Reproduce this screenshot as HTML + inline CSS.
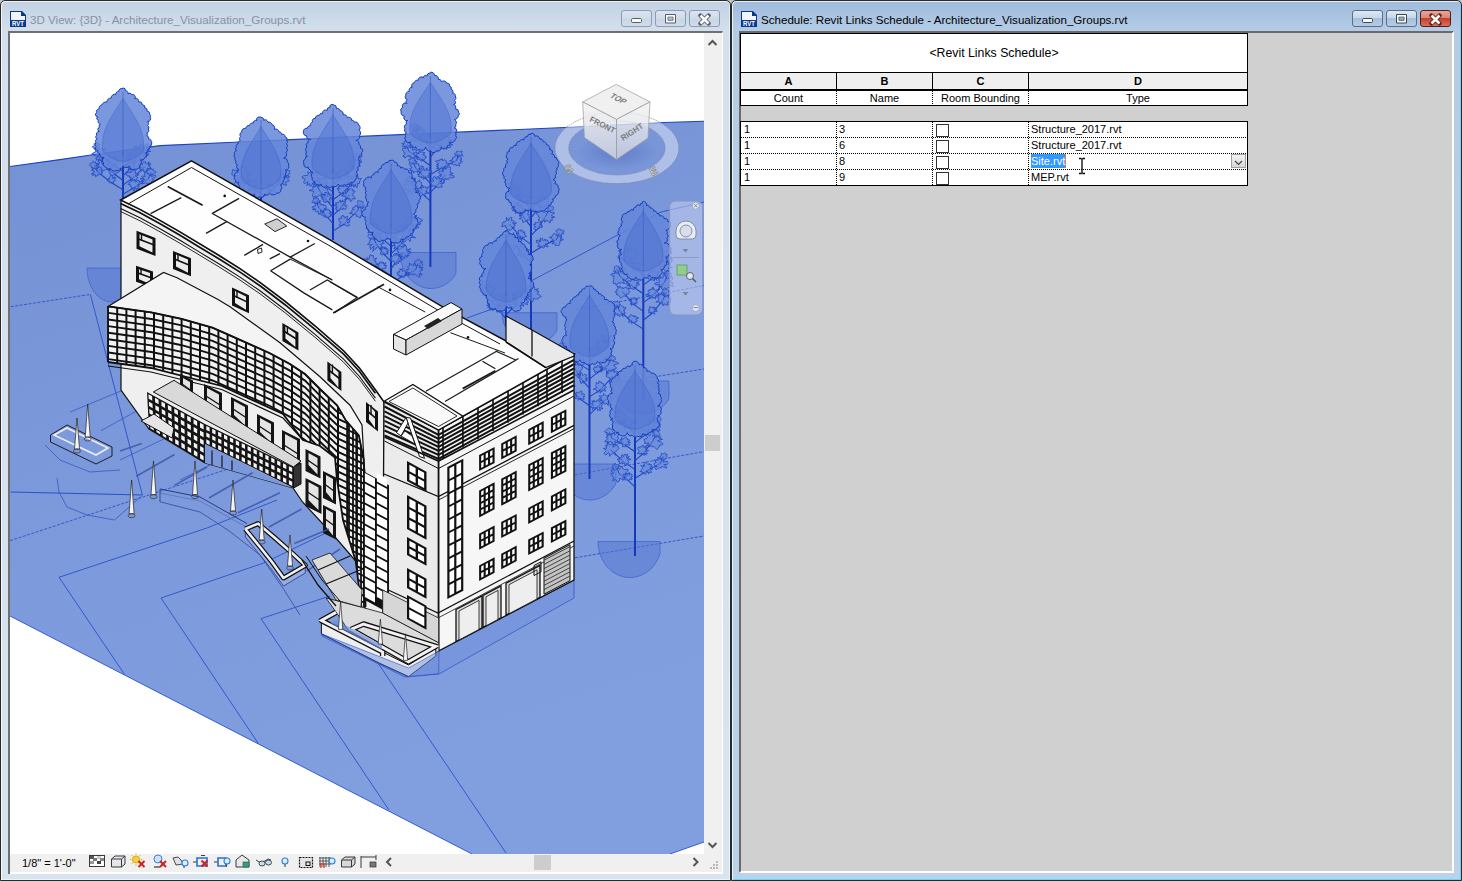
<!DOCTYPE html>
<html><head><meta charset="utf-8">
<style>
*{margin:0;padding:0;box-sizing:border-box}
html,body{width:1462px;height:881px;overflow:hidden;background:#c4c4c4;font-family:"Liberation Sans",sans-serif}
.abs{position:absolute}
.win{position:absolute;top:0;height:881px;border:1px solid #2a2a2a;border-radius:5px 5px 0 0;overflow:hidden;box-shadow:inset 1px 1px 0 rgba(255,255,255,0.75),inset -1px -1px 0 rgba(255,255,255,0.5)}
#wl{left:0;width:731px;background:linear-gradient(#c2d2e3 0px,#d3dfec 30px,#d8e4f0 100%)}
#wr{left:731px;width:731px;background:linear-gradient(#9fbbdb 0px,#b4cce6 30px,#bad2ea 100%);box-shadow:inset 1px 1px 0 rgba(255,255,255,0.75),inset -1px -1px 0 #62d4ff !important}
.title{position:absolute;top:12px;font-size:11.6px;white-space:nowrap;letter-spacing:0}
.btn{position:absolute;top:9px;width:31px;height:17px;border:1px solid #8c9cb3;border-radius:3px}
#wl .btn{background:linear-gradient(#dbe5f0,#cfdbe8 50%,#c8d5e3 51%,#d2dde9)}
#wr .btn{border-color:#5c6e86;background:linear-gradient(#dce8f5,#c5d7ec 45%,#a8c0dc 50%,#b7cce4)}
#wr .btn.close{border-color:#5a1a1a;background:linear-gradient(#e8a496,#d88a7a 45%,#c4402a 50%,#d7725e)}
.ico{position:absolute;top:10px;width:16px;height:16px}
.hd{position:absolute;top:75px;text-align:center;font-weight:bold;font-size:11px}
.nm{position:absolute;top:92px;text-align:center;font-size:11px}
.dt{position:absolute;font-size:11px;white-space:nowrap}
.vdot{position:absolute;width:1px;background:repeating-linear-gradient(#000 0 1px,transparent 1px 2px)}
.hdot{position:absolute;height:1px;background:repeating-linear-gradient(90deg,#000 0 1px,transparent 1px 2px)}
.cb{position:absolute;left:936px;width:13px;height:13px;border:1px solid #333;background:#fff}
</style></head><body>

<!-- LEFT WINDOW -->
<div class="win" id="wl">
  <svg class="ico" style="left:9px" viewBox="0 0 16 16"><path d="M0 0H12L16 4V16H0Z" fill="#0a3a8c"/><path d="M1 1H11V5H15V9H1Z" fill="#f2f5fa"/><text x="8" y="15.3" font-size="6.4" font-weight="bold" fill="#fff" text-anchor="middle" font-family="Liberation Sans" textLength="12" lengthAdjust="spacingAndGlyphs">RVT</text></svg>
  <div class="title" style="left:29px;color:#8593a3">3D View: {3D} - Architecture_Visualization_Groups.rvt</div>
  <div class="btn" style="left:620px"><svg width="29" height="15" style="position:absolute;left:0;top:0"><rect x="9.5" y="7.5" width="10" height="4" rx="1.2" fill="#fbfbf6" stroke="#555e6e" stroke-width="1"/></svg></div>
  <div class="btn" style="left:654px"><svg width="29" height="15" style="position:absolute;left:0;top:0"><path d="M9.5 3.5h10v8.5h-10z M12 6.2h5v3h-5z" fill="#fbfbf6" fill-rule="evenodd" stroke="#555e6e" stroke-width="1"/><rect x="12.5" y="6.5" width="4" height="2.2" fill="#a7bdd8"/></svg></div>
  <div class="btn" style="left:688px"><svg width="29" height="15" style="position:absolute;left:0;top:0"><path d="M10.5 4.5L18.5 12.5M18.5 4.5L10.5 12.5" stroke="#555e6e" stroke-width="4.4" stroke-linecap="round"/><path d="M10.5 4.5L18.5 12.5M18.5 4.5L10.5 12.5" stroke="#fbfbf6" stroke-width="2.6" stroke-linecap="butt"/></svg></div>
  <!-- inner area -->
  <div class="abs" style="left:7px;top:30px;width:715px;height:843px;border-top:2px solid #707070;border-left:2px solid #707070;border-right:1px solid #fff;background:#fff;overflow:hidden" id="vp">
<!--V3D-->
<svg style="position:absolute;left:0;top:0" width="713" height="839" viewBox="10 33 713 839">
<rect x="10" y="33" width="713" height="839" fill="#fff"/>
<defs><linearGradient id="gg" x1="0" y1="0" x2="0.3" y2="1"><stop offset="0" stop-color="#7591d5"/><stop offset="0.5" stop-color="#7c99db"/><stop offset="1" stop-color="#819fdf"/></linearGradient></defs>
<polygon points="10.0,166.5 60.0,159.6 96.0,154.3 160.0,145.6 234.0,142.3 360.0,136.4 570.0,127.3 664.0,122.5 704.0,121.3 704.0,842.0 670.0,854.0 472.0,854.0 10.0,616.0" fill="url(#gg)" stroke="none" stroke-width="1" />
<polyline points="10.0,166.5 60.0,159.6 96.0,154.3 160.0,145.6 234.0,142.3 360.0,136.4 570.0,127.3 664.0,122.5 704.0,121.3" fill="none" stroke="#1c44c4" stroke-width="1.1" />
<polyline points="10.0,616.0 472.0,854.0" fill="none" stroke="#2650d0" stroke-width="0.9" />
<polyline points="670.0,854.0 704.0,842.0" fill="none" stroke="#2650d0" stroke-width="0.9" />
<polyline points="10.7,306.7 90.4,294.4" fill="none" stroke="#1f48c8" stroke-width="0.8" stroke-dasharray="3 1.5"/>
<polyline points="90.4,294.4 142.4,495.0" fill="none" stroke="#1f48c8" stroke-width="0.8" />
<polyline points="10.7,492.0 142.4,495.0" fill="none" stroke="#1f48c8" stroke-width="0.9" />
<polyline points="10.0,540.7 240.0,465.0 300.0,440.0" fill="none" stroke="#1f48c8" stroke-width="0.8" stroke-dasharray="3 1.5"/>
<polyline points="124.4,674.2 59.0,577.3 207.0,528.0 277.0,500.0" fill="none" stroke="#1f48c8" stroke-width="0.8" />
<polyline points="258.0,743.0 161.0,598.0 263.7,563.0 330.0,531.0" fill="none" stroke="#1f48c8" stroke-width="0.8" />
<polyline points="389.0,810.0 261.0,618.6 330.0,596.0" fill="none" stroke="#1f48c8" stroke-width="0.8" />
<polyline points="378.6,664.0 506.0,853.0" fill="none" stroke="#1f48c8" stroke-width="0.8" />
<polyline points="575.0,557.8 704.0,536.0" fill="none" stroke="#1f48c8" stroke-width="0.8" stroke-dasharray="3 1.5"/>
<polyline points="575.0,474.8 704.0,451.6" fill="none" stroke="#1f48c8" stroke-width="0.8" stroke-dasharray="3 1.5"/>
<polyline points="640.6,379.0 704.0,369.0" fill="none" stroke="#1f48c8" stroke-width="0.8" stroke-dasharray="3 1.5"/>
<polyline points="575.0,310.0 644.0,297.0 704.0,285.5" fill="none" stroke="#1f48c8" stroke-width="0.8" stroke-dasharray="3 1.5"/>
<polyline points="531.0,281.0 661.0,212.0 704.0,202.0" fill="none" stroke="#1f48c8" stroke-width="0.8" />
<polyline points="467.0,318.0 506.0,304.0" fill="none" stroke="#1f48c8" stroke-width="0.8" />
<polyline points="57.0,478.0 59.0,492.0 67.0,507.0 87.0,515.0 114.5,520.0 141.7,496.0" fill="none" stroke="#3558c8" stroke-width="0.8" />
<polyline points="70.0,412.0 121.0,391.0" fill="none" stroke="#3558c8" stroke-width="0.8" />
<polyline points="101.0,430.7 145.5,406.0" fill="none" stroke="#3558c8" stroke-width="0.8" />
<polyline points="120.0,460.0 170.0,436.0" fill="none" stroke="#3558c8" stroke-width="0.8" />
<polyline points="180.0,480.0 240.0,450.0" fill="none" stroke="#3558c8" stroke-width="0.8" />
<polygon points="456.0,252.5 456.0,255.6 456.0,258.8 456.0,261.8 456.0,264.8 456.0,267.7 456.0,270.5 456.0,273.1 454.7,275.6 452.9,278.0 450.9,280.1 448.8,282.0 446.5,283.7 444.1,285.1 441.6,286.3 439.0,287.3 436.4,288.0 433.7,288.4 431.0,288.5 428.3,288.4 425.6,288.0 423.0,287.3 420.4,286.3 417.9,285.1 415.5,283.7 413.2,282.0 411.1,280.1 409.1,278.0 407.3,275.6 405.6,273.1 404.2,270.5 402.9,267.7 401.9,264.8 401.1,261.8 400.5,258.8 400.1,255.6 400.0,252.5" fill="#5476d2" stroke="#3058cc" stroke-width="0.6" fill-opacity="0.5"/>
<polygon points="137.0,268.0 136.9,271.0 136.6,273.9 136.1,276.8 135.5,279.6 134.7,282.4 133.7,285.0 132.5,287.5 131.2,289.9 129.7,292.0 128.1,294.0 126.3,295.9 124.5,297.4 122.6,298.8 120.6,299.9 118.5,300.8 116.3,301.5 114.2,301.9 112.0,302.0 109.8,301.9 107.7,301.5 105.5,300.8 103.4,299.9 101.4,298.8 99.5,297.4 97.7,295.9 95.9,294.0 94.3,292.0 92.8,289.9 91.5,287.5 90.3,285.0 89.3,282.4 88.5,279.6 87.9,276.8 87.4,273.9 87.1,271.0 87.0,268.0" fill="#5476d2" stroke="#3058cc" stroke-width="0.6" fill-opacity="0.5"/>
<polygon points="616.0,464.0 616.0,467.1 616.0,470.3 616.0,473.3 616.0,476.3 616.0,479.2 616.0,482.0 615.4,484.6 613.7,487.1 611.9,489.5 609.9,491.6 607.8,493.5 605.5,495.2 603.1,496.6 600.6,497.8 598.0,498.8 595.4,499.5 592.7,499.9 590.0,500.0 587.3,499.9 584.6,499.5 582.0,498.8 579.4,497.8 576.9,496.6 574.5,495.2 572.2,493.5 570.1,491.6 568.1,489.5 566.3,487.1 564.6,484.6 563.2,482.0 561.9,479.2 560.9,476.3 560.1,473.3 559.5,470.3 559.1,467.1 559.0,464.0" fill="#5476d2" stroke="#3058cc" stroke-width="0.6" fill-opacity="0.5"/>
<polygon points="660.0,541.5 660.0,544.6 660.0,547.8 660.0,550.8 660.0,553.8 659.0,556.7 657.7,559.5 656.2,562.1 654.5,564.6 652.6,567.0 650.6,569.1 648.4,571.0 646.0,572.7 643.5,574.1 640.9,575.3 638.3,576.3 635.6,577.0 632.8,577.4 630.0,577.5 627.2,577.4 624.4,577.0 621.7,576.3 619.1,575.3 616.5,574.1 614.0,572.7 611.6,571.0 609.4,569.1 607.4,567.0 605.5,564.6 603.8,562.1 602.3,559.5 601.0,556.7 599.9,553.8 599.1,550.8 598.5,547.8 598.1,544.6 598.0,541.5" fill="#5476d2" stroke="#3058cc" stroke-width="0.6" fill-opacity="0.5"/>
<polygon points="669.0,381.0 669.0,383.9 669.0,386.7 669.0,389.5 669.0,392.3 669.0,394.9 669.0,397.5 668.4,399.9 666.7,402.2 664.9,404.3 662.9,406.3 660.8,408.0 658.5,409.6 656.1,410.9 653.6,412.0 651.0,412.9 648.4,413.5 645.7,413.9 643.0,414.0 640.3,413.9 637.6,413.5 635.0,412.9 632.4,412.0 629.9,410.9 627.5,409.6 625.2,408.0 623.1,406.3 621.1,404.3 619.3,402.2 617.6,399.9 616.2,397.5 614.9,394.9 613.9,392.3 613.1,389.5 612.5,386.7 612.1,383.9 612.0,381.0" fill="#5476d2" stroke="#3058cc" stroke-width="0.6" fill-opacity="0.5"/>
<polygon points="557.0,312.7 557.0,315.5 557.0,318.3 557.0,321.0 557.0,323.6 557.0,326.2 557.0,328.7 556.6,331.1 555.0,333.3 553.2,335.3 551.3,337.2 549.2,338.9 547.0,340.4 544.7,341.7 542.3,342.8 539.8,343.6 537.2,344.2 534.6,344.6 532.0,344.7 529.4,344.6 526.8,344.2 524.2,343.6 521.7,342.8 519.3,341.7 517.0,340.4 514.8,338.9 512.7,337.2 510.8,335.3 509.0,333.3 507.4,331.1 506.0,328.7 504.8,326.2 503.8,323.6 503.0,321.0 502.5,318.3 502.1,315.5 502.0,312.7" fill="#5476d2" stroke="#3058cc" stroke-width="0.6" fill-opacity="0.5"/>
<polyline points="123.0,151.8 123.0,200.0" fill="none" stroke="#1539b9" stroke-width="2.0" />
<polyline points="123.0,166.6 132.0,159.6 143.0,150.2" fill="none" stroke="#1d46c8" stroke-width="1.1" />
<polygon points="148.3,150.2 150.8,151.4 148.0,151.8 147.4,152.5 148.9,154.7 147.4,154.9 145.8,154.6 146.0,157.5 143.8,154.1 143.0,154.2 141.5,157.8 140.0,157.5 138.2,157.6 139.7,153.7 137.9,154.0 136.9,153.3 137.3,152.0 137.2,151.1 134.3,150.2 133.5,148.7 136.4,148.0 139.0,148.1 138.0,146.4 139.7,146.6 140.3,145.9 140.5,144.0 142.2,146.0 143.0,145.2 143.9,145.6 144.5,146.6 147.5,143.1 148.3,144.5 146.6,147.4 150.5,146.3 149.9,147.9 149.1,149.2" fill="#6485d6" stroke="#1d46c8" stroke-width="0.8" fill-opacity="0.6"/>
<polygon points="134.6,156.6 136.4,157.3 135.1,157.6 136.1,158.7 134.5,158.5 134.3,159.0 133.4,158.8 133.7,160.9 132.5,159.3 132.0,160.4 131.3,160.2 131.0,159.0 130.6,158.8 130.2,158.5 127.9,159.7 127.3,159.0 127.9,157.9 127.7,157.3 127.8,156.6 128.9,156.1 127.2,155.0 129.4,155.3 129.8,154.9 129.5,153.9 129.6,152.9 130.8,153.7 131.2,152.6 132.0,153.0 132.7,153.2 133.4,153.2 133.9,153.6 134.7,153.7 134.9,154.4 136.6,154.2 134.6,155.7 136.5,155.9" fill="#6485d6" stroke="#1d46c8" stroke-width="0.8" fill-opacity="0.6"/>
<polyline points="123.0,171.2 112.4,164.2 99.5,153.0" fill="none" stroke="#1d46c8" stroke-width="1.1" />
<polygon points="104.3,153.0 104.5,153.8 104.2,154.6 103.2,155.0 102.2,155.1 102.6,156.4 102.7,158.0 101.9,159.0 100.2,156.7 99.5,159.2 98.9,156.1 97.4,158.1 97.3,156.4 96.7,155.9 95.8,155.8 94.1,155.8 95.0,154.5 91.7,154.2 92.7,153.0 95.0,152.3 95.1,151.6 96.5,151.5 94.7,149.4 95.0,148.2 95.8,147.3 97.2,147.3 98.4,147.7 99.5,149.6 100.2,149.1 101.1,148.9 102.5,148.2 102.5,149.8 105.4,148.5 104.9,150.2 103.7,151.6 103.4,152.4" fill="#6485d6" stroke="#1d46c8" stroke-width="0.8" fill-opacity="0.6"/>
<polygon points="117.0,161.2 118.4,162.2 117.7,163.0 116.8,163.5 114.6,162.9 115.8,164.9 114.7,164.8 114.5,166.4 113.1,164.9 112.4,163.7 111.4,166.3 110.6,165.7 109.4,165.9 109.4,164.5 108.6,164.1 110.1,162.4 108.3,162.6 109.4,161.7 106.5,161.2 109.6,160.8 109.9,160.4 109.0,159.5 109.3,158.9 108.7,157.3 110.0,157.5 110.8,157.3 111.8,158.1 112.4,158.2 113.2,157.0 113.5,158.6 115.4,156.6 114.9,158.6 116.1,158.5 114.6,160.1 116.2,160.0 116.0,160.7" fill="#6485d6" stroke="#1d46c8" stroke-width="0.8" fill-opacity="0.6"/>
<polyline points="99.5,153.0 96.5,146.0" fill="none" stroke="#1d46c8" stroke-width="0.9" />
<polygon points="99.0,146.0 99.5,146.7 99.5,147.5 98.9,148.1 97.9,148.2 97.5,149.3 96.5,149.5 95.2,149.9 95.0,148.1 93.5,148.5 94.2,147.1 91.9,147.0 93.7,146.0 94.7,145.6 94.2,144.9 93.9,143.8 94.7,143.3 95.5,142.9 96.5,143.9 97.6,142.3 98.5,143.0 98.4,144.4 99.9,144.3 99.6,145.3" fill="#6485d6" stroke="#1d46c8" stroke-width="0.7" fill-opacity="0.6"/>
<polyline points="123.0,175.9 130.0,168.9 138.5,155.2" fill="none" stroke="#1d46c8" stroke-width="1.1" />
<polygon points="147.8,155.2 146.5,156.5 145.2,157.4 144.5,158.3 143.6,159.1 143.0,160.1 141.4,159.7 140.8,160.9 139.6,161.0 138.5,160.7 137.3,161.6 135.1,163.6 135.9,159.2 132.4,161.8 131.7,160.4 128.9,160.2 128.8,158.4 132.4,156.2 128.8,155.2 131.2,154.1 130.4,152.6 130.7,151.2 132.6,150.8 134.9,151.4 134.5,149.0 134.7,145.9 136.7,146.2 138.5,150.6 139.4,150.6 140.8,149.5 141.8,150.0 144.6,148.7 143.6,151.4 143.3,152.8 147.3,152.4 144.4,154.3" fill="#6485d6" stroke="#1d46c8" stroke-width="0.8" fill-opacity="0.6"/>
<polygon points="134.8,165.9 134.4,166.6 132.7,166.7 134.3,168.1 132.9,168.0 132.1,168.1 131.3,167.8 131.6,170.0 130.5,168.4 130.0,170.1 129.4,168.8 128.4,169.6 128.8,167.7 128.4,167.6 128.0,167.4 127.5,167.2 127.3,166.7 127.9,166.2 125.5,165.9 127.0,165.4 126.3,164.6 127.8,164.7 127.0,163.6 128.4,164.1 128.1,162.9 129.1,163.8 129.2,161.7 130.0,161.3 130.5,163.0 131.3,162.6 131.7,163.2 132.8,162.8 133.4,163.3 133.4,164.1 134.1,164.5 133.6,165.3" fill="#6485d6" stroke="#1d46c8" stroke-width="0.8" fill-opacity="0.6"/>
<polyline points="123.0,180.5 113.8,173.5 102.6,164.4" fill="none" stroke="#1d46c8" stroke-width="1.1" />
<polygon points="110.2,164.4 105.6,164.9 106.9,165.9 108.2,167.4 108.2,168.7 107.6,169.8 105.8,169.4 104.9,170.3 103.7,170.3 102.6,171.4 101.7,169.0 100.0,170.8 98.5,170.8 97.4,170.0 97.3,168.4 98.7,166.4 98.0,165.9 94.5,165.7 98.7,164.4 96.1,163.4 99.1,163.3 99.8,163.0 98.1,161.0 99.1,160.7 98.7,158.5 100.8,160.0 101.7,160.1 102.6,159.0 103.7,158.5 103.7,161.5 105.2,160.4 106.0,160.8 108.7,159.8 107.3,162.0 109.5,162.2 108.5,163.5" fill="#6485d6" stroke="#1d46c8" stroke-width="0.8" fill-opacity="0.6"/>
<polygon points="120.7,170.5 119.8,171.4 118.7,172.1 118.1,172.7 116.6,172.6 116.2,173.1 115.5,173.1 115.7,175.2 114.7,174.8 113.8,174.5 112.8,175.8 111.9,175.1 110.5,175.6 110.1,174.5 109.9,173.5 110.1,172.4 109.3,171.9 108.7,171.3 108.5,170.5 110.1,169.9 108.3,168.7 110.6,168.8 111.3,168.6 110.5,166.9 111.7,167.2 112.4,167.0 112.8,165.2 113.8,166.8 114.9,165.1 115.8,165.4 116.3,166.5 117.2,166.8 116.3,168.6 116.6,169.0 116.4,169.7 119.5,169.6" fill="#6485d6" stroke="#1d46c8" stroke-width="0.8" fill-opacity="0.6"/>
<polyline points="102.6,164.4 99.6,157.4" fill="none" stroke="#1d46c8" stroke-width="0.9" />
<polygon points="104.3,157.4 103.8,158.4 102.0,158.6 103.0,160.4 101.4,160.2 100.4,160.1 99.6,159.6 98.3,161.3 98.2,159.5 96.3,160.2 96.7,158.8 95.4,158.4 97.3,157.4 97.2,156.9 97.3,156.3 97.5,155.7 98.2,155.4 99.0,155.8 99.6,153.7 100.3,155.0 101.5,154.6 101.3,156.0 102.8,155.8 101.9,156.9" fill="#6485d6" stroke="#1d46c8" stroke-width="0.7" fill-opacity="0.6"/>
<polyline points="123.0,185.1 132.7,178.1 144.6,166.8" fill="none" stroke="#1d46c8" stroke-width="1.1" />
<polygon points="149.4,166.8 151.2,167.9 151.3,169.0 147.2,168.2 148.0,169.4 147.9,170.3 146.4,169.6 146.9,172.6 145.8,172.8 144.6,172.7 143.8,171.1 143.5,169.6 141.7,171.4 140.9,170.8 141.3,169.3 140.0,169.2 139.3,168.6 141.2,167.4 140.9,166.8 138.1,165.8 139.8,165.3 140.2,164.5 140.5,163.7 142.6,164.6 142.3,163.2 142.9,162.6 143.6,161.6 144.6,162.0 145.6,161.6 145.9,163.6 146.3,164.1 149.3,161.8 148.0,164.3 150.9,163.6 148.3,165.6 150.4,165.9" fill="#6485d6" stroke="#1d46c8" stroke-width="0.8" fill-opacity="0.6"/>
<polygon points="138.6,175.1 136.5,175.7 135.5,176.0 137.8,177.7 137.1,178.5 136.4,179.0 136.2,180.5 135.0,180.7 133.8,180.9 132.7,181.0 132.1,178.2 130.4,180.8 130.5,178.5 131.0,177.0 129.5,177.5 129.4,176.9 129.9,176.0 127.5,175.9 126.3,175.1 126.6,174.1 126.7,173.2 126.9,172.1 129.1,172.4 130.4,172.6 130.1,171.0 131.6,172.3 132.0,171.2 132.7,169.2 133.6,170.5 134.9,169.7 135.7,170.5 135.0,172.7 135.9,172.7 135.5,173.7 136.8,173.8 138.9,174.1" fill="#6485d6" stroke="#1d46c8" stroke-width="0.8" fill-opacity="0.6"/>
<polyline points="123.0,189.7 111.5,182.7 97.4,171.8" fill="none" stroke="#1d46c8" stroke-width="1.1" />
<polygon points="101.3,171.8 102.8,172.7 100.9,173.0 101.6,174.0 101.0,174.5 99.9,174.5 99.2,174.5 98.5,174.4 98.2,175.5 97.4,174.8 96.5,176.4 95.5,176.7 95.5,174.9 94.9,174.6 92.6,175.5 93.8,173.7 91.2,173.9 93.8,172.4 93.6,171.8 94.5,171.4 91.5,169.9 93.4,169.7 91.8,167.6 93.8,167.9 95.6,169.0 96.1,168.7 96.6,167.5 97.4,168.6 98.2,168.0 99.5,166.6 100.0,167.8 101.3,167.6 101.5,168.8 101.6,169.7 101.1,170.6 101.8,171.1" fill="#6485d6" stroke="#1d46c8" stroke-width="0.8" fill-opacity="0.6"/>
<polygon points="115.1,179.7 115.8,180.4 114.8,180.8 114.3,181.2 113.4,181.1 113.3,181.7 113.9,183.5 112.8,183.0 112.2,183.4 111.5,182.1 110.9,182.6 110.2,182.8 109.5,182.8 109.2,182.2 109.0,181.6 108.4,181.3 107.5,181.1 107.7,180.4 107.6,179.7 109.4,179.4 108.5,178.8 109.2,178.6 109.7,178.4 109.4,177.5 109.8,177.1 110.2,176.4 110.7,175.6 111.5,175.3 112.3,175.6 112.4,177.4 112.4,178.3 114.4,176.7 113.3,178.4 115.9,177.5 115.5,178.4 114.5,179.3" fill="#6485d6" stroke="#1d46c8" stroke-width="0.8" fill-opacity="0.6"/>
<polyline points="97.4,171.8 94.4,164.8" fill="none" stroke="#1d46c8" stroke-width="0.9" />
<polygon points="99.0,164.8 96.2,165.2 96.8,166.0 97.2,167.2 96.7,168.1 95.6,168.7 94.4,168.1 93.4,168.3 92.5,167.8 91.2,167.6 91.8,166.1 90.1,165.8 89.5,164.8 89.8,163.8 90.9,163.1 92.5,163.2 93.0,162.7 93.2,160.8 94.4,162.8 95.4,161.6 95.5,163.2 95.8,163.7 97.5,163.3 97.5,164.1" fill="#6485d6" stroke="#1d46c8" stroke-width="0.7" fill-opacity="0.6"/>
<polyline points="123.0,194.4 134.3,187.4 148.2,178.9" fill="none" stroke="#1d46c8" stroke-width="1.1" />
<polygon points="152.4,178.9 153.6,179.8 152.6,180.4 152.2,181.0 151.4,181.4 152.5,183.6 151.3,183.8 150.1,183.7 149.0,183.0 148.2,186.3 147.3,183.2 146.4,183.4 145.7,182.8 144.0,183.4 141.5,184.0 143.4,181.4 140.5,181.5 144.7,179.5 140.1,178.9 143.7,178.2 141.6,176.8 142.4,175.9 145.1,176.6 144.7,175.3 144.7,173.5 145.1,171.4 146.6,171.1 148.2,174.2 149.3,173.0 150.5,173.2 150.3,175.6 152.4,174.4 151.4,176.5 155.3,175.2 155.8,176.4 153.9,178.0" fill="#6485d6" stroke="#1d46c8" stroke-width="0.8" fill-opacity="0.6"/>
<polygon points="138.1,184.4 138.6,185.0 139.3,186.0 137.4,186.0 139.5,188.3 139.2,189.6 136.8,188.2 136.4,189.6 134.8,187.0 134.3,190.7 133.1,190.5 133.0,187.6 130.9,189.8 131.6,187.3 131.4,186.6 130.2,186.5 130.3,185.7 130.7,184.9 128.0,184.4 128.8,183.5 129.1,182.6 130.3,182.3 130.7,181.6 131.1,180.9 131.7,180.3 132.6,180.1 133.6,180.9 134.3,179.1 135.1,180.4 135.8,180.7 135.7,182.2 138.4,180.0 138.4,181.3 140.3,181.3 139.4,182.7 138.5,183.7" fill="#6485d6" stroke="#1d46c8" stroke-width="0.8" fill-opacity="0.6"/>
<polyline points="148.2,178.9 151.2,171.9" fill="none" stroke="#1d46c8" stroke-width="0.9" />
<polygon points="156.1,171.9 155.4,172.9 154.4,173.6 153.7,174.1 152.5,173.9 151.9,174.2 151.2,174.0 150.1,175.3 149.4,174.6 148.9,173.9 147.4,173.8 147.3,172.8 146.4,171.9 147.1,171.0 148.0,170.4 149.0,170.1 149.5,169.4 150.2,168.8 151.2,168.7 151.9,169.7 153.3,168.8 153.0,170.4 153.2,170.9 154.8,171.1" fill="#6485d6" stroke="#1d46c8" stroke-width="0.7" fill-opacity="0.6"/>
<path d="M123.0,87.9A2.5,2.5 0 0,1 125.4,90.7A2.3,2.3 0 0,1 127.9,93.6A2.8,2.8 0 0,1 131.8,94.6A2.6,2.6 0 0,1 134.7,98.7A2.6,2.6 0 0,1 138.5,101.7A3.6,3.6 0 0,1 142.5,104.7A2.8,2.8 0 0,1 144.9,108.1A1.7,1.7 0 0,1 146.7,110.8A3.0,3.0 0 0,1 149.6,114.3A1.7,1.7 0 0,1 150.1,117.1A2.7,2.7 0 0,1 147.4,121.4A2.5,2.5 0 0,1 147.6,125.5A2.5,2.5 0 0,1 148.4,129.1A2.4,2.4 0 0,1 146.8,132.9A2.1,2.1 0 0,1 146.8,136.0A1.9,1.9 0 0,1 148.5,138.9A3.5,3.5 0 0,1 151.7,143.0A2.7,2.7 0 0,1 149.6,146.3A2.0,2.0 0 0,1 147.9,149.0A2.9,2.9 0 0,1 145.8,152.6A3.6,3.6 0 0,1 144.7,157.8A2.9,2.9 0 0,1 140.5,159.6A3.7,3.7 0 0,1 139.9,165.0A3.8,3.8 0 0,1 135.2,169.2A4.2,4.2 0 0,1 129.2,166.1A3.8,3.8 0 0,1 123.1,166.0A2.7,2.7 0 0,1 120.1,168.5A2.1,2.1 0 0,1 116.8,170.4A4.4,4.4 0 0,1 110.4,168.5A3.5,3.5 0 0,1 105.4,166.9A2.6,2.6 0 0,1 103.6,163.0A3.3,3.3 0 0,1 104.1,157.5A3.1,3.1 0 0,1 99.9,153.9A2.7,2.7 0 0,1 97.8,150.4A2.3,2.3 0 0,1 96.1,146.4A2.5,2.5 0 0,1 95.9,142.7A2.3,2.3 0 0,1 97.2,139.0A2.1,2.1 0 0,1 96.5,135.4A3.1,3.1 0 0,1 99.4,131.3A2.0,2.0 0 0,1 99.4,127.4A2.3,2.3 0 0,1 100.5,124.1A2.6,2.6 0 0,1 98.2,120.5A2.6,2.6 0 0,1 97.4,116.7A2.1,2.1 0 0,1 96.5,112.8A3.3,3.3 0 0,1 99.2,108.9A3.3,3.3 0 0,1 101.9,105.0A4.1,4.1 0 0,1 107.0,102.1A3.9,3.9 0 0,1 111.3,98.0A3.4,3.4 0 0,1 115.8,94.5A2.6,2.6 0 0,1 118.6,91.5A3.1,3.1 0 0,1 122.5,88.6A0.6,0.6 0 0,1 123.0,87.9Z" fill="#6586d8" fill-opacity="0.86" stroke="#123cc0" stroke-width="1"/>
<polygon points="123.0,98.1 123.8,99.7 124.7,101.2 125.7,102.8 126.7,104.4 127.7,106.0 128.8,107.6 129.8,109.1 130.8,110.7 131.8,112.3 132.8,113.9 133.7,115.5 134.7,117.0 135.6,118.6 136.4,120.2 137.3,121.8 138.1,123.4 138.8,124.9 139.5,126.5 140.2,128.1 140.8,129.7 141.3,131.3 141.8,132.8 142.3,134.4 142.7,136.0 143.0,137.6 143.2,139.2 143.4,140.7 143.6,142.3 143.7,143.9 143.7,145.5 143.7,147.1 143.7,148.6 143.4,150.2 142.6,151.8 141.2,153.4 139.3,155.0 136.8,156.5 133.8,158.1 130.2,159.7 126.1,161.3 119.9,161.3 115.8,159.7 112.2,158.1 109.2,156.5 106.7,155.0 104.8,153.4 103.4,151.8 102.6,150.2 102.3,148.6 102.3,147.1 102.3,145.5 102.3,143.9 102.4,142.3 102.6,140.7 102.8,139.2 103.0,137.6 103.3,136.0 103.7,134.4 104.2,132.8 104.7,131.3 105.2,129.7 105.8,128.1 106.5,126.5 107.2,124.9 107.9,123.4 108.7,121.8 109.6,120.2 110.4,118.6 111.3,117.0 112.3,115.5 113.2,113.9 114.2,112.3 115.2,110.7 116.2,109.1 117.2,107.6 118.3,106.0 119.3,104.4 120.3,102.8 121.3,101.2 122.2,99.7 123.0,98.1" fill="#4a6ed0" stroke="#2f58c8" stroke-width="0.6" fill-opacity="0.45" stroke-opacity="0.6"/>
<polyline points="123.0,91.6 123.0,155.8" fill="none" stroke="#3c62cc" stroke-width="0.7" />
<polyline points="261.0,179.4 261.0,208.0" fill="none" stroke="#1539b9" stroke-width="2.0" />
<polyline points="261.0,194.0 252.3,187.0 241.7,174.5" fill="none" stroke="#1d46c8" stroke-width="1.1" />
<polygon points="250.9,174.5 247.5,175.5 246.1,176.0 249.6,178.7 248.6,179.8 247.4,180.7 247.1,183.0 245.2,183.3 243.5,183.5 241.7,183.8 240.7,179.4 238.1,183.4 238.2,179.9 239.0,177.5 236.7,178.3 236.5,177.3 237.3,176.0 233.5,175.8 231.7,174.5 232.1,173.0 232.3,171.5 232.6,169.8 236.0,170.3 238.0,170.6 237.6,168.2 239.9,170.2 240.5,168.4 241.7,165.2 243.1,167.4 245.1,166.0 246.3,167.3 245.3,170.7 246.7,170.7 246.1,172.3 248.0,172.5 251.3,173.0" fill="#6485d6" stroke="#1d46c8" stroke-width="0.8" fill-opacity="0.6"/>
<polygon points="256.9,184.0 257.6,184.8 254.6,184.7 255.4,185.6 256.1,186.9 255.8,187.7 253.5,185.9 253.8,187.6 253.2,188.7 252.3,188.4 251.4,188.7 250.3,188.9 250.7,186.5 250.1,186.4 248.7,186.8 249.9,185.3 249.2,185.0 246.7,184.9 248.1,184.0 247.7,183.3 247.2,182.3 247.8,181.6 248.5,181.2 249.5,181.0 250.6,181.3 250.6,179.7 251.7,180.8 252.3,181.2 253.0,180.3 253.3,181.6 254.3,180.8 254.7,181.5 255.1,181.9 255.1,182.5 256.7,182.6 256.2,183.4" fill="#6485d6" stroke="#1d46c8" stroke-width="0.8" fill-opacity="0.6"/>
<polyline points="261.0,198.0 270.8,191.0 282.9,179.7" fill="none" stroke="#1d46c8" stroke-width="1.1" />
<polygon points="288.4,179.7 289.4,180.7 287.9,181.4 287.1,181.9 285.7,181.8 285.6,182.6 286.5,185.4 284.8,184.6 284.0,185.3 282.9,183.3 282.0,184.0 281.0,184.4 279.9,184.4 279.4,183.4 279.1,182.5 278.2,182.1 276.8,181.7 277.0,180.6 277.0,179.7 279.7,179.2 278.3,178.2 279.4,177.9 280.1,177.6 279.7,176.3 280.3,175.7 280.8,174.7 281.6,173.4 282.9,172.9 284.1,173.5 284.3,176.2 284.3,177.5 287.2,175.0 285.6,177.7 289.5,176.3 288.9,177.7 287.5,179.0" fill="#6485d6" stroke="#1d46c8" stroke-width="0.8" fill-opacity="0.6"/>
<polygon points="274.5,188.0 272.9,188.3 273.5,188.9 273.6,189.5 274.6,190.8 274.2,191.7 272.3,190.3 271.7,190.0 271.5,191.5 270.8,192.5 270.2,191.2 270.2,189.7 268.8,191.2 268.4,190.6 267.8,190.3 268.7,189.1 268.1,188.9 266.4,188.7 268.3,188.0 267.9,187.5 267.8,187.0 268.3,186.7 268.8,186.5 268.5,185.5 268.4,184.2 270.1,186.3 270.0,183.7 270.8,184.8 271.3,185.4 272.3,184.5 272.9,184.8 273.1,185.5 273.0,186.3 273.6,186.6 274.9,186.7 274.4,187.4" fill="#6485d6" stroke="#1d46c8" stroke-width="0.8" fill-opacity="0.6"/>
<polyline points="282.9,179.7 285.9,172.7" fill="none" stroke="#1d46c8" stroke-width="0.9" />
<polygon points="289.5,172.7 290.0,173.7 288.3,173.9 288.5,175.0 288.0,176.0 286.6,175.1 285.9,176.3 284.8,176.1 283.6,176.0 283.0,175.2 284.1,173.6 283.5,173.2 282.8,172.7 283.2,172.1 282.2,170.9 283.9,171.0 283.5,169.2 284.7,168.9 285.9,169.7 286.7,170.0 287.8,169.9 288.3,170.6 290.0,170.7 289.7,171.8" fill="#6485d6" stroke="#1d46c8" stroke-width="0.7" fill-opacity="0.6"/>
<polyline points="261.0,202.0 250.9,195.0 238.6,187.0" fill="none" stroke="#1d46c8" stroke-width="1.1" />
<polygon points="243.2,187.0 243.7,187.8 244.6,189.0 242.4,189.0 244.9,191.8 244.5,193.4 241.6,191.7 241.1,193.4 239.2,190.2 238.6,194.7 237.1,194.5 236.9,191.0 234.3,193.6 235.2,190.5 234.9,189.7 233.5,189.6 233.6,188.6 234.1,187.7 230.8,187.0 231.7,185.9 232.1,184.9 233.6,184.4 234.1,183.6 234.6,182.7 235.4,182.0 236.4,181.7 237.7,182.7 238.6,180.5 239.5,182.1 240.4,182.5 240.2,184.4 243.5,181.7 243.5,183.2 245.9,183.2 244.8,184.9 243.6,186.2" fill="#6485d6" stroke="#1d46c8" stroke-width="0.8" fill-opacity="0.6"/>
<polygon points="255.3,192.0 255.9,192.8 255.3,193.5 255.5,194.4 254.5,194.7 253.6,194.9 253.0,195.3 252.8,196.8 251.5,195.1 250.9,195.7 250.1,196.0 249.6,195.3 248.1,196.4 247.9,195.2 249.1,193.3 247.8,193.6 245.6,193.7 247.9,192.5 247.5,192.0 248.5,191.6 247.6,190.9 248.0,190.5 249.1,190.7 247.7,188.6 249.3,189.6 249.9,189.5 250.4,189.5 250.9,189.0 251.7,187.9 252.3,188.6 253.0,188.7 253.2,189.5 254.0,189.6 255.1,189.8 255.7,190.4 255.1,191.3" fill="#6485d6" stroke="#1d46c8" stroke-width="0.8" fill-opacity="0.6"/>
<path d="M261.0,117.6A2.2,2.2 0 0,1 263.7,120.2A2.8,2.8 0 0,1 268.0,122.4A2.8,2.8 0 0,1 271.7,124.4A3.6,3.6 0 0,1 274.4,129.3A3.3,3.3 0 0,1 279.0,131.9A2.4,2.4 0 0,1 281.7,134.5A2.2,2.2 0 0,1 285.0,136.6A3.0,3.0 0 0,1 286.9,140.5A2.0,2.0 0 0,1 286.4,143.7A2.6,2.6 0 0,1 286.5,147.7A3.4,3.4 0 0,1 286.0,152.6A3.6,3.6 0 0,1 283.7,158.1A2.9,2.9 0 0,1 287.2,161.8A2.7,2.7 0 0,1 288.5,165.4A3.1,3.1 0 0,1 285.5,170.0A2.7,2.7 0 0,1 285.3,174.0A2.4,2.4 0 0,1 283.9,177.1A2.6,2.6 0 0,1 283.3,180.8A3.5,3.5 0 0,1 280.5,184.7A3.9,3.9 0 0,1 280.7,190.2A2.8,2.8 0 0,1 276.8,193.0A4.6,4.6 0 0,1 269.7,193.4A3.3,3.3 0 0,1 264.5,194.2A3.4,3.4 0 0,1 259.2,196.9A3.1,3.1 0 0,1 254.2,194.0A2.8,2.8 0 0,1 249.0,194.5A2.5,2.5 0 0,1 245.4,192.3A2.2,2.2 0 0,1 242.2,189.8A2.4,2.4 0 0,1 239.9,186.3A2.6,2.6 0 0,1 238.7,182.5A2.0,2.0 0 0,1 235.8,180.0A2.2,2.2 0 0,1 234.9,176.2A2.8,2.8 0 0,1 237.9,172.1A1.9,1.9 0 0,1 238.9,169.6A2.9,2.9 0 0,1 237.4,164.9A2.4,2.4 0 0,1 236.1,161.2A2.2,2.2 0 0,1 235.3,158.1A2.2,2.2 0 0,1 234.7,154.8A2.6,2.6 0 0,1 236.4,150.8A2.1,2.1 0 0,1 236.4,147.4A2.5,2.5 0 0,1 238.0,143.9A2.5,2.5 0 0,1 240.4,140.8A2.7,2.7 0 0,1 240.7,136.6A2.9,2.9 0 0,1 241.7,132.0A3.1,3.1 0 0,1 245.7,128.5A3.0,3.0 0 0,1 249.5,125.7A2.8,2.8 0 0,1 253.4,123.2A2.5,2.5 0 0,1 256.8,120.5A2.5,2.5 0 0,1 259.9,117.1A0.7,0.7 0 0,1 261.0,117.6Z" fill="#6586d8" fill-opacity="0.86" stroke="#123cc0" stroke-width="1"/>
<polygon points="261.0,126.4 261.8,127.9 262.7,129.5 263.6,131.0 264.6,132.6 265.6,134.2 266.5,135.7 267.5,137.3 268.5,138.8 269.5,140.4 270.4,142.0 271.3,143.5 272.2,145.1 273.1,146.6 274.0,148.2 274.8,149.8 275.5,151.3 276.2,152.9 276.9,154.4 277.6,156.0 278.1,157.6 278.7,159.1 279.2,160.7 279.6,162.2 280.0,163.8 280.3,165.4 280.5,166.9 280.7,168.5 280.8,170.0 280.9,171.6 280.9,173.2 280.9,174.7 280.9,176.3 280.7,177.8 279.9,179.4 278.5,181.0 276.7,182.5 274.3,184.1 271.4,185.6 268.0,187.2 264.0,188.8 258.0,188.8 254.0,187.2 250.6,185.6 247.7,184.1 245.3,182.5 243.5,181.0 242.1,179.4 241.3,177.8 241.1,176.3 241.1,174.7 241.1,173.2 241.1,171.6 241.2,170.0 241.3,168.5 241.5,166.9 241.7,165.4 242.0,163.8 242.4,162.2 242.8,160.7 243.3,159.1 243.9,157.6 244.4,156.0 245.1,154.4 245.8,152.9 246.5,151.3 247.2,149.8 248.0,148.2 248.9,146.6 249.8,145.1 250.7,143.5 251.6,142.0 252.5,140.4 253.5,138.8 254.5,137.3 255.5,135.7 256.4,134.2 257.4,132.6 258.4,131.0 259.3,129.5 260.2,127.9 261.0,126.4" fill="#4a6ed0" stroke="#2f58c8" stroke-width="0.6" fill-opacity="0.45" stroke-opacity="0.6"/>
<polyline points="261.0,120.0 261.0,183.3" fill="none" stroke="#3c62cc" stroke-width="0.7" />
<polyline points="333.0,169.0 333.0,240.0" fill="none" stroke="#1539b9" stroke-width="2.0" />
<polyline points="333.0,184.0 342.9,177.0 355.0,164.3" fill="none" stroke="#1d46c8" stroke-width="1.1" />
<polygon points="359.3,164.3 359.2,164.9 360.5,166.1 358.9,166.3 358.0,166.5 357.8,167.4 357.0,167.5 356.8,168.7 356.2,170.4 355.0,169.3 353.8,170.0 353.4,168.1 353.4,166.7 352.5,166.9 350.3,167.8 349.7,167.0 348.2,166.5 347.6,165.5 350.0,164.3 349.8,163.5 347.7,161.9 351.3,162.4 350.2,160.7 350.4,159.4 352.3,160.1 353.6,160.8 353.8,158.4 355.0,161.4 356.0,159.0 356.2,161.2 358.6,158.6 357.7,161.3 359.7,160.7 360.8,161.3 362.0,162.0 359.2,163.6" fill="#6485d6" stroke="#1d46c8" stroke-width="0.8" fill-opacity="0.6"/>
<polygon points="348.2,174.0 346.5,174.6 350.1,176.4 346.3,175.8 348.3,178.1 344.8,176.1 344.8,176.9 344.9,179.1 344.1,180.4 342.9,179.3 341.6,180.4 341.0,178.7 339.5,179.3 338.1,179.1 339.4,176.7 339.0,176.0 339.0,175.3 336.1,175.1 334.8,174.0 338.7,173.3 339.6,172.9 337.7,171.3 340.1,171.9 340.6,171.6 340.2,169.8 340.1,167.2 342.1,169.9 342.9,169.9 343.9,168.8 344.3,170.6 344.9,170.9 347.4,169.2 345.6,171.9 346.8,172.0 347.9,172.3 350.0,172.9" fill="#6485d6" stroke="#1d46c8" stroke-width="0.8" fill-opacity="0.6"/>
<polyline points="355.0,164.3 358.0,157.3" fill="none" stroke="#1d46c8" stroke-width="0.9" />
<polygon points="360.8,157.3 360.3,157.8 360.3,158.5 361.2,160.1 360.5,161.0 358.9,160.3 358.0,160.5 356.7,161.3 355.4,161.1 356.3,158.7 355.0,158.8 355.5,157.8 354.9,157.3 353.3,156.2 355.8,156.2 355.6,155.3 356.3,154.8 356.7,153.1 358.0,153.4 358.9,154.2 360.4,153.7 359.5,156.0 360.8,155.9 362.4,156.3" fill="#6485d6" stroke="#1d46c8" stroke-width="0.7" fill-opacity="0.6"/>
<polyline points="333.0,191.9 323.4,184.9 311.6,178.1" fill="none" stroke="#1d46c8" stroke-width="1.1" />
<polygon points="319.5,178.1 317.7,179.1 319.8,180.8 319.5,182.2 316.9,182.1 315.2,182.0 314.1,182.0 314.4,185.0 312.6,183.1 311.6,185.9 310.0,186.3 309.4,183.6 306.7,185.7 308.1,181.8 304.4,183.6 303.6,182.3 304.5,180.4 305.2,179.1 302.3,178.1 302.3,176.6 303.9,175.6 306.5,175.5 307.7,175.1 308.3,174.5 307.6,171.9 309.3,172.5 310.6,173.1 311.6,170.8 312.5,173.6 313.5,173.5 316.8,170.1 316.5,172.9 318.9,172.6 316.9,175.4 317.6,176.2 316.7,177.3" fill="#6485d6" stroke="#1d46c8" stroke-width="0.8" fill-opacity="0.6"/>
<polygon points="325.6,181.9 326.1,182.3 327.5,183.2 326.5,183.5 325.2,183.2 325.5,184.2 325.4,184.9 324.6,184.9 324.2,186.3 323.4,185.0 322.7,185.3 321.8,185.8 321.5,184.8 321.1,184.3 321.7,183.1 319.3,184.0 318.7,183.4 321.0,182.2 319.3,181.9 319.2,181.2 319.4,180.6 319.1,179.6 320.4,179.6 321.7,180.1 321.1,178.4 322.0,178.4 322.9,179.4 323.4,177.1 323.8,179.5 325.0,177.8 325.5,178.5 326.8,178.2 325.5,180.3 325.5,180.8 325.8,181.1 325.9,181.5" fill="#6485d6" stroke="#1d46c8" stroke-width="0.8" fill-opacity="0.6"/>
<polyline points="333.0,199.7 343.0,192.7 355.1,180.6" fill="none" stroke="#1d46c8" stroke-width="1.1" />
<polygon points="360.3,180.6 359.5,181.3 359.5,182.0 359.9,183.0 359.2,183.6 357.6,183.2 357.2,183.9 357.7,186.8 356.6,187.9 355.1,184.4 353.8,187.3 353.5,184.7 351.1,186.9 352.1,183.8 349.4,184.9 350.3,183.1 347.9,182.9 346.9,181.9 347.1,180.6 348.6,179.5 346.9,177.9 350.4,178.1 352.2,178.3 350.7,175.8 352.2,176.1 353.6,176.7 354.4,176.7 355.1,173.1 355.8,177.5 357.6,174.6 357.8,176.4 358.1,177.4 357.9,178.5 358.8,178.7 361.4,178.5 360.3,179.8" fill="#6485d6" stroke="#1d46c8" stroke-width="0.8" fill-opacity="0.6"/>
<polygon points="349.7,189.7 348.5,190.6 346.8,191.0 347.9,192.3 345.8,191.9 345.8,192.7 346.2,194.7 345.4,195.6 344.3,196.5 343.0,192.5 342.1,194.3 341.2,194.0 339.8,194.6 340.5,192.3 338.9,192.8 339.1,191.7 338.5,191.2 338.6,190.4 338.9,189.7 336.9,188.7 339.4,188.5 338.0,187.1 338.5,186.4 340.1,186.6 340.2,185.5 340.8,184.4 342.0,184.8 343.0,184.9 343.5,186.8 344.4,186.2 346.0,185.0 345.8,186.7 348.0,185.9 347.9,187.1 348.9,187.8 346.5,189.2" fill="#6485d6" stroke="#1d46c8" stroke-width="0.8" fill-opacity="0.6"/>
<polyline points="333.0,207.6 326.9,200.6 319.4,190.4" fill="none" stroke="#1d46c8" stroke-width="1.1" />
<polygon points="327.5,190.4 328.3,191.9 329.0,193.6 327.4,194.6 328.1,197.0 322.7,194.0 322.4,195.2 322.7,198.6 320.5,196.2 319.4,195.0 318.3,195.9 316.3,198.0 315.9,195.8 313.1,197.2 312.5,195.6 312.2,194.2 314.3,192.1 313.5,191.4 309.2,190.4 312.9,189.4 313.1,188.4 312.6,186.9 314.9,187.0 315.0,185.8 316.0,185.2 316.0,182.1 318.1,184.0 319.4,186.3 320.9,182.5 321.9,184.1 324.0,183.2 324.7,184.7 327.3,184.4 324.7,187.7 325.2,188.5 327.7,189.1" fill="#6485d6" stroke="#1d46c8" stroke-width="0.8" fill-opacity="0.6"/>
<polygon points="330.2,197.6 330.1,198.1 331.6,199.1 329.4,198.9 329.5,199.6 330.4,201.4 330.1,202.6 328.7,202.0 327.6,201.3 326.9,201.8 325.8,202.8 325.3,201.4 324.1,201.9 323.1,201.6 324.1,199.7 323.9,199.1 321.9,199.2 322.0,198.3 322.8,197.6 321.5,196.7 322.2,196.0 320.7,194.4 322.9,194.6 324.4,195.0 325.4,195.3 324.8,192.5 325.9,192.5 326.9,192.5 327.6,193.6 328.2,194.4 329.7,193.1 329.9,194.3 329.5,195.6 332.5,194.6 333.3,195.5 332.3,196.7" fill="#6485d6" stroke="#1d46c8" stroke-width="0.8" fill-opacity="0.6"/>
<polyline points="319.4,190.4 316.4,183.4" fill="none" stroke="#1d46c8" stroke-width="0.9" />
<polygon points="320.8,183.4 319.9,184.2 320.5,185.5 318.7,185.5 317.9,185.7 317.6,187.3 316.4,185.1 315.4,186.5 314.6,186.1 313.2,186.2 314.4,184.4 313.6,184.1 313.1,183.4 313.3,182.7 313.8,182.2 315.0,182.3 314.4,180.4 315.7,181.3 316.4,180.0 317.4,180.3 317.7,181.4 317.9,182.1 318.8,182.2 319.5,182.7" fill="#6485d6" stroke="#1d46c8" stroke-width="0.7" fill-opacity="0.6"/>
<polyline points="333.0,215.4 340.3,208.4 349.3,194.8" fill="none" stroke="#1d46c8" stroke-width="1.1" />
<polygon points="353.4,194.8 352.8,195.4 353.1,196.1 355.3,197.9 355.0,199.1 352.8,198.6 352.1,199.2 351.7,200.9 350.6,201.6 349.3,198.0 348.4,199.4 348.0,198.0 347.0,198.4 344.6,199.8 346.4,197.0 345.0,197.0 344.5,196.4 341.7,196.0 342.4,194.8 343.8,193.9 342.4,192.6 346.4,193.3 345.5,191.9 344.9,190.1 345.8,189.4 347.9,191.4 348.4,190.3 349.3,189.0 350.6,188.1 351.6,189.1 352.9,189.2 352.7,191.1 354.5,190.8 355.2,191.7 352.4,193.8 352.7,194.3" fill="#6485d6" stroke="#1d46c8" stroke-width="0.8" fill-opacity="0.6"/>
<polygon points="346.8,205.4 346.1,206.4 346.6,207.5 345.9,208.3 345.6,209.4 342.8,208.1 343.0,209.7 341.9,209.4 340.9,208.6 340.3,209.1 339.3,210.8 338.0,211.1 336.8,210.9 336.9,209.1 335.3,209.2 337.2,207.0 335.5,207.0 336.7,206.0 334.4,205.4 334.8,204.5 336.9,204.3 335.4,202.9 336.6,202.6 337.9,202.8 338.6,202.7 338.9,201.9 339.5,201.2 340.3,199.9 340.9,202.5 342.6,199.8 342.7,201.7 344.2,201.2 344.8,202.0 345.7,202.6 345.2,203.8 343.4,204.9" fill="#6485d6" stroke="#1d46c8" stroke-width="0.8" fill-opacity="0.6"/>
<polyline points="333.0,223.3 326.6,216.3 318.8,207.7" fill="none" stroke="#1d46c8" stroke-width="1.1" />
<polygon points="326.3,207.7 324.9,208.6 326.3,210.1 323.7,210.2 322.8,210.7 323.9,213.1 320.4,210.2 320.9,212.9 319.9,213.1 318.8,214.6 318.1,211.0 317.1,211.8 316.0,212.0 315.3,211.4 315.0,210.5 316.0,209.1 312.4,209.8 314.5,208.4 312.0,207.7 312.5,206.7 314.5,206.3 315.6,206.0 315.1,204.9 315.3,203.9 315.0,201.7 317.7,204.9 317.4,200.3 318.8,203.2 320.0,201.5 320.1,204.4 321.1,204.0 321.3,205.0 323.3,204.3 323.2,205.4 325.8,205.4 326.3,206.5" fill="#6485d6" stroke="#1d46c8" stroke-width="0.8" fill-opacity="0.6"/>
<polygon points="329.3,213.3 329.7,213.8 332.2,215.1 330.0,215.0 330.9,216.5 329.9,216.9 328.7,216.6 328.4,217.8 327.4,217.5 326.6,217.7 326.0,216.4 324.9,217.4 325.0,215.8 323.7,216.5 324.1,215.2 322.9,215.2 321.4,215.0 320.7,214.2 322.5,213.3 322.2,212.6 323.3,212.2 322.8,211.3 324.2,211.5 323.9,210.3 324.2,209.5 324.6,208.2 326.0,210.1 326.6,208.6 327.3,209.8 328.1,209.7 328.9,209.7 329.6,210.0 329.3,211.2 330.5,211.3 330.0,212.2 332.3,212.4" fill="#6485d6" stroke="#1d46c8" stroke-width="0.8" fill-opacity="0.6"/>
<polyline points="318.8,207.7 315.8,200.7" fill="none" stroke="#1d46c8" stroke-width="0.9" />
<polygon points="320.6,200.7 319.1,201.4 319.6,202.6 318.1,202.7 317.4,203.1 316.8,204.0 315.8,202.9 315.1,202.8 314.0,203.4 314.1,202.1 311.9,202.6 312.1,201.5 312.5,200.7 313.5,200.1 313.7,199.6 313.0,198.3 314.6,198.8 314.8,197.5 315.8,197.2 316.3,199.0 316.8,199.1 318.5,198.4 318.4,199.4 318.4,200.1" fill="#6485d6" stroke="#1d46c8" stroke-width="0.7" fill-opacity="0.6"/>
<polyline points="333.0,231.1 344.0,224.1 357.5,210.7" fill="none" stroke="#1d46c8" stroke-width="1.1" />
<polygon points="361.2,210.7 361.1,211.3 365.0,213.2 364.8,214.5 363.1,215.0 362.1,215.6 360.7,215.7 360.4,217.8 358.7,217.1 357.5,216.3 356.4,216.5 356.1,214.3 355.4,214.0 353.9,214.6 352.7,214.4 352.3,213.5 349.4,213.4 352.1,211.6 351.8,210.7 352.0,209.9 353.8,209.5 352.3,208.0 353.1,207.4 354.4,207.4 354.9,206.6 355.3,205.4 356.5,205.6 357.5,207.5 358.4,206.2 359.2,206.6 359.6,207.5 362.2,205.7 360.6,208.4 363.5,207.6 361.8,209.4 361.2,210.2" fill="#6485d6" stroke="#1d46c8" stroke-width="0.8" fill-opacity="0.6"/>
<polygon points="349.6,221.1 350.0,222.1 347.2,222.2 348.1,223.3 349.6,225.3 348.2,225.6 347.3,226.2 345.8,225.6 344.6,224.2 344.0,225.5 343.4,224.2 342.6,224.6 340.7,226.4 340.3,225.2 339.0,225.0 340.7,222.9 340.7,222.2 339.8,221.8 339.9,221.1 338.9,220.3 338.7,219.4 338.9,218.5 340.3,218.3 341.6,218.5 341.2,216.7 342.1,216.3 342.8,215.0 344.0,217.2 344.9,216.5 345.2,218.3 347.3,216.0 347.5,217.5 346.9,219.0 346.7,219.8 349.0,219.5 350.0,220.2" fill="#6485d6" stroke="#1d46c8" stroke-width="0.8" fill-opacity="0.6"/>
<polyline points="357.5,210.7 360.5,203.7" fill="none" stroke="#1d46c8" stroke-width="0.9" />
<polygon points="362.7,203.7 362.6,204.2 364.6,205.8 364.0,206.7 362.7,207.0 361.6,207.2 360.5,207.0 359.2,207.8 358.4,206.9 357.9,206.0 357.2,205.4 358.1,204.3 358.0,203.7 357.4,203.0 357.3,202.1 358.0,201.6 358.0,200.0 359.7,201.1 360.5,200.9 361.4,201.0 361.7,202.0 363.0,201.6 363.5,202.3 363.2,203.1" fill="#6485d6" stroke="#1d46c8" stroke-width="0.7" fill-opacity="0.6"/>
<path d="M333.0,104.7A3.8,3.8 0 0,1 336.6,108.6A2.5,2.5 0 0,1 340.0,110.8A3.0,3.0 0 0,1 343.1,114.7A3.7,3.7 0 0,1 347.3,117.7A2.9,2.9 0 0,1 351.7,120.5A1.9,1.9 0 0,1 354.3,122.1A3.7,3.7 0 0,1 358.7,125.0A3.5,3.5 0 0,1 359.2,130.2A3.6,3.6 0 0,1 359.6,135.6A3.9,3.9 0 0,1 355.9,140.4A3.0,3.0 0 0,1 358.9,144.3A3.0,3.0 0 0,1 360.4,148.2A2.3,2.3 0 0,1 361.6,152.5A2.8,2.8 0 0,1 358.8,156.3A2.0,2.0 0 0,1 358.0,159.4A2.7,2.7 0 0,1 358.9,163.4A2.5,2.5 0 0,1 357.4,167.4A2.7,2.7 0 0,1 356.0,172.0A2.2,2.2 0 0,1 356.6,175.5A2.6,2.6 0 0,1 355.3,179.2A3.4,3.4 0 0,1 350.7,182.3A3.0,3.0 0 0,1 347.0,184.3A1.7,1.7 0 0,1 344.2,184.5A3.4,3.4 0 0,1 338.2,184.0A3.8,3.8 0 0,1 332.7,186.2A3.5,3.5 0 0,1 326.9,185.6A3.1,3.1 0 0,1 321.1,184.1A1.7,1.7 0 0,1 318.3,184.6A2.4,2.4 0 0,1 314.9,181.8A3.0,3.0 0 0,1 312.3,177.9A4.0,4.0 0 0,1 313.0,172.2A2.3,2.3 0 0,1 310.3,170.0A2.6,2.6 0 0,1 308.2,167.1A2.8,2.8 0 0,1 304.0,164.1A3.7,3.7 0 0,1 305.4,158.9A2.3,2.3 0 0,1 307.4,156.1A2.4,2.4 0 0,1 306.6,152.0A3.0,3.0 0 0,1 307.1,147.1A2.5,2.5 0 0,1 308.1,142.7A2.4,2.4 0 0,1 310.7,139.4A3.5,3.5 0 0,1 306.5,135.7A3.0,3.0 0 0,1 303.4,131.8A3.2,3.2 0 0,1 307.4,128.3A2.6,2.6 0 0,1 310.5,125.8A2.8,2.8 0 0,1 312.6,122.0A2.4,2.4 0 0,1 315.3,118.5A3.3,3.3 0 0,1 319.4,115.3A2.6,2.6 0 0,1 322.7,113.4A2.8,2.8 0 0,1 327.1,110.5A3.0,3.0 0 0,1 330.1,107.2A2.0,2.0 0 0,1 333.0,104.7Z" fill="#6586d8" fill-opacity="0.86" stroke="#123cc0" stroke-width="1"/>
<polygon points="333.0,114.6 333.8,116.2 334.8,117.8 335.8,119.4 336.8,121.0 337.8,122.6 338.9,124.2 339.9,125.8 340.9,127.4 341.9,129.0 342.9,130.6 343.9,132.2 344.9,133.8 345.8,135.4 346.7,137.0 347.5,138.6 348.3,140.2 349.1,141.8 349.8,143.4 350.5,145.0 351.1,146.6 351.7,148.2 352.2,149.8 352.6,151.4 353.0,153.0 353.3,154.6 353.6,156.2 353.8,157.8 353.9,159.4 354.0,161.0 354.0,162.6 354.0,164.2 354.0,165.8 353.8,167.4 352.9,169.0 351.5,170.6 349.6,172.2 347.0,173.8 344.0,175.4 340.3,177.0 336.2,178.6 329.8,178.6 325.7,177.0 322.0,175.4 319.0,173.8 316.4,172.2 314.5,170.6 313.1,169.0 312.2,167.4 312.0,165.8 312.0,164.2 312.0,162.6 312.0,161.0 312.1,159.4 312.2,157.8 312.4,156.2 312.7,154.6 313.0,153.0 313.4,151.4 313.8,149.8 314.3,148.2 314.9,146.6 315.5,145.0 316.2,143.4 316.9,141.8 317.7,140.2 318.5,138.6 319.3,137.0 320.2,135.4 321.1,133.8 322.1,132.2 323.1,130.6 324.1,129.0 325.1,127.4 326.1,125.8 327.1,124.2 328.2,122.6 329.2,121.0 330.2,119.4 331.2,117.8 332.2,116.2 333.0,114.6" fill="#4a6ed0" stroke="#2f58c8" stroke-width="0.6" fill-opacity="0.45" stroke-opacity="0.6"/>
<polyline points="333.0,108.0 333.0,173.0" fill="none" stroke="#3c62cc" stroke-width="0.7" />
<polyline points="430.4,133.8 430.4,267.0" fill="none" stroke="#1539b9" stroke-width="2.0" />
<polyline points="430.4,148.0 424.9,141.0 418.2,134.1" fill="none" stroke="#1d46c8" stroke-width="1.1" />
<polygon points="426.2,134.1 425.4,135.2 426.0,136.6 425.1,137.7 424.8,139.0 421.3,137.4 421.6,139.3 420.2,139.0 419.0,138.0 418.2,138.6 416.9,140.7 415.4,141.1 413.9,140.8 414.0,138.6 412.0,138.8 414.4,136.1 412.3,136.0 413.8,134.8 410.9,134.1 411.4,133.0 414.1,132.7 412.2,131.0 413.6,130.6 415.3,130.9 416.1,130.8 416.4,129.7 417.2,128.9 418.2,127.3 418.9,130.5 421.0,127.2 421.2,129.5 423.1,128.9 423.8,129.9 424.9,130.6 424.2,132.2 422.1,133.5" fill="#6485d6" stroke="#1d46c8" stroke-width="0.8" fill-opacity="0.6"/>
<polygon points="430.3,138.0 429.5,138.7 431.1,140.0 430.0,140.6 429.5,141.4 427.0,140.2 427.8,142.5 426.9,142.8 425.7,141.8 424.9,141.6 424.1,142.3 423.5,141.5 421.8,142.9 422.2,140.9 420.7,141.2 420.9,140.1 419.2,139.9 420.4,138.7 421.0,138.0 418.6,137.0 421.3,136.8 420.0,135.5 422.5,136.2 422.0,134.9 423.0,135.0 423.8,135.3 424.3,134.7 424.9,133.1 425.8,133.8 427.1,132.7 426.8,135.0 428.6,134.0 428.4,135.4 427.8,136.5 428.5,136.8 428.8,137.4" fill="#6485d6" stroke="#1d46c8" stroke-width="0.8" fill-opacity="0.6"/>
<polyline points="418.2,134.1 415.2,127.1" fill="none" stroke="#1d46c8" stroke-width="0.9" />
<polygon points="419.6,127.1 419.4,128.1 417.3,128.1 417.6,129.1 417.4,130.4 416.5,131.0 415.2,130.2 414.2,130.5 413.2,130.1 413.0,129.0 412.0,128.7 412.7,127.7 411.9,127.1 411.8,126.3 411.0,125.0 412.6,124.8 413.4,124.3 414.2,123.7 415.2,123.1 416.3,123.6 416.4,125.3 417.5,125.1 418.8,125.3 418.9,126.2" fill="#6485d6" stroke="#1d46c8" stroke-width="0.7" fill-opacity="0.6"/>
<polyline points="430.4,156.9 436.5,149.9 444.0,142.0" fill="none" stroke="#1d46c8" stroke-width="1.1" />
<polygon points="448.3,142.0 448.9,142.8 452.9,144.9 449.3,144.8 450.8,147.1 449.3,147.7 447.3,147.2 446.9,149.2 445.3,148.6 444.0,149.1 443.0,146.9 441.3,148.6 441.5,145.9 439.3,147.0 439.9,145.0 438.1,145.1 435.7,144.7 434.6,143.5 437.4,142.0 437.0,140.9 438.7,140.3 437.9,138.9 440.2,139.2 439.6,137.3 440.1,136.0 440.7,134.0 443.0,137.0 444.0,134.5 445.1,136.5 446.3,136.3 447.6,136.4 448.8,136.8 448.3,138.7 450.2,138.8 449.3,140.3 453.0,140.6" fill="#6485d6" stroke="#1d46c8" stroke-width="0.8" fill-opacity="0.6"/>
<polygon points="441.8,146.9 440.2,147.4 441.0,148.3 439.6,148.5 439.2,148.9 439.3,149.8 437.9,149.0 437.4,149.2 437.2,150.4 436.5,149.2 435.7,151.1 435.1,150.4 434.7,149.7 434.9,148.6 434.5,148.4 432.8,148.8 434.0,147.7 432.5,147.5 432.2,146.9 434.3,146.5 434.4,146.2 432.9,145.0 434.0,144.9 434.7,144.9 434.6,143.9 434.9,142.8 435.7,142.7 436.5,144.6 437.2,143.3 438.1,142.8 439.0,143.0 438.3,144.9 438.3,145.5 440.3,144.9 440.8,145.5 438.9,146.5" fill="#6485d6" stroke="#1d46c8" stroke-width="0.8" fill-opacity="0.6"/>
<polyline points="430.4,165.7 420.8,158.7 409.1,151.6" fill="none" stroke="#1d46c8" stroke-width="1.1" />
<polygon points="416.1,151.6 416.5,152.8 413.1,152.9 414.3,154.3 416.1,156.9 414.4,157.2 413.2,158.0 411.4,157.2 409.9,155.4 409.1,157.0 408.4,155.5 407.4,156.0 404.9,158.1 404.5,156.6 402.8,156.4 404.9,153.8 405.0,153.0 403.9,152.5 404.0,151.6 402.8,150.6 402.5,149.4 402.7,148.3 404.4,148.1 406.1,148.4 405.5,146.0 406.7,145.6 407.6,144.0 409.1,146.7 410.3,145.8 410.6,148.1 413.3,145.2 413.4,147.0 412.7,149.0 412.4,149.9 415.3,149.6 416.6,150.4" fill="#6485d6" stroke="#1d46c8" stroke-width="0.8" fill-opacity="0.6"/>
<polygon points="424.0,155.7 426.3,156.6 426.2,157.5 425.0,157.9 425.0,158.9 424.4,159.5 423.5,159.9 422.1,158.9 421.9,161.4 420.8,160.7 420.0,160.1 419.5,159.0 418.2,159.8 417.1,159.7 418.6,157.4 415.9,158.3 417.9,156.7 417.7,156.2 415.5,155.7 416.4,155.0 416.6,154.3 417.3,153.9 416.8,152.7 419.1,153.8 418.4,152.0 419.3,152.0 419.9,150.9 420.8,152.7 421.6,151.7 422.3,152.1 422.9,152.5 423.7,152.6 424.9,152.6 422.9,154.6 424.5,154.5 423.8,155.2" fill="#6485d6" stroke="#1d46c8" stroke-width="0.8" fill-opacity="0.6"/>
<polyline points="409.1,151.6 406.1,144.6" fill="none" stroke="#1d46c8" stroke-width="0.9" />
<polygon points="410.7,144.6 409.4,145.4 410.2,146.6 409.0,147.1 408.2,147.6 407.0,147.3 406.1,146.7 405.4,146.9 404.4,147.1 404.5,146.0 402.2,146.6 402.9,145.4 403.9,144.6 401.5,143.6 404.2,143.7 404.3,143.0 404.0,141.4 405.0,141.1 406.1,141.0 407.4,140.6 407.7,142.3 409.4,141.8 410.1,142.6 410.1,143.7" fill="#6485d6" stroke="#1d46c8" stroke-width="0.7" fill-opacity="0.6"/>
<polyline points="430.4,174.6 442.1,167.6 456.3,160.8" fill="none" stroke="#1d46c8" stroke-width="1.1" />
<polygon points="461.4,160.8 462.5,161.8 460.4,162.1 460.7,163.1 460.0,163.6 458.7,163.3 459.8,166.1 458.3,165.5 457.2,165.1 456.3,166.1 455.7,164.4 454.9,164.4 453.5,165.2 452.8,164.6 451.9,164.2 452.2,163.0 453.2,161.9 453.2,161.3 449.5,160.8 451.6,160.1 452.1,159.4 453.0,159.1 452.2,157.7 453.1,157.4 454.0,157.1 454.7,156.8 455.3,155.6 456.3,155.8 457.5,154.8 457.7,157.5 459.6,155.8 460.4,156.4 461.3,157.1 460.5,158.7 462.0,159.0 460.0,160.3" fill="#6485d6" stroke="#1d46c8" stroke-width="0.8" fill-opacity="0.6"/>
<polygon points="449.0,164.6 449.1,165.7 447.0,166.2 446.2,166.7 444.8,166.6 446.7,169.5 444.0,167.5 443.9,169.2 442.9,168.7 442.1,168.3 441.5,167.7 440.1,169.4 438.5,170.1 439.0,167.8 436.6,168.7 438.2,166.6 436.3,166.5 438.3,165.2 436.4,164.6 438.6,164.0 438.5,163.4 435.5,161.2 436.9,160.7 438.4,160.6 439.7,160.9 439.9,159.3 441.2,159.9 442.1,158.5 442.8,161.0 444.1,159.6 445.1,159.9 445.6,160.8 446.6,161.1 446.4,162.3 445.9,163.3 449.9,163.3" fill="#6485d6" stroke="#1d46c8" stroke-width="0.8" fill-opacity="0.6"/>
<polyline points="456.3,160.8 459.3,153.8" fill="none" stroke="#1d46c8" stroke-width="0.9" />
<polygon points="462.3,153.8 461.1,154.2 463.4,155.8 461.4,155.6 460.6,155.6 459.9,155.5 459.3,156.5 458.3,157.3 458.0,155.8 457.9,155.1 456.9,155.0 455.0,154.8 454.3,153.8 455.6,153.0 457.1,152.7 456.4,151.3 457.8,151.5 458.5,151.3 459.3,151.7 460.1,151.4 461.1,151.2 462.4,151.2 461.5,152.8 461.9,153.2" fill="#6485d6" stroke="#1d46c8" stroke-width="0.7" fill-opacity="0.6"/>
<polyline points="430.4,183.4 423.7,176.4 415.6,167.8" fill="none" stroke="#1d46c8" stroke-width="1.1" />
<polygon points="421.6,167.8 421.1,168.7 418.6,168.8 421.9,171.0 421.3,172.0 420.6,173.1 417.7,171.0 417.6,172.7 416.3,171.2 415.6,171.6 414.8,171.9 413.4,173.3 413.4,171.2 410.9,172.8 412.2,170.4 410.1,170.6 410.7,169.4 409.7,168.7 411.9,167.8 410.7,167.0 411.0,166.3 409.3,164.5 409.9,163.5 410.4,162.2 413.1,163.9 413.4,162.4 414.1,160.2 415.6,160.7 416.4,163.7 417.4,163.4 418.0,164.0 419.0,164.1 418.5,165.6 419.3,165.9 420.6,166.2 423.6,166.5" fill="#6485d6" stroke="#1d46c8" stroke-width="0.8" fill-opacity="0.6"/>
<polygon points="428.8,173.4 430.5,174.5 429.0,175.1 427.8,175.5 428.9,177.3 427.4,177.3 426.8,178.2 425.1,176.7 424.7,178.4 423.7,179.6 423.1,176.9 421.8,178.3 421.8,176.5 419.9,177.5 419.7,176.5 418.0,176.4 419.5,174.8 417.4,174.4 419.7,173.4 419.6,172.8 421.0,172.5 420.5,171.8 419.8,170.4 419.0,168.3 420.1,167.7 422.3,169.8 423.0,169.8 423.7,167.7 424.3,170.7 425.3,169.7 427.4,167.8 426.4,170.6 428.7,169.7 429.3,170.6 431.2,171.0 431.6,172.2" fill="#6485d6" stroke="#1d46c8" stroke-width="0.8" fill-opacity="0.6"/>
<polyline points="415.6,167.8 412.6,160.8" fill="none" stroke="#1d46c8" stroke-width="0.9" />
<polygon points="414.9,160.8 417.2,161.8 415.8,162.3 415.6,163.4 414.5,163.6 413.7,164.1 412.6,163.5 411.6,164.1 410.4,164.0 409.7,163.3 409.9,162.1 409.4,161.5 409.5,160.8 408.2,159.8 410.0,159.5 410.9,159.3 410.3,157.3 412.0,158.9 412.6,158.3 413.5,158.1 414.8,157.6 414.3,159.4 414.4,159.9 416.0,160.0" fill="#6485d6" stroke="#1d46c8" stroke-width="0.7" fill-opacity="0.6"/>
<polyline points="430.4,192.3 437.2,185.3 445.4,174.6" fill="none" stroke="#1d46c8" stroke-width="1.1" />
<polygon points="449.5,174.6 454.3,176.0 453.8,177.4 451.9,177.9 449.6,177.7 448.9,178.3 448.6,179.6 447.0,178.6 446.5,179.9 445.4,178.1 443.9,182.6 443.7,179.0 442.4,179.4 439.4,181.1 439.0,179.5 437.6,178.7 441.3,176.0 439.3,175.6 441.9,174.6 439.5,173.7 438.6,172.4 439.1,171.3 440.6,170.9 443.1,172.1 442.0,169.2 443.7,170.4 444.1,167.6 445.4,169.0 446.7,168.0 448.5,167.0 450.3,167.0 450.7,169.0 450.3,170.9 450.3,172.1 450.7,172.9 453.2,173.4" fill="#6485d6" stroke="#1d46c8" stroke-width="0.8" fill-opacity="0.6"/>
<polygon points="443.8,182.3 443.8,183.3 440.6,183.4 441.6,184.6 442.4,186.2 441.9,187.3 440.0,186.7 439.3,187.7 438.2,187.8 437.2,186.7 436.2,187.4 435.8,185.7 434.6,186.2 433.6,186.1 431.4,186.6 432.1,184.9 431.7,184.1 430.9,183.3 429.9,182.3 430.7,181.3 433.7,181.2 432.8,180.0 432.3,178.6 433.3,178.2 433.6,176.7 434.8,176.3 436.6,179.3 437.2,176.5 438.3,176.5 439.2,177.3 439.3,178.9 440.5,178.7 442.1,178.5 442.4,179.5 440.3,181.3 440.5,181.8" fill="#6485d6" stroke="#1d46c8" stroke-width="0.8" fill-opacity="0.6"/>
<polyline points="430.4,201.1 422.8,194.1 413.4,186.5" fill="none" stroke="#1d46c8" stroke-width="1.1" />
<polygon points="423.1,186.5 420.6,187.7 422.8,189.6 420.9,190.4 420.1,191.6 417.8,191.2 416.0,190.5 415.5,191.6 414.7,192.9 413.4,190.9 411.7,195.1 411.0,192.6 411.0,190.3 406.9,193.5 409.7,189.3 408.5,189.0 404.7,189.4 404.3,188.0 404.3,186.5 403.1,184.9 407.0,184.4 404.7,182.0 405.8,180.8 407.8,180.4 410.9,182.6 410.3,178.7 411.8,178.2 413.4,181.7 415.1,177.9 415.3,181.9 415.8,182.8 419.7,179.8 419.8,181.7 421.5,182.3 421.6,183.8 421.2,185.3" fill="#6485d6" stroke="#1d46c8" stroke-width="0.8" fill-opacity="0.6"/>
<polygon points="427.4,191.1 425.5,191.6 429.6,193.4 426.7,193.2 425.7,193.4 424.8,193.3 425.2,194.9 425.0,196.7 423.5,194.8 422.8,194.1 422.0,195.0 420.3,197.2 418.8,197.3 418.8,195.4 419.6,193.5 417.1,194.1 418.2,192.6 418.0,191.9 418.9,191.1 418.2,190.4 417.6,189.5 416.8,188.1 419.8,188.9 420.1,188.3 420.1,186.9 421.6,188.2 421.7,185.8 422.8,185.3 423.4,187.8 424.6,186.6 425.5,186.9 425.8,187.9 428.5,186.8 427.5,188.7 426.3,190.0 426.8,190.5" fill="#6485d6" stroke="#1d46c8" stroke-width="0.8" fill-opacity="0.6"/>
<polyline points="413.4,186.5 410.4,179.5" fill="none" stroke="#1d46c8" stroke-width="0.9" />
<polygon points="414.9,179.5 413.0,180.1 412.9,180.7 413.7,182.3 412.1,182.0 411.6,183.4 410.4,182.1 409.9,181.2 409.3,181.2 408.1,181.5 407.6,180.9 405.5,180.7 408.7,179.5 405.9,178.5 407.2,177.9 407.6,177.1 409.4,178.0 409.3,175.8 410.4,176.1 411.2,176.9 412.3,176.7 412.8,177.5 413.7,177.9 414.7,178.5" fill="#6485d6" stroke="#1d46c8" stroke-width="0.7" fill-opacity="0.6"/>
<path d="M430.4,72.3A3.6,3.6 0 0,1 434.5,75.5A3.2,3.2 0 0,1 438.3,79.3A2.8,2.8 0 0,1 441.4,81.6A3.7,3.7 0 0,1 446.9,83.3A2.1,2.1 0 0,1 449.5,86.2A2.2,2.2 0 0,1 451.1,89.2A2.6,2.6 0 0,1 452.5,93.3A2.2,2.2 0 0,1 455.3,95.6A3.5,3.5 0 0,1 454.4,100.4A2.1,2.1 0 0,1 453.4,104.4A2.5,2.5 0 0,1 455.1,108.6A3.8,3.8 0 0,1 458.7,112.5A1.9,1.9 0 0,1 458.3,115.6A3.9,3.9 0 0,1 454.3,119.5A3.5,3.5 0 0,1 455.7,124.8A2.3,2.3 0 0,1 454.3,127.9A2.6,2.6 0 0,1 455.1,132.9A1.3,1.3 0 0,1 455.5,135.3A2.8,2.8 0 0,1 455.4,139.5A4.2,4.2 0 0,1 449.6,142.1A2.8,2.8 0 0,1 447.2,145.9A2.0,2.0 0 0,1 444.3,148.2A1.7,1.7 0 0,1 441.3,146.9A3.7,3.7 0 0,1 436.3,150.9A3.0,3.0 0 0,1 430.8,151.0A4.4,4.4 0 0,1 425.6,147.1A3.7,3.7 0 0,1 419.8,149.7A2.7,2.7 0 0,1 415.9,146.7A2.3,2.3 0 0,1 411.7,145.2A2.2,2.2 0 0,1 410.5,141.7A2.6,2.6 0 0,1 405.8,140.5A3.3,3.3 0 0,1 405.9,135.9A1.6,1.6 0 0,1 406.5,133.0A3.1,3.1 0 0,1 404.9,128.6A3.0,3.0 0 0,1 406.7,124.0A2.2,2.2 0 0,1 407.6,120.5A2.8,2.8 0 0,1 404.5,116.1A3.8,3.8 0 0,1 401.1,111.9A3.5,3.5 0 0,1 402.7,107.3A2.9,2.9 0 0,1 406.9,103.5A2.5,2.5 0 0,1 407.1,99.6A2.6,2.6 0 0,1 405.7,95.6A4.0,4.0 0 0,1 409.4,91.2A2.7,2.7 0 0,1 412.1,87.3A2.9,2.9 0 0,1 414.2,82.8A3.1,3.1 0 0,1 418.1,80.3A3.4,3.4 0 0,1 423.7,77.7A1.9,1.9 0 0,1 426.9,75.9A2.9,2.9 0 0,1 430.0,73.2A0.7,0.7 0 0,1 430.4,72.3Z" fill="#6586d8" fill-opacity="0.86" stroke="#123cc0" stroke-width="1"/>
<polygon points="430.4,82.1 431.2,83.6 432.1,85.2 433.1,86.7 434.1,88.2 435.1,89.7 436.2,91.2 437.2,92.8 438.2,94.3 439.2,95.8 440.2,97.3 441.1,98.8 442.1,100.4 443.0,101.9 443.8,103.4 444.7,104.9 445.5,106.4 446.2,108.0 446.9,109.5 447.6,111.0 448.2,112.5 448.7,114.0 449.2,115.6 449.7,117.1 450.1,118.6 450.4,120.1 450.6,121.6 450.8,123.2 451.0,124.7 451.1,126.2 451.1,127.7 451.1,129.2 451.1,130.8 450.8,132.3 450.0,133.8 448.6,135.3 446.7,136.8 444.2,138.4 441.2,139.9 437.6,141.4 433.5,142.9 427.3,142.9 423.2,141.4 419.6,139.9 416.6,138.4 414.1,136.8 412.2,135.3 410.8,133.8 410.0,132.3 409.7,130.8 409.7,129.2 409.7,127.7 409.7,126.2 409.8,124.7 410.0,123.2 410.2,121.6 410.4,120.1 410.7,118.6 411.1,117.1 411.6,115.6 412.1,114.0 412.6,112.5 413.2,111.0 413.9,109.5 414.6,108.0 415.3,106.4 416.1,104.9 417.0,103.4 417.8,101.9 418.7,100.4 419.7,98.8 420.6,97.3 421.6,95.8 422.6,94.3 423.6,92.8 424.6,91.2 425.7,89.7 426.7,88.2 427.7,86.7 428.7,85.2 429.6,83.6 430.4,82.1" fill="#4a6ed0" stroke="#2f58c8" stroke-width="0.6" fill-opacity="0.45" stroke-opacity="0.6"/>
<polyline points="430.4,76.0 430.4,137.6" fill="none" stroke="#3c62cc" stroke-width="0.7" />
<polyline points="391.0,224.0 391.0,292.0" fill="none" stroke="#1539b9" stroke-width="2.0" />
<polyline points="391.0,239.0 400.4,232.0 412.0,222.6" fill="none" stroke="#1d46c8" stroke-width="1.1" />
<polygon points="418.7,222.6 420.9,224.0 418.9,224.8 417.3,225.4 418.8,227.8 416.8,227.7 416.0,228.9 413.7,226.9 413.2,229.1 412.0,230.8 411.0,227.2 409.4,229.0 409.3,226.7 406.9,228.0 406.6,226.6 404.3,226.6 406.3,224.4 403.6,223.9 406.6,222.6 406.5,221.7 408.3,221.4 407.7,220.3 406.7,218.6 405.6,215.8 407.1,215.0 410.0,217.8 411.0,217.8 412.0,215.0 412.7,218.9 414.0,217.6 416.8,215.1 415.5,218.8 418.5,217.6 419.3,218.8 421.8,219.3 422.4,220.9" fill="#6485d6" stroke="#1d46c8" stroke-width="0.8" fill-opacity="0.6"/>
<polygon points="402.9,229.0 403.3,229.5 403.1,229.9 403.7,230.7 404.2,231.8 402.7,231.5 402.6,232.3 401.6,231.8 401.2,232.8 400.4,232.3 399.6,233.3 399.3,231.7 398.3,232.4 397.3,232.3 398.0,230.8 397.7,230.4 398.0,229.8 395.3,229.8 396.0,229.0 397.4,228.5 398.1,228.2 397.3,227.4 397.3,226.6 399.0,227.4 398.7,226.3 399.3,226.2 399.5,224.4 400.4,226.7 401.2,224.9 401.4,226.6 402.4,226.0 401.9,227.4 402.6,227.4 404.4,226.9 404.6,227.6 403.0,228.6" fill="#6485d6" stroke="#1d46c8" stroke-width="0.8" fill-opacity="0.6"/>
<polyline points="391.0,246.4 383.2,239.4 373.8,228.6" fill="none" stroke="#1d46c8" stroke-width="1.1" />
<polygon points="380.6,228.6 380.5,229.6 377.3,229.7 378.3,230.9 379.1,232.6 378.5,233.7 376.6,233.1 376.0,234.0 374.9,234.2 373.8,233.0 372.7,233.8 372.3,232.1 371.2,232.6 370.1,232.4 367.9,233.0 368.6,231.2 368.2,230.4 367.3,229.6 366.3,228.6 367.1,227.5 370.2,227.4 369.3,226.3 368.8,224.8 369.9,224.4 370.1,222.8 371.3,222.5 373.1,225.5 373.8,222.6 374.9,222.7 375.8,223.5 376.0,225.1 377.2,224.9 378.8,224.8 379.1,225.8 376.9,227.5 377.1,228.0" fill="#6485d6" stroke="#1d46c8" stroke-width="0.8" fill-opacity="0.6"/>
<polygon points="387.9,236.4 386.2,236.9 386.5,237.5 387.9,238.8 386.2,238.7 386.1,239.5 385.0,239.2 384.6,239.8 383.9,239.8 383.2,239.3 382.6,239.5 381.6,240.5 380.7,240.4 381.4,238.5 379.8,239.0 378.4,238.9 379.6,237.6 380.1,236.9 379.8,236.4 380.3,236.0 378.3,234.8 379.1,234.3 380.0,234.0 381.3,234.3 381.3,233.5 381.4,231.9 382.5,232.8 383.2,232.7 383.8,233.8 385.1,231.9 385.0,233.8 385.7,233.7 385.4,234.8 387.8,234.1 385.6,235.7 387.9,235.7" fill="#6485d6" stroke="#1d46c8" stroke-width="0.8" fill-opacity="0.6"/>
<polyline points="373.8,228.6 370.8,221.6" fill="none" stroke="#1d46c8" stroke-width="0.9" />
<polygon points="374.9,221.6 375.0,222.5 372.9,222.6 373.2,223.7 373.0,224.9 371.3,223.4 370.8,223.4 369.9,224.4 368.7,224.6 369.3,222.8 368.4,222.7 368.4,222.1 367.8,221.6 366.2,220.5 367.9,220.2 368.0,219.2 368.4,218.1 370.0,219.2 370.8,218.2 371.8,218.2 372.4,219.1 372.5,220.1 374.5,219.7 375.4,220.5" fill="#6485d6" stroke="#1d46c8" stroke-width="0.7" fill-opacity="0.6"/>
<polyline points="391.0,253.9 398.5,246.9 407.6,235.0" fill="none" stroke="#1d46c8" stroke-width="1.1" />
<polygon points="413.1,235.0 410.8,235.6 415.6,237.7 412.3,237.5 411.0,237.6 410.0,237.6 410.4,239.4 410.2,241.5 408.5,239.3 407.6,238.5 406.7,239.6 404.8,242.1 403.0,242.3 403.0,240.0 403.9,237.8 401.0,238.5 402.3,236.8 402.0,235.9 403.1,235.0 402.3,234.2 401.6,233.1 400.7,231.4 404.1,232.4 404.5,231.7 404.5,230.1 406.2,231.6 406.4,228.8 407.6,228.2 408.4,231.1 409.8,229.8 410.8,230.0 411.2,231.2 414.4,230.0 413.2,232.2 411.8,233.7 412.4,234.3" fill="#6485d6" stroke="#1d46c8" stroke-width="0.8" fill-opacity="0.6"/>
<polygon points="402.0,243.9 405.7,245.0 403.7,245.6 404.2,246.8 403.0,247.3 402.5,248.2 400.9,247.7 400.6,249.1 399.6,249.8 398.5,249.6 397.6,248.1 396.7,248.2 396.0,247.6 393.9,248.7 394.8,246.6 395.2,245.5 391.7,246.1 394.9,244.4 394.0,243.9 393.5,243.1 392.2,241.8 395.4,242.2 396.0,242.0 395.0,240.2 394.9,238.4 396.2,238.2 397.3,237.7 398.5,239.2 399.1,240.6 400.1,239.9 402.1,238.2 402.8,239.3 403.7,239.9 401.3,242.4 401.4,242.9 402.5,243.2" fill="#6485d6" stroke="#1d46c8" stroke-width="0.8" fill-opacity="0.6"/>
<polyline points="407.6,235.0 410.6,228.0" fill="none" stroke="#1d46c8" stroke-width="0.9" />
<polygon points="413.3,228.0 414.9,229.0 413.2,229.3 413.2,230.2 412.6,231.0 411.4,230.7 410.6,231.8 409.7,231.0 409.5,229.7 408.6,229.8 407.5,229.6 408.4,228.6 406.8,228.0 406.5,227.1 407.1,226.3 407.4,225.3 409.0,225.7 409.6,224.9 410.6,224.9 411.8,224.3 413.2,224.3 413.6,225.5 414.7,226.0 415.5,226.9" fill="#6485d6" stroke="#1d46c8" stroke-width="0.7" fill-opacity="0.6"/>
<polyline points="391.0,261.3 384.2,254.3 375.9,243.4" fill="none" stroke="#1d46c8" stroke-width="1.1" />
<polygon points="384.4,243.4 380.7,244.2 380.9,245.0 383.4,247.3 380.7,247.0 381.5,249.4 378.7,247.7 377.2,246.7 376.6,247.2 375.9,249.0 374.8,248.9 372.6,251.6 374.2,246.0 370.2,249.5 370.5,247.4 369.3,246.8 372.3,244.6 367.5,244.7 368.3,243.4 370.0,242.4 369.1,241.2 370.5,240.6 370.4,239.2 370.5,237.7 371.9,237.1 374.4,239.7 374.6,236.9 375.9,236.6 377.2,236.6 377.9,238.3 379.3,238.0 380.2,238.7 381.7,239.0 382.4,240.0 383.6,240.9 382.3,242.4" fill="#6485d6" stroke="#1d46c8" stroke-width="0.8" fill-opacity="0.6"/>
<polygon points="387.8,251.3 386.4,251.6 388.3,252.6 387.4,252.9 388.1,254.2 386.3,253.5 385.9,253.9 385.2,253.8 385.0,255.5 384.2,255.1 383.8,253.1 382.8,254.7 382.1,254.6 381.1,254.6 380.4,254.1 381.0,252.9 380.4,252.5 381.7,251.7 382.0,251.3 381.5,250.9 380.6,250.1 379.9,249.0 381.2,249.0 382.3,249.2 381.9,247.8 382.3,246.7 383.6,248.0 384.2,249.0 385.1,246.6 385.0,249.2 386.4,247.9 386.2,249.2 387.6,248.7 387.2,249.7 387.8,250.1 389.1,250.5" fill="#6485d6" stroke="#1d46c8" stroke-width="0.8" fill-opacity="0.6"/>
<polyline points="375.9,243.4 372.9,236.4" fill="none" stroke="#1d46c8" stroke-width="0.9" />
<polygon points="376.1,236.4 377.4,237.4 376.0,237.9 376.1,239.2 374.0,238.0 373.6,238.6 372.9,238.6 371.9,239.6 371.6,238.3 369.8,239.0 369.0,238.3 368.6,237.4 367.9,236.4 368.1,235.3 368.6,234.3 371.3,235.1 371.3,234.0 372.0,233.5 372.9,233.6 373.7,233.6 375.0,233.2 374.6,234.9 375.0,235.3 376.9,235.4" fill="#6485d6" stroke="#1d46c8" stroke-width="0.7" fill-opacity="0.6"/>
<polyline points="391.0,268.7 396.5,261.7 403.2,252.7" fill="none" stroke="#1d46c8" stroke-width="1.1" />
<polygon points="411.2,252.7 408.1,253.5 407.5,254.1 409.2,255.8 406.7,255.4 407.4,257.3 404.9,255.5 404.7,256.6 404.3,258.6 403.2,257.3 402.4,256.4 400.9,258.4 400.5,256.9 400.0,256.1 398.4,256.3 399.7,254.5 394.3,255.6 395.2,254.0 398.7,252.7 399.2,252.1 396.8,250.6 397.7,249.9 397.9,248.8 397.8,246.9 398.7,245.8 400.3,245.8 402.0,246.7 403.2,246.9 404.5,245.7 406.0,245.6 406.5,247.6 406.8,248.8 406.3,250.3 410.9,248.7 407.2,251.4 410.5,251.6" fill="#6485d6" stroke="#1d46c8" stroke-width="0.8" fill-opacity="0.6"/>
<polygon points="402.3,258.7 403.1,259.8 400.2,259.9 399.4,260.2 400.7,261.9 398.7,261.2 398.7,262.1 398.5,263.8 397.1,262.0 396.5,264.7 395.4,264.0 394.4,263.8 394.3,262.2 394.2,261.2 393.4,261.0 391.1,261.5 390.6,260.6 391.7,259.5 389.7,258.7 390.3,257.7 390.9,256.9 392.4,256.6 392.9,256.0 393.6,255.6 393.8,254.5 394.4,253.7 395.6,254.3 396.5,253.7 397.5,253.4 398.0,255.0 398.2,256.1 400.3,254.6 399.2,256.7 401.3,256.2 402.3,256.8 400.1,258.1" fill="#6485d6" stroke="#1d46c8" stroke-width="0.8" fill-opacity="0.6"/>
<polyline points="391.0,276.1 381.7,269.1 370.4,262.9" fill="none" stroke="#1d46c8" stroke-width="1.1" />
<polygon points="375.6,262.9 378.0,264.2 375.8,264.7 375.4,265.5 377.0,267.9 376.3,269.2 372.6,266.4 373.4,270.4 371.2,266.9 370.4,270.5 369.4,268.1 367.5,270.1 367.7,267.2 367.3,266.3 367.5,265.2 365.7,265.4 364.0,265.0 363.0,264.1 364.0,262.9 362.9,261.8 365.7,261.4 363.7,259.5 364.8,258.7 367.6,259.9 366.9,257.5 368.9,259.3 369.3,257.3 370.4,254.4 371.8,255.8 373.4,255.4 373.4,258.2 374.3,258.8 376.8,258.1 374.4,260.9 376.0,261.1 375.8,262.1" fill="#6485d6" stroke="#1d46c8" stroke-width="0.8" fill-opacity="0.6"/>
<polygon points="385.7,266.1 385.8,266.8 386.3,267.6 385.0,267.9 385.1,268.7 383.9,268.5 383.5,268.9 382.6,268.4 382.3,269.1 381.7,271.4 380.9,270.4 380.5,269.1 380.2,268.5 379.7,268.4 378.5,268.6 377.5,268.3 378.4,267.2 376.6,267.0 377.2,266.1 379.1,265.7 378.5,265.1 377.2,263.8 379.2,264.2 379.7,264.0 379.4,262.5 380.0,261.8 381.0,262.5 381.7,261.6 382.3,263.4 383.4,262.0 383.2,263.8 384.2,263.5 386.1,262.9 385.0,264.4 383.9,265.4 386.6,265.4" fill="#6485d6" stroke="#1d46c8" stroke-width="0.8" fill-opacity="0.6"/>
<polyline points="391.0,283.6 402.0,276.6 415.5,269.9" fill="none" stroke="#1d46c8" stroke-width="1.1" />
<polygon points="422.8,269.9 420.5,270.7 419.7,271.3 420.4,272.4 422.2,274.9 419.0,273.7 420.1,277.0 418.3,276.8 416.5,275.0 415.5,274.5 414.8,273.6 413.3,275.3 413.0,273.8 411.5,274.2 407.8,275.7 410.0,272.8 406.1,272.9 407.5,271.1 406.2,269.9 409.2,268.9 407.7,267.3 408.4,266.2 409.7,265.5 409.3,263.2 412.5,265.2 413.7,265.5 414.2,263.1 415.5,264.9 416.5,264.7 417.9,264.0 420.6,261.9 419.2,265.9 420.1,266.4 419.5,267.8 423.2,267.4 420.9,269.0" fill="#6485d6" stroke="#1d46c8" stroke-width="0.8" fill-opacity="0.6"/>
<polygon points="407.0,273.6 404.9,274.0 407.2,275.3 404.7,275.0 405.3,276.0 404.9,276.6 404.4,277.3 403.4,276.9 402.9,277.9 402.0,275.9 401.6,275.7 401.0,276.1 399.7,277.2 400.3,275.5 399.1,275.8 399.4,274.9 397.5,275.1 398.1,274.2 396.9,273.6 397.3,272.8 397.5,272.1 399.5,272.3 398.7,271.0 399.9,271.2 400.2,270.7 400.0,268.6 401.3,270.0 402.0,268.4 402.4,271.6 402.8,271.7 404.3,270.1 404.9,270.5 405.2,271.1 405.2,271.9 405.4,272.5 405.6,273.0" fill="#6485d6" stroke="#1d46c8" stroke-width="0.8" fill-opacity="0.6"/>
<polyline points="415.5,269.9 418.5,262.9" fill="none" stroke="#1d46c8" stroke-width="0.9" />
<polygon points="421.0,262.9 422.3,263.7 422.8,265.0 421.5,265.4 420.7,266.1 419.5,266.0 418.5,265.8 417.8,265.0 416.5,265.9 415.1,265.8 415.4,264.4 414.9,263.7 415.5,262.9 414.2,261.9 415.0,261.2 416.3,261.0 417.0,260.6 417.4,259.3 418.5,260.3 419.7,259.2 420.1,260.5 420.3,261.4 421.4,261.5 422.8,261.9" fill="#6485d6" stroke="#1d46c8" stroke-width="0.7" fill-opacity="0.6"/>
<path d="M391.0,160.4A2.3,2.3 0 0,1 394.4,162.2A2.5,2.5 0 0,1 397.2,165.8A2.4,2.4 0 0,1 400.6,168.0A2.8,2.8 0 0,1 404.6,169.1A3.2,3.2 0 0,1 408.9,172.7A3.0,3.0 0 0,1 411.1,178.0A3.5,3.5 0 0,1 414.6,181.3A2.1,2.1 0 0,1 415.5,184.7A3.1,3.1 0 0,1 414.6,189.1A2.3,2.3 0 0,1 415.7,192.7A2.4,2.4 0 0,1 419.5,195.0A3.2,3.2 0 0,1 418.8,200.4A2.5,2.5 0 0,1 417.0,204.3A3.7,3.7 0 0,1 415.7,209.6A3.2,3.2 0 0,1 413.5,213.7A3.1,3.1 0 0,1 414.8,218.0A2.6,2.6 0 0,1 417.4,221.3A2.4,2.4 0 0,1 416.2,225.4A3.4,3.4 0 0,1 412.7,229.5A2.6,2.6 0 0,1 410.5,233.8A3.1,3.1 0 0,1 406.4,236.7A3.7,3.7 0 0,1 401.2,239.1A3.8,3.8 0 0,1 395.9,242.7A4.0,4.0 0 0,1 390.3,238.6A1.6,1.6 0 0,1 387.5,237.8A4.3,4.3 0 0,1 381.8,240.2A2.7,2.7 0 0,1 376.8,239.4A1.9,1.9 0 0,1 374.7,237.4A3.3,3.3 0 0,1 373.2,232.1A3.1,3.1 0 0,1 368.4,229.6A2.7,2.7 0 0,1 366.7,225.7A2.6,2.6 0 0,1 366.3,221.6A2.7,2.7 0 0,1 365.7,217.3A3.9,3.9 0 0,1 361.7,213.6A3.9,3.9 0 0,1 365.5,209.5A2.4,2.4 0 0,1 367.9,205.9A2.2,2.2 0 0,1 368.9,202.2A2.5,2.5 0 0,1 366.3,198.9A2.8,2.8 0 0,1 366.4,194.8A2.5,2.5 0 0,1 366.3,191.0A2.4,2.4 0 0,1 365.8,187.6A2.8,2.8 0 0,1 363.9,183.5A2.7,2.7 0 0,1 365.4,179.6A3.4,3.4 0 0,1 371.2,178.1A3.0,3.0 0 0,1 373.9,174.5A2.7,2.7 0 0,1 378.1,172.4A3.7,3.7 0 0,1 381.3,168.3A3.1,3.1 0 0,1 384.3,164.3A3.0,3.0 0 0,1 388.1,162.5A2.5,2.5 0 0,1 391.0,160.4Z" fill="#6586d8" fill-opacity="0.86" stroke="#123cc0" stroke-width="1"/>
<polygon points="391.0,169.6 391.8,171.2 392.7,172.8 393.7,174.4 394.7,176.0 395.7,177.6 396.8,179.2 397.8,180.8 398.8,182.4 399.8,184.0 400.8,185.6 401.7,187.2 402.7,188.8 403.6,190.4 404.4,192.0 405.3,193.6 406.1,195.2 406.8,196.8 407.5,198.4 408.2,200.0 408.8,201.6 409.3,203.2 409.8,204.8 410.3,206.4 410.7,208.0 411.0,209.6 411.2,211.2 411.4,212.8 411.6,214.4 411.7,216.0 411.7,217.6 411.7,219.2 411.7,220.8 411.4,222.4 410.6,224.0 409.2,225.6 407.3,227.2 404.8,228.8 401.8,230.4 398.2,232.0 394.1,233.6 387.9,233.6 383.8,232.0 380.2,230.4 377.2,228.8 374.7,227.2 372.8,225.6 371.4,224.0 370.6,222.4 370.3,220.8 370.3,219.2 370.3,217.6 370.3,216.0 370.4,214.4 370.6,212.8 370.8,211.2 371.0,209.6 371.3,208.0 371.7,206.4 372.2,204.8 372.7,203.2 373.2,201.6 373.8,200.0 374.5,198.4 375.2,196.8 375.9,195.2 376.7,193.6 377.6,192.0 378.4,190.4 379.3,188.8 380.3,187.2 381.2,185.6 382.2,184.0 383.2,182.4 384.2,180.8 385.2,179.2 386.3,177.6 387.3,176.0 388.3,174.4 389.3,172.8 390.2,171.2 391.0,169.6" fill="#4a6ed0" stroke="#2f58c8" stroke-width="0.6" fill-opacity="0.45" stroke-opacity="0.6"/>
<polyline points="391.0,163.0 391.0,228.0" fill="none" stroke="#3c62cc" stroke-width="0.7" />
<polyline points="531.0,194.8 531.0,338.0" fill="none" stroke="#1539b9" stroke-width="2.0" />
<polyline points="531.0,209.0 523.9,202.0 515.2,192.1" fill="none" stroke="#1d46c8" stroke-width="1.1" />
<polygon points="521.5,192.1 522.3,193.2 519.2,193.4 518.3,193.7 519.8,195.5 517.6,194.7 517.6,195.8 517.4,197.6 515.9,195.6 515.2,198.5 514.1,197.8 513.0,197.6 512.8,195.8 512.7,194.8 511.9,194.6 509.5,195.1 508.8,194.2 510.0,192.9 507.9,192.1 508.5,191.0 509.2,190.1 510.8,189.8 511.3,189.2 512.1,188.8 512.3,187.6 513.0,186.7 514.3,187.3 515.2,186.7 516.3,186.4 516.8,188.1 517.0,189.3 519.3,187.7 518.1,189.9 520.4,189.4 521.5,190.0 519.1,191.5" fill="#6485d6" stroke="#1d46c8" stroke-width="0.8" fill-opacity="0.6"/>
<polygon points="527.0,199.0 527.0,199.5 528.3,200.4 527.1,200.7 528.3,202.3 526.2,201.5 526.5,203.1 525.7,203.4 524.4,201.8 523.9,201.1 523.3,202.1 522.5,202.4 522.4,201.3 521.9,201.1 521.2,201.0 519.7,201.2 520.7,200.0 519.2,199.7 518.5,199.0 520.9,198.5 520.8,198.0 518.8,196.4 520.2,196.2 520.4,195.3 521.8,195.7 522.2,194.9 523.3,195.8 523.9,193.6 524.3,196.7 524.7,197.0 526.3,195.2 526.5,196.2 526.8,196.8 528.2,196.7 528.7,197.4 527.9,198.4" fill="#6485d6" stroke="#1d46c8" stroke-width="0.8" fill-opacity="0.6"/>
<polyline points="515.2,192.1 512.2,185.1" fill="none" stroke="#1d46c8" stroke-width="0.9" />
<polygon points="514.7,185.1 514.6,185.6 515.5,186.7 514.9,187.4 513.3,186.7 513.2,188.3 512.2,189.1 511.4,187.7 511.0,186.8 509.3,187.6 509.3,186.5 509.6,185.7 509.7,185.1 508.4,184.2 509.7,183.8 510.1,183.3 510.4,182.5 511.3,182.3 512.2,181.3 512.9,182.9 514.1,182.2 514.8,182.9 515.7,183.4 516.5,184.1" fill="#6485d6" stroke="#1d46c8" stroke-width="0.7" fill-opacity="0.6"/>
<polyline points="531.0,217.9 536.5,210.9 543.2,202.6" fill="none" stroke="#1d46c8" stroke-width="1.1" />
<polygon points="548.5,202.6 548.7,203.5 549.3,204.6 547.6,204.9 547.7,206.0 546.1,205.7 545.5,206.2 544.4,205.6 543.9,206.5 543.2,209.6 542.0,208.3 541.5,206.6 541.1,205.7 540.4,205.5 538.8,205.9 537.5,205.5 538.7,204.1 536.3,203.7 537.1,202.6 539.7,202.0 538.8,201.2 537.1,199.4 539.8,200.0 540.4,199.7 540.0,197.7 540.8,196.7 542.2,197.7 543.2,196.5 543.9,198.9 545.4,197.0 545.1,199.5 546.4,199.1 549.0,198.2 547.6,200.3 546.0,201.6 549.7,201.5" fill="#6485d6" stroke="#1d46c8" stroke-width="0.8" fill-opacity="0.6"/>
<polygon points="539.4,207.9 540.5,208.5 541.5,209.5 540.5,209.9 540.6,211.0 539.3,210.8 538.2,210.5 537.5,210.5 537.1,211.0 536.5,211.5 535.9,210.8 535.2,211.0 534.3,211.2 533.4,211.2 533.6,210.0 531.6,210.4 533.9,208.7 530.6,208.8 532.9,207.9 533.7,207.4 534.2,207.1 531.7,205.4 534.8,206.6 533.5,204.7 534.8,205.2 534.7,203.4 535.6,203.7 536.5,204.3 537.0,205.3 537.7,204.7 539.0,204.0 538.9,205.2 539.3,205.7 540.6,205.7 540.4,206.6 542.4,206.9" fill="#6485d6" stroke="#1d46c8" stroke-width="0.8" fill-opacity="0.6"/>
<polyline points="531.0,226.7 525.4,219.7 518.5,208.7" fill="none" stroke="#1d46c8" stroke-width="1.1" />
<polygon points="525.1,208.7 522.3,209.3 525.4,211.0 522.0,210.6 522.8,212.0 522.3,212.8 521.7,213.7 520.3,213.1 519.6,214.4 518.5,211.8 518.0,211.5 517.2,212.0 515.4,213.6 516.2,211.2 514.6,211.7 515.0,210.5 512.5,210.7 513.3,209.5 511.7,208.7 512.2,207.7 512.5,206.8 515.2,207.0 514.0,205.3 515.6,205.6 516.1,204.9 515.8,202.1 517.6,204.0 518.5,201.9 519.0,206.1 519.5,206.2 521.4,204.1 522.3,204.7 522.7,205.5 522.7,206.5 522.9,207.3 523.3,208.0" fill="#6485d6" stroke="#1d46c8" stroke-width="0.8" fill-opacity="0.6"/>
<polygon points="529.2,216.7 528.5,217.2 529.0,217.9 530.9,219.6 529.6,219.9 528.8,220.3 527.3,219.7 527.3,221.4 526.2,221.0 525.4,221.5 524.4,221.6 523.0,222.6 522.6,221.1 522.4,219.9 521.9,219.4 521.3,218.8 519.2,218.7 521.7,217.3 520.4,216.7 519.1,215.7 521.5,215.4 519.8,213.8 521.3,213.7 522.7,213.9 522.3,212.0 523.3,211.6 524.5,212.3 525.4,211.3 526.6,210.2 527.6,211.2 529.0,211.1 527.5,214.5 527.8,214.9 529.1,214.8 530.3,215.1 531.5,215.7" fill="#6485d6" stroke="#1d46c8" stroke-width="0.8" fill-opacity="0.6"/>
<polyline points="531.0,235.6 537.7,228.6 546.0,215.8" fill="none" stroke="#1d46c8" stroke-width="1.1" />
<polygon points="551.4,215.8 554.9,217.2 551.6,217.6 552.3,219.1 552.2,220.5 550.1,220.2 550.4,222.7 548.4,221.9 546.7,219.8 546.0,221.1 544.7,222.4 544.3,219.8 542.1,221.8 540.3,221.8 539.6,220.6 537.8,220.0 539.9,217.8 538.4,217.0 538.4,215.8 537.0,214.4 536.2,212.6 538.4,211.9 538.5,210.1 539.3,208.7 543.7,212.2 544.3,211.8 545.2,212.2 546.0,210.8 546.7,212.0 549.0,208.2 548.6,211.7 550.2,211.2 550.3,212.5 552.8,212.2 554.6,212.9 551.7,214.9" fill="#6485d6" stroke="#1d46c8" stroke-width="0.8" fill-opacity="0.6"/>
<polygon points="541.1,225.6 542.6,226.3 541.2,226.7 541.9,227.7 539.5,226.9 539.5,227.5 539.1,227.7 539.1,229.0 538.2,228.0 537.7,229.6 536.9,229.7 536.2,229.5 535.1,229.6 534.4,229.1 533.8,228.6 535.8,226.6 534.6,226.6 534.1,226.1 534.4,225.6 534.3,225.0 533.6,224.2 535.5,224.4 535.8,224.1 534.9,222.5 536.1,223.0 536.5,222.6 537.2,222.8 537.7,222.6 538.5,221.8 539.0,222.3 539.5,222.8 541.1,222.0 541.6,222.6 539.8,224.5 540.5,224.7 542.2,224.9" fill="#6485d6" stroke="#1d46c8" stroke-width="0.8" fill-opacity="0.6"/>
<polyline points="546.0,215.8 549.0,208.8" fill="none" stroke="#1d46c8" stroke-width="0.9" />
<polygon points="553.4,208.8 553.3,209.8 551.5,210.0 551.2,210.7 550.5,211.0 549.6,210.8 549.0,211.5 548.1,211.5 547.3,211.3 545.8,211.5 544.7,210.9 544.1,209.9 545.4,208.8 544.1,207.7 545.7,207.2 545.8,206.0 546.5,205.2 547.7,204.7 549.0,206.0 549.9,205.9 550.9,205.9 551.5,206.6 553.3,206.6 553.6,207.7" fill="#6485d6" stroke="#1d46c8" stroke-width="0.7" fill-opacity="0.6"/>
<polyline points="531.0,244.4 521.2,237.4 509.2,224.0" fill="none" stroke="#1d46c8" stroke-width="1.1" />
<polygon points="513.7,224.0 515.3,225.0 514.9,225.9 513.7,226.4 514.4,228.0 512.2,227.3 512.3,229.0 511.4,229.5 510.4,230.2 509.2,230.0 508.1,229.8 507.1,229.2 506.4,228.4 506.3,227.1 505.2,227.1 506.1,225.6 501.5,226.6 502.5,225.1 502.3,224.0 502.6,223.0 503.1,222.0 505.1,221.9 505.4,221.2 506.3,220.9 506.4,219.6 506.5,217.3 508.5,220.8 509.2,218.3 510.5,217.2 511.8,217.6 511.4,220.6 512.5,220.5 513.6,220.7 514.2,221.4 512.5,223.0 516.6,222.9" fill="#6485d6" stroke="#1d46c8" stroke-width="0.8" fill-opacity="0.6"/>
<polygon points="524.1,234.4 525.6,235.1 526.5,236.2 525.3,236.6 525.0,237.3 524.0,237.4 523.2,237.5 522.2,236.9 522.0,238.6 521.2,239.4 520.5,238.1 519.7,238.0 519.5,237.1 517.9,237.9 517.7,237.1 518.1,236.0 517.9,235.5 516.4,235.2 517.8,234.4 516.2,233.6 517.7,233.3 518.7,233.2 518.3,232.2 517.9,230.9 518.6,230.4 519.7,230.7 520.3,229.7 521.2,231.4 522.1,229.8 522.7,230.6 522.9,231.7 523.0,232.5 524.9,231.7 523.8,233.0 525.1,233.1 524.9,233.8" fill="#6485d6" stroke="#1d46c8" stroke-width="0.8" fill-opacity="0.6"/>
<polyline points="531.0,253.3 542.5,246.3 556.5,239.5" fill="none" stroke="#1d46c8" stroke-width="1.1" />
<polygon points="563.5,239.5 561.9,240.4 560.0,240.7 560.1,241.4 559.7,242.0 560.0,243.3 559.4,244.0 558.9,245.6 557.6,245.3 556.5,245.4 555.3,245.7 554.9,243.3 554.5,242.6 552.2,244.1 553.7,241.6 553.1,241.3 550.1,241.6 553.4,240.0 552.4,239.5 552.1,238.8 549.4,237.2 551.9,237.2 551.8,236.0 552.7,235.4 553.1,234.2 554.0,233.3 555.5,234.4 556.5,235.7 557.3,235.1 559.0,233.2 559.0,235.6 559.6,236.2 561.7,235.6 560.2,237.6 562.2,237.6 560.1,239.0" fill="#6485d6" stroke="#1d46c8" stroke-width="0.8" fill-opacity="0.6"/>
<polygon points="547.6,243.3 546.6,243.9 545.4,244.2 548.3,246.3 547.6,247.1 544.7,245.7 544.8,246.9 544.1,247.3 543.4,248.2 542.5,247.7 541.8,246.7 540.5,248.0 539.6,247.7 540.3,245.6 537.8,246.8 538.0,245.6 538.8,244.5 539.3,243.8 538.3,243.3 536.2,242.3 536.7,241.4 536.3,240.1 540.5,241.8 539.1,239.7 540.8,240.8 540.4,238.1 541.5,238.6 542.5,238.2 543.0,240.4 543.5,240.7 545.3,238.9 544.9,240.6 546.8,240.0 548.0,240.4 547.7,241.6 549.0,242.3" fill="#6485d6" stroke="#1d46c8" stroke-width="0.8" fill-opacity="0.6"/>
<polyline points="556.5,239.5 559.5,232.5" fill="none" stroke="#1d46c8" stroke-width="0.9" />
<polygon points="562.2,232.5 564.2,233.6 562.5,234.0 561.1,233.9 561.5,235.6 560.5,235.7 559.5,236.4 558.7,235.1 557.6,235.4 556.6,235.0 556.7,233.9 557.0,233.1 556.8,232.5 556.8,231.9 555.7,230.7 556.8,230.2 558.0,230.3 558.3,228.9 559.5,228.9 560.5,229.2 560.8,230.5 562.2,230.2 563.6,230.5 564.3,231.4" fill="#6485d6" stroke="#1d46c8" stroke-width="0.7" fill-opacity="0.6"/>
<polyline points="531.0,262.1 523.2,255.1 513.6,242.1" fill="none" stroke="#1d46c8" stroke-width="1.1" />
<polygon points="519.9,242.1 520.2,243.2 522.3,245.0 520.6,245.8 518.8,246.0 517.4,246.2 516.6,246.8 515.1,245.8 515.3,251.0 513.6,247.6 512.5,247.6 510.2,250.4 509.9,247.8 510.5,245.4 506.7,247.3 504.8,246.7 508.9,243.7 504.0,243.7 504.3,242.1 508.1,241.3 508.4,240.4 506.3,238.3 506.5,236.8 508.3,236.5 508.6,234.4 510.6,234.8 512.6,237.2 513.6,232.6 514.6,237.2 515.7,236.8 516.3,237.9 518.2,237.2 520.7,236.7 519.6,239.0 522.0,239.4 521.7,240.8" fill="#6485d6" stroke="#1d46c8" stroke-width="0.8" fill-opacity="0.6"/>
<polygon points="526.6,252.1 527.3,252.8 528.8,254.0 527.5,254.4 528.2,255.9 526.0,255.2 525.4,255.7 525.2,257.1 523.9,255.8 523.2,256.2 522.1,257.5 521.5,256.3 520.4,256.5 521.2,254.3 518.2,255.9 518.2,254.7 517.1,254.1 520.3,252.6 518.3,252.1 520.1,251.7 519.4,250.9 517.0,248.9 520.2,249.9 519.5,248.2 520.4,247.8 520.9,246.5 522.1,246.8 523.2,247.7 523.7,249.5 524.9,247.9 525.7,248.2 526.9,248.1 527.3,249.1 527.6,249.8 529.4,250.1 527.1,251.5" fill="#6485d6" stroke="#1d46c8" stroke-width="0.8" fill-opacity="0.6"/>
<path d="M531.0,133.6A2.7,2.7 0 0,1 534.9,136.2A3.5,3.5 0 0,1 539.8,139.1A2.5,2.5 0 0,1 543.1,141.7A3.1,3.1 0 0,1 546.6,144.8A3.4,3.4 0 0,1 549.6,149.6A2.5,2.5 0 0,1 551.7,153.9A2.8,2.8 0 0,1 554.5,157.2A2.3,2.3 0 0,1 556.9,159.8A2.9,2.9 0 0,1 558.1,164.5A2.3,2.3 0 0,1 556.6,168.0A2.2,2.2 0 0,1 555.8,171.4A2.9,2.9 0 0,1 555.2,175.5A2.7,2.7 0 0,1 553.0,179.5A2.8,2.8 0 0,1 554.9,183.9A3.0,3.0 0 0,1 558.2,187.6A2.2,2.2 0 0,1 558.6,190.8A4.2,4.2 0 0,1 555.3,195.8A2.7,2.7 0 0,1 552.4,199.1A2.1,2.1 0 0,1 551.0,202.8A1.9,1.9 0 0,1 548.7,205.4A2.2,2.2 0 0,1 546.2,208.2A3.9,3.9 0 0,1 541.0,210.8A3.3,3.3 0 0,1 535.8,211.0A4.1,4.1 0 0,1 530.5,208.9A3.5,3.5 0 0,1 525.3,209.6A3.6,3.6 0 0,1 519.6,212.3A2.1,2.1 0 0,1 516.0,210.3A2.0,2.0 0 0,1 514.4,206.9A2.8,2.8 0 0,1 511.3,202.9A2.9,2.9 0 0,1 508.6,199.7A2.5,2.5 0 0,1 506.0,195.8A3.1,3.1 0 0,1 509.0,191.3A2.4,2.4 0 0,1 509.8,188.0A3.3,3.3 0 0,1 505.9,183.8A2.2,2.2 0 0,1 506.0,180.0A2.7,2.7 0 0,1 504.2,176.1A2.9,2.9 0 0,1 503.9,170.9A2.8,2.8 0 0,1 505.9,167.2A3.1,3.1 0 0,1 507.5,162.8A2.8,2.8 0 0,1 507.9,158.8A2.6,2.6 0 0,1 507.1,154.4A2.0,2.0 0 0,1 509.4,151.5A3.0,3.0 0 0,1 512.8,147.5A2.8,2.8 0 0,1 516.3,145.3A3.0,3.0 0 0,1 519.7,141.5A2.4,2.4 0 0,1 523.7,140.1A3.4,3.4 0 0,1 527.3,136.6A2.7,2.7 0 0,1 530.6,134.3A0.5,0.5 0 0,1 531.0,133.6Z" fill="#6586d8" fill-opacity="0.86" stroke="#123cc0" stroke-width="1"/>
<polygon points="531.0,143.1 531.8,144.6 532.7,146.2 533.7,147.7 534.7,149.2 535.7,150.7 536.7,152.2 537.6,153.8 538.6,155.3 539.6,156.8 540.6,158.3 541.5,159.8 542.4,161.4 543.3,162.9 544.2,164.4 545.0,165.9 545.8,167.4 546.5,169.0 547.2,170.5 547.9,172.0 548.5,173.5 549.0,175.0 549.5,176.6 549.9,178.1 550.3,179.6 550.6,181.1 550.9,182.6 551.1,184.2 551.2,185.7 551.3,187.2 551.3,188.7 551.3,190.2 551.3,191.8 551.0,193.3 550.2,194.8 548.9,196.3 547.0,197.8 544.6,199.4 541.6,200.9 538.1,202.4 534.0,203.9 528.0,203.9 523.9,202.4 520.4,200.9 517.4,199.4 515.0,197.8 513.1,196.3 511.8,194.8 511.0,193.3 510.7,191.8 510.7,190.2 510.7,188.7 510.7,187.2 510.8,185.7 510.9,184.2 511.1,182.6 511.4,181.1 511.7,179.6 512.1,178.1 512.5,176.6 513.0,175.0 513.5,173.5 514.1,172.0 514.8,170.5 515.5,169.0 516.2,167.4 517.0,165.9 517.8,164.4 518.7,162.9 519.6,161.4 520.5,159.8 521.4,158.3 522.4,156.8 523.4,155.3 524.4,153.8 525.3,152.2 526.3,150.7 527.3,149.2 528.3,147.7 529.3,146.2 530.2,144.6 531.0,143.1" fill="#4a6ed0" stroke="#2f58c8" stroke-width="0.6" fill-opacity="0.45" stroke-opacity="0.6"/>
<polyline points="531.0,137.0 531.0,198.6" fill="none" stroke="#3c62cc" stroke-width="0.7" />
<polyline points="506.0,292.6 506.0,325.0" fill="none" stroke="#1539b9" stroke-width="2.0" />
<polyline points="506.0,307.0 517.6,300.0 531.7,293.6" fill="none" stroke="#1d46c8" stroke-width="1.1" />
<polygon points="536.9,293.6 539.6,294.8 541.3,296.7 539.1,297.4 538.4,298.7 536.7,298.9 535.3,299.1 533.5,298.1 533.2,301.0 531.7,302.5 530.4,300.1 529.1,300.0 528.6,298.4 525.8,299.8 525.4,298.3 526.2,296.4 525.8,295.5 523.0,294.9 525.6,293.6 522.7,292.1 525.4,291.5 527.3,291.3 526.5,289.6 525.9,287.3 527.1,286.3 529.0,287.0 530.0,285.1 531.7,288.1 533.3,285.2 534.5,286.7 534.8,288.7 535.0,290.0 538.3,288.6 536.5,291.1 538.7,291.3 538.4,292.5" fill="#6485d6" stroke="#1d46c8" stroke-width="0.8" fill-opacity="0.6"/>
<polygon points="521.7,297.0 522.2,297.7 523.0,298.8 522.0,299.3 521.2,299.7 521.4,301.1 519.9,300.7 518.5,299.2 518.4,301.4 517.6,299.9 516.7,301.2 516.2,300.5 514.8,301.3 514.2,300.6 513.5,300.1 514.0,298.8 511.9,298.9 514.0,297.6 514.1,297.0 513.2,296.3 512.9,295.5 514.5,295.4 512.8,293.4 513.8,292.9 516.1,294.7 515.9,292.8 516.9,293.5 517.6,291.4 518.5,292.0 518.9,293.8 519.2,294.5 520.6,293.7 522.2,293.5 520.3,295.6 520.5,296.0 522.6,296.2" fill="#6485d6" stroke="#1d46c8" stroke-width="0.8" fill-opacity="0.6"/>
<polyline points="506.0,311.0 498.0,304.0 488.3,290.6" fill="none" stroke="#1d46c8" stroke-width="1.1" />
<polygon points="493.9,290.6 492.8,291.4 491.5,291.7 494.7,294.0 493.9,294.9 490.8,293.3 490.9,294.6 490.1,295.1 489.4,296.0 488.3,295.4 487.6,294.4 486.2,295.8 485.2,295.5 485.9,293.2 483.2,294.5 483.4,293.2 484.2,292.0 484.8,291.2 483.8,290.6 481.5,289.6 482.0,288.6 481.5,287.1 486.1,289.0 484.6,286.7 486.5,287.9 486.0,285.0 487.3,285.5 488.3,285.1 488.9,287.5 489.5,287.8 491.4,285.9 491.0,287.7 493.1,287.0 494.4,287.5 494.0,288.8 495.4,289.5" fill="#6485d6" stroke="#1d46c8" stroke-width="0.8" fill-opacity="0.6"/>
<polygon points="504.7,301.0 505.6,302.2 504.7,303.2 502.8,303.5 500.9,303.2 501.0,304.2 500.9,305.5 499.4,304.4 498.9,305.3 498.0,305.6 497.4,304.4 496.0,306.1 495.1,305.6 495.6,303.6 493.1,304.7 493.4,303.4 493.4,302.5 492.3,301.9 493.1,301.0 491.2,299.9 494.7,299.9 493.1,298.4 494.7,298.5 494.5,297.2 495.0,296.3 495.9,295.6 497.0,295.7 498.0,295.7 499.0,296.3 500.6,294.8 500.2,297.6 501.6,297.2 501.5,298.4 503.0,298.4 504.6,298.9 504.7,299.9" fill="#6485d6" stroke="#1d46c8" stroke-width="0.8" fill-opacity="0.6"/>
<polyline points="488.3,290.6 485.3,283.6" fill="none" stroke="#1d46c8" stroke-width="0.9" />
<polygon points="488.8,283.6 490.0,284.7 488.6,285.3 486.9,285.0 486.7,285.7 486.1,286.1 485.3,287.8 484.5,286.2 483.8,285.9 482.8,285.8 483.1,284.8 480.8,284.7 483.1,283.6 482.1,282.9 481.5,281.7 482.9,281.6 483.5,280.9 484.3,280.4 485.3,281.7 486.0,281.3 487.2,280.9 487.6,281.7 488.3,282.2 489.1,282.8" fill="#6485d6" stroke="#1d46c8" stroke-width="0.7" fill-opacity="0.6"/>
<polyline points="506.0,315.0 512.6,308.0 520.6,299.2" fill="none" stroke="#1d46c8" stroke-width="1.1" />
<polygon points="525.5,299.2 526.5,300.2 528.6,301.9 526.7,302.4 527.7,304.7 524.6,303.6 523.8,304.3 523.5,306.4 521.6,304.5 520.6,305.1 519.1,306.9 518.1,305.2 516.6,305.5 517.7,302.3 513.5,304.6 513.5,302.9 511.9,302.1 516.5,299.9 513.6,299.2 516.2,298.5 515.2,297.5 511.8,294.7 516.4,296.1 515.3,293.6 516.6,293.0 517.3,291.2 519.1,291.7 520.6,292.8 521.3,295.5 523.0,293.2 524.1,293.7 525.9,293.5 526.4,294.8 527.0,295.9 529.5,296.3 526.2,298.3" fill="#6485d6" stroke="#1d46c8" stroke-width="0.8" fill-opacity="0.6"/>
<polygon points="515.6,305.0 515.7,305.5 515.8,306.1 516.0,306.8 515.3,307.1 513.8,306.3 514.6,308.2 514.1,308.8 512.9,307.0 512.6,307.8 511.8,308.9 511.3,308.0 510.7,307.9 510.1,307.6 510.3,306.7 510.4,306.1 508.7,306.3 510.4,305.3 508.1,305.0 510.2,304.6 509.2,303.9 509.9,303.6 509.0,302.3 509.4,301.6 510.7,302.2 511.2,301.7 512.2,303.0 512.6,302.3 513.2,301.5 513.9,301.8 515.1,301.1 515.3,302.0 514.1,303.8 516.1,303.2 515.0,304.2 515.5,304.5" fill="#6485d6" stroke="#1d46c8" stroke-width="0.8" fill-opacity="0.6"/>
<polyline points="520.6,299.2 523.6,292.2" fill="none" stroke="#1d46c8" stroke-width="0.9" />
<polygon points="525.9,292.2 526.6,292.9 526.9,293.9 526.8,295.0 525.8,295.5 524.6,295.6 523.6,296.0 522.5,295.7 521.9,294.7 520.6,294.8 521.1,293.4 520.3,293.0 518.8,292.2 520.1,291.4 520.9,290.9 521.7,290.7 522.0,289.9 522.4,288.6 523.6,290.3 524.2,290.3 525.4,289.5 525.4,290.7 527.0,290.5 527.5,291.3" fill="#6485d6" stroke="#1d46c8" stroke-width="0.7" fill-opacity="0.6"/>
<polyline points="506.0,319.0 500.5,312.0 493.8,305.4" fill="none" stroke="#1d46c8" stroke-width="1.1" />
<polygon points="497.8,305.4 500.6,306.5 500.0,307.4 499.8,308.5 496.7,307.6 495.8,307.6 497.5,311.2 495.4,309.3 494.6,309.4 493.8,309.3 492.8,310.9 492.5,308.8 490.9,310.0 489.6,310.0 489.2,308.9 490.9,307.0 487.5,307.5 490.0,306.1 486.7,305.4 488.7,304.6 487.3,303.3 488.8,302.8 489.2,301.9 489.5,300.8 491.6,301.9 491.9,300.7 492.6,299.3 493.8,300.6 495.1,299.1 495.9,300.3 497.5,299.7 498.1,300.9 498.1,302.2 498.9,302.8 499.9,303.5 497.6,304.8" fill="#6485d6" stroke="#1d46c8" stroke-width="0.8" fill-opacity="0.6"/>
<polygon points="504.7,309.0 506.2,309.9 504.1,310.2 503.3,310.4 503.0,310.9 502.4,311.0 501.9,311.2 501.4,311.1 501.1,312.1 500.5,312.0 499.9,312.3 499.2,312.2 499.3,311.0 497.6,312.2 496.6,312.0 497.4,310.6 497.1,310.1 498.1,309.4 496.5,309.0 498.3,308.6 498.3,308.3 497.8,307.6 498.1,307.2 498.8,307.1 498.2,305.4 499.0,305.2 499.8,305.5 500.5,306.1 501.3,304.9 501.5,306.7 501.8,307.0 504.2,305.1 504.2,306.2 504.6,306.9 505.3,307.4 503.5,308.5" fill="#6485d6" stroke="#1d46c8" stroke-width="0.8" fill-opacity="0.6"/>
<polyline points="493.8,305.4 490.8,298.4" fill="none" stroke="#1d46c8" stroke-width="0.9" />
<polygon points="494.4,298.4 493.6,299.1 494.5,300.3 493.2,300.5 492.9,301.6 491.5,300.5 490.8,302.6 490.0,301.0 489.6,300.4 487.8,301.0 488.2,299.8 487.4,299.2 488.6,298.4 487.5,297.7 486.7,296.4 488.3,296.2 489.3,296.1 489.8,295.1 490.8,295.6 491.8,295.4 493.1,295.1 492.9,296.7 493.1,297.3 494.5,297.6" fill="#6485d6" stroke="#1d46c8" stroke-width="0.7" fill-opacity="0.6"/>
<path d="M506.0,230.2A3.1,3.1 0 0,1 509.0,234.0A1.8,1.8 0 0,1 511.9,234.6A2.2,2.2 0 0,1 514.9,237.6A3.0,3.0 0 0,1 518.5,241.6A3.0,3.0 0 0,1 522.5,244.1A2.1,2.1 0 0,1 524.9,246.8A2.9,2.9 0 0,1 526.5,250.7A2.5,2.5 0 0,1 528.6,254.6A3.7,3.7 0 0,1 532.9,257.6A2.9,2.9 0 0,1 531.3,261.6A2.4,2.4 0 0,1 529.8,264.8A3.4,3.4 0 0,1 531.4,269.3A3.2,3.2 0 0,1 528.9,273.1A3.3,3.3 0 0,1 527.9,278.2A3.2,3.2 0 0,1 531.2,281.3A2.5,2.5 0 0,1 533.4,285.2A3.2,3.2 0 0,1 530.2,289.3A3.2,3.2 0 0,1 527.5,293.0A2.1,2.1 0 0,1 526.2,296.4A2.2,2.2 0 0,1 524.5,299.1A2.6,2.6 0 0,1 521.3,302.8A2.1,2.1 0 0,1 520.2,306.2A2.7,2.7 0 0,1 517.8,310.8A4.0,4.0 0 0,1 511.7,306.9A3.3,3.3 0 0,1 506.2,306.2A4.3,4.3 0 0,1 500.3,310.7A3.7,3.7 0 0,1 495.0,308.2A2.7,2.7 0 0,1 491.0,308.4A3.1,3.1 0 0,1 489.5,304.0A2.4,2.4 0 0,1 488.1,299.8A3.4,3.4 0 0,1 486.5,295.1A2.7,2.7 0 0,1 482.7,292.4A1.8,1.8 0 0,1 481.3,289.4A2.8,2.8 0 0,1 480.6,284.7A2.6,2.6 0 0,1 480.1,280.5A2.6,2.6 0 0,1 482.5,276.1A2.0,2.0 0 0,1 483.8,272.6A2.9,2.9 0 0,1 485.9,268.6A3.2,3.2 0 0,1 481.4,265.2A2.1,2.1 0 0,1 480.5,261.4A2.9,2.9 0 0,1 482.1,256.4A2.4,2.4 0 0,1 483.3,252.8A3.0,3.0 0 0,1 483.8,248.3A3.2,3.2 0 0,1 487.8,245.3A2.6,2.6 0 0,1 492.5,243.8A2.9,2.9 0 0,1 496.2,241.0A3.2,3.2 0 0,1 499.6,237.3A2.6,2.6 0 0,1 502.5,234.8A2.8,2.8 0 0,1 506.0,231.6A0.9,0.9 0 0,1 506.0,230.2Z" fill="#6586d8" fill-opacity="0.86" stroke="#123cc0" stroke-width="1"/>
<polygon points="506.0,240.2 506.8,241.8 507.7,243.3 508.6,244.9 509.5,246.4 510.5,247.9 511.4,249.5 512.4,251.0 513.4,252.6 514.3,254.1 515.2,255.6 516.1,257.2 517.0,258.7 517.9,260.3 518.7,261.8 519.5,263.3 520.3,264.9 521.0,266.4 521.6,268.0 522.3,269.5 522.8,271.0 523.4,272.6 523.8,274.1 524.2,275.7 524.6,277.2 524.9,278.7 525.2,280.3 525.3,281.8 525.5,283.4 525.5,284.9 525.6,286.4 525.6,288.0 525.6,289.5 525.3,291.1 524.5,292.6 523.2,294.1 521.4,295.7 519.1,297.2 516.2,298.8 512.8,300.3 508.9,301.8 503.1,301.8 499.2,300.3 495.8,298.8 492.9,297.2 490.6,295.7 488.8,294.1 487.5,292.6 486.7,291.1 486.4,289.5 486.4,288.0 486.4,286.4 486.5,284.9 486.5,283.4 486.7,281.8 486.8,280.3 487.1,278.7 487.4,277.2 487.8,275.7 488.2,274.1 488.6,272.6 489.2,271.0 489.7,269.5 490.4,268.0 491.0,266.4 491.7,264.9 492.5,263.3 493.3,261.8 494.1,260.3 495.0,258.7 495.9,257.2 496.8,255.6 497.7,254.1 498.6,252.6 499.6,251.0 500.6,249.5 501.5,247.9 502.5,246.4 503.4,244.9 504.3,243.3 505.2,241.8 506.0,240.2" fill="#4a6ed0" stroke="#2f58c8" stroke-width="0.6" fill-opacity="0.45" stroke-opacity="0.6"/>
<polyline points="506.0,234.0 506.0,296.4" fill="none" stroke="#3c62cc" stroke-width="0.7" />
<polyline points="643.3,262.0 643.3,400.0" fill="none" stroke="#1539b9" stroke-width="2.0" />
<polyline points="643.3,276.0 636.5,269.0 628.2,255.5" fill="none" stroke="#1d46c8" stroke-width="1.1" />
<polygon points="639.4,255.5 637.1,257.0 634.4,257.6 636.2,259.7 632.2,258.6 631.5,259.2 631.5,260.8 631.7,264.2 629.4,261.9 628.2,263.3 626.9,262.0 625.4,262.3 625.3,260.0 624.8,259.1 620.5,261.3 622.7,258.4 618.5,258.7 617.9,257.2 618.7,255.5 619.3,254.1 620.5,253.0 618.6,250.6 623.7,252.2 624.9,252.0 625.2,250.9 625.3,248.4 627.1,250.0 628.2,246.9 629.0,251.1 631.3,247.7 632.2,249.2 634.0,249.3 636.0,249.6 637.3,250.8 637.5,252.5 636.0,254.3" fill="#6485d6" stroke="#1d46c8" stroke-width="0.8" fill-opacity="0.6"/>
<polygon points="641.0,266.0 641.0,266.7 639.3,266.9 639.2,267.4 638.8,267.8 638.1,267.7 638.1,268.5 637.6,268.8 637.1,269.0 636.5,270.1 635.6,270.4 634.8,270.3 634.7,268.8 633.2,269.5 633.6,268.2 632.5,268.1 631.9,267.5 631.5,266.8 633.3,266.0 633.0,265.4 632.8,264.8 633.4,264.4 632.6,263.1 633.3,262.6 635.2,264.0 635.5,263.4 636.0,263.6 636.5,262.9 637.3,261.7 637.8,262.9 637.9,263.8 639.4,262.9 639.7,263.6 639.8,264.3 640.1,264.8 640.3,265.4" fill="#6485d6" stroke="#1d46c8" stroke-width="0.8" fill-opacity="0.6"/>
<polyline points="643.3,284.9 653.2,277.9 665.3,266.4" fill="none" stroke="#1d46c8" stroke-width="1.1" />
<polygon points="669.3,266.4 672.3,267.5 670.0,267.9 668.1,267.9 669.8,269.8 668.8,270.2 668.5,271.5 666.8,270.1 666.3,271.3 665.3,271.6 664.5,270.5 664.0,269.5 663.4,269.4 662.7,269.2 660.5,270.0 660.6,268.9 661.3,267.7 659.1,267.4 659.2,266.4 659.5,265.5 661.6,265.2 660.5,263.9 660.0,262.4 660.7,261.5 662.4,261.8 663.6,262.2 664.2,260.6 665.3,262.4 666.3,261.5 667.0,262.2 668.3,261.7 669.9,261.5 667.7,264.6 670.5,263.7 670.4,264.7 669.7,265.7" fill="#6485d6" stroke="#1d46c8" stroke-width="0.8" fill-opacity="0.6"/>
<polygon points="656.6,274.9 659.7,275.9 657.3,276.2 656.4,276.5 656.0,277.0 655.8,277.7 656.8,280.5 654.5,278.0 654.4,281.1 653.2,280.0 652.2,279.8 651.1,280.1 650.7,278.7 649.2,279.2 648.1,278.7 647.8,277.7 646.0,277.2 648.2,275.7 646.8,274.9 648.6,274.1 649.4,273.6 648.3,272.3 648.5,271.3 649.6,271.0 651.7,272.6 651.0,269.3 652.5,271.4 653.2,271.7 654.2,269.8 654.5,271.6 654.7,272.5 656.8,271.0 657.9,271.3 657.3,272.7 658.9,273.0 657.5,274.2" fill="#6485d6" stroke="#1d46c8" stroke-width="0.8" fill-opacity="0.6"/>
<polyline points="665.3,266.4 668.3,259.4" fill="none" stroke="#1d46c8" stroke-width="0.9" />
<polygon points="670.7,259.4 672.8,260.5 670.9,260.7 671.6,262.2 670.8,263.1 669.2,262.4 668.3,262.2 667.7,261.4 666.0,262.8 665.2,262.1 664.4,261.3 663.5,260.5 665.2,259.4 665.1,258.7 665.6,258.1 666.5,257.8 665.9,255.9 667.4,256.4 668.3,257.7 668.9,257.5 670.4,256.3 671.3,256.9 670.6,258.3 672.7,258.4" fill="#6485d6" stroke="#1d46c8" stroke-width="0.7" fill-opacity="0.6"/>
<polyline points="643.3,293.7 632.8,286.7 620.0,276.4" fill="none" stroke="#1d46c8" stroke-width="1.1" />
<polygon points="629.7,276.4 628.8,277.8 626.8,278.6 626.5,279.8 625.3,280.4 622.7,279.3 624.6,283.6 622.8,283.2 621.2,282.5 620.0,283.7 618.9,282.2 616.3,285.5 615.6,283.3 613.4,283.5 613.0,281.7 614.1,279.5 613.5,278.6 612.9,277.6 614.3,276.4 610.6,274.9 611.6,273.7 614.7,273.6 614.6,272.3 615.4,271.5 616.0,270.1 617.5,270.3 618.3,267.8 620.0,268.1 620.8,272.6 622.5,270.3 625.3,268.2 622.9,273.3 624.2,273.2 624.2,274.2 627.5,274.0 628.2,275.1" fill="#6485d6" stroke="#1d46c8" stroke-width="0.8" fill-opacity="0.6"/>
<polygon points="638.9,283.7 639.4,284.8 637.1,285.1 636.2,285.4 636.4,286.4 636.4,287.6 635.1,287.3 634.1,286.9 633.9,289.4 632.8,289.2 631.8,288.9 631.0,288.1 629.5,288.9 630.4,286.3 629.1,286.5 629.6,285.4 626.9,285.6 629.9,284.2 625.7,283.7 627.1,282.8 628.2,282.2 627.5,281.0 628.4,280.4 630.6,281.4 631.2,281.1 630.8,278.7 631.9,279.0 632.8,279.7 633.8,278.5 634.0,280.8 635.1,280.2 635.9,280.4 636.9,280.6 638.4,280.8 639.3,281.6 636.3,283.2" fill="#6485d6" stroke="#1d46c8" stroke-width="0.8" fill-opacity="0.6"/>
<polyline points="620.0,276.4 617.0,269.4" fill="none" stroke="#1d46c8" stroke-width="0.9" />
<polygon points="619.7,269.4 620.8,270.3 620.8,271.3 618.8,271.0 618.5,271.7 618.3,273.6 617.0,272.9 615.8,273.3 615.7,271.4 614.0,272.0 613.7,271.1 614.2,270.1 614.2,269.4 614.9,268.9 614.2,268.0 614.1,266.9 615.1,266.6 615.9,265.9 617.0,265.7 617.9,266.5 619.0,266.5 619.1,267.7 620.4,267.8 619.0,269.0" fill="#6485d6" stroke="#1d46c8" stroke-width="0.7" fill-opacity="0.6"/>
<polyline points="643.3,302.6 652.9,295.6 664.7,281.8" fill="none" stroke="#1d46c8" stroke-width="1.1" />
<polygon points="668.9,281.8 673.3,283.2 672.1,284.3 673.7,286.5 669.6,285.5 669.6,287.1 668.3,287.5 667.2,288.1 666.2,289.6 664.7,287.7 663.0,290.1 661.7,289.1 661.8,286.3 660.5,286.3 658.1,286.8 659.9,284.3 655.4,284.9 654.6,283.4 659.6,281.8 659.1,280.9 659.4,280.1 657.0,277.8 660.5,278.6 659.3,276.0 662.1,277.7 663.1,277.8 663.2,274.0 664.7,272.9 665.7,276.7 668.3,272.8 669.5,274.4 669.0,277.2 671.3,276.8 672.7,277.7 672.6,279.2 670.8,280.9" fill="#6485d6" stroke="#1d46c8" stroke-width="0.8" fill-opacity="0.6"/>
<polygon points="657.4,292.6 658.8,293.5 658.3,294.3 659.4,296.0 656.5,295.3 657.4,297.4 655.3,296.3 655.6,299.1 653.8,297.2 652.9,298.5 652.1,296.6 650.5,298.6 649.3,298.2 650.4,295.3 647.7,296.5 648.9,294.7 645.6,295.0 649.0,293.2 649.3,292.6 648.6,291.9 647.8,290.9 648.4,290.2 649.9,290.3 649.9,289.3 651.1,289.7 651.5,288.9 652.3,289.5 652.9,286.9 653.6,289.3 654.2,289.3 655.0,289.4 655.1,290.2 655.5,290.6 659.6,289.1 657.8,291.0 657.1,291.9" fill="#6485d6" stroke="#1d46c8" stroke-width="0.8" fill-opacity="0.6"/>
<polyline points="664.7,281.8 667.7,274.8" fill="none" stroke="#1d46c8" stroke-width="0.9" />
<polygon points="669.6,274.8 671.2,275.6 671.9,276.9 670.7,277.4 669.5,277.5 668.8,278.3 667.7,278.7 666.5,278.6 666.2,277.0 665.6,276.6 665.0,276.2 665.3,275.4 664.1,274.8 665.2,274.3 663.3,272.6 666.2,273.5 665.6,271.8 666.7,271.8 667.7,271.5 668.7,271.4 669.3,272.5 669.7,273.1 671.1,273.1 671.9,273.9" fill="#6485d6" stroke="#1d46c8" stroke-width="0.7" fill-opacity="0.6"/>
<polyline points="643.3,311.4 633.9,304.4 622.3,291.7" fill="none" stroke="#1d46c8" stroke-width="1.1" />
<polygon points="629.8,291.7 628.9,292.7 628.6,293.7 627.4,294.3 626.0,294.4 626.4,296.1 625.5,296.5 624.0,295.8 623.2,296.3 622.3,297.2 621.0,298.2 620.0,297.3 619.4,296.2 618.6,295.6 618.1,294.9 616.4,294.7 617.2,293.3 615.9,292.7 615.1,291.7 617.3,290.9 616.3,289.7 617.5,289.2 618.3,288.6 617.0,285.9 619.7,287.6 619.9,285.7 621.6,288.2 622.3,288.1 623.2,287.5 623.5,288.8 625.3,287.0 626.5,287.2 626.8,288.3 629.2,288.1 628.2,289.7 628.9,290.6" fill="#6485d6" stroke="#1d46c8" stroke-width="0.8" fill-opacity="0.6"/>
<polygon points="636.8,301.4 637.2,302.0 637.0,302.5 637.0,303.1 636.2,303.2 635.1,302.8 635.6,304.1 635.0,304.2 634.2,303.2 633.9,305.0 633.2,305.0 632.7,304.4 631.3,305.4 632.0,303.4 630.2,304.2 631.8,302.5 630.9,302.4 630.9,301.9 630.1,301.4 629.6,300.8 631.7,300.7 629.7,299.3 631.4,299.6 630.8,298.1 631.8,298.3 632.4,297.7 633.3,298.4 633.9,297.8 634.7,297.3 635.1,298.4 635.2,299.4 637.0,298.1 635.8,300.0 637.3,299.6 636.8,300.5 636.6,301.0" fill="#6485d6" stroke="#1d46c8" stroke-width="0.8" fill-opacity="0.6"/>
<polyline points="643.3,320.3 652.2,313.3 663.2,299.6" fill="none" stroke="#1d46c8" stroke-width="1.1" />
<polygon points="670.6,299.6 670.2,300.7 670.7,302.0 668.0,302.0 667.3,302.7 668.2,304.9 666.7,305.0 665.3,304.7 664.0,303.7 663.2,305.8 662.3,304.1 662.1,302.1 660.3,304.1 659.7,303.3 659.9,302.0 658.7,301.9 655.8,302.0 658.6,300.3 658.7,299.6 658.7,298.9 658.5,298.0 658.6,297.2 658.7,296.2 658.3,294.3 660.0,294.6 661.2,294.6 661.7,292.1 663.2,296.1 664.6,292.5 665.3,294.4 665.1,296.6 666.0,296.5 669.0,295.1 668.4,296.9 668.3,297.9 671.0,298.3" fill="#6485d6" stroke="#1d46c8" stroke-width="0.8" fill-opacity="0.6"/>
<polygon points="656.0,310.3 657.3,311.1 656.0,311.5 654.2,311.3 654.5,312.0 654.2,312.4 654.8,314.3 653.4,313.0 652.8,313.1 652.2,313.6 651.8,312.7 650.6,314.4 651.1,312.1 650.0,312.7 648.7,313.0 649.2,311.9 648.7,311.5 648.1,310.9 649.9,310.3 649.3,309.8 648.5,309.1 649.3,308.7 649.5,308.2 649.6,307.4 649.7,306.4 651.0,307.2 651.7,307.5 652.2,306.8 652.8,307.7 653.5,307.1 653.5,308.3 655.2,307.1 655.3,307.9 654.2,309.3 655.0,309.4 656.5,309.6" fill="#6485d6" stroke="#1d46c8" stroke-width="0.8" fill-opacity="0.6"/>
<polyline points="663.2,299.6 666.2,292.6" fill="none" stroke="#1d46c8" stroke-width="0.9" />
<polygon points="669.7,292.6 670.2,293.5 669.6,294.2 668.2,294.3 668.2,295.6 667.0,295.3 666.2,295.2 665.1,296.1 664.1,295.6 664.3,294.2 663.8,293.8 663.4,293.2 663.8,292.6 661.9,291.6 662.7,290.9 663.6,290.4 664.5,290.1 665.4,290.1 666.2,289.2 667.1,289.7 667.7,290.3 669.0,290.1 668.6,291.4 668.5,292.0" fill="#6485d6" stroke="#1d46c8" stroke-width="0.7" fill-opacity="0.6"/>
<polyline points="643.3,329.1 632.6,322.1 619.5,311.0" fill="none" stroke="#1d46c8" stroke-width="1.1" />
<polygon points="624.8,311.0 623.7,311.6 625.5,312.9 623.9,313.3 624.3,314.6 621.8,313.5 623.2,316.7 621.1,315.0 620.2,314.4 619.5,316.8 618.7,315.1 617.6,315.5 617.7,313.6 616.1,314.6 613.9,315.2 614.7,313.4 615.0,312.4 613.5,311.9 614.4,311.0 613.9,310.1 613.1,308.9 615.6,308.9 616.4,308.7 615.7,306.9 616.8,306.9 617.3,305.7 618.9,308.0 619.5,304.7 620.6,305.0 621.5,305.9 622.6,306.1 623.5,306.6 623.6,307.8 626.0,307.6 625.5,309.0 623.5,310.3" fill="#6485d6" stroke="#1d46c8" stroke-width="0.8" fill-opacity="0.6"/>
<polygon points="635.6,319.1 636.4,319.8 637.5,320.7 636.3,321.1 636.5,322.1 634.9,321.7 634.3,321.9 633.9,322.5 633.3,323.1 632.6,322.4 631.7,323.8 631.6,321.5 631.5,320.9 629.8,322.2 628.4,322.3 629.5,320.8 629.6,320.1 628.4,319.8 629.0,319.1 627.6,318.3 628.0,317.7 628.4,317.0 629.4,316.8 630.1,316.5 630.1,315.3 630.7,314.5 631.8,315.0 632.6,315.8 633.1,316.7 634.1,315.4 634.3,316.5 635.5,316.0 635.5,317.0 636.3,317.2 637.9,317.4 638.7,318.2" fill="#6485d6" stroke="#1d46c8" stroke-width="0.8" fill-opacity="0.6"/>
<polyline points="619.5,311.0 616.5,304.0" fill="none" stroke="#1d46c8" stroke-width="0.9" />
<polygon points="620.2,304.0 619.8,304.7 619.1,305.2 618.6,305.8 617.7,305.9 617.6,307.7 616.5,306.0 615.8,306.0 615.0,306.1 614.0,306.0 612.8,305.8 614.3,304.5 614.3,304.0 612.4,303.0 612.7,302.1 613.4,301.3 615.0,301.8 615.8,301.9 616.5,301.5 617.5,300.6 617.7,302.2 618.4,302.3 619.7,302.4 619.3,303.3" fill="#6485d6" stroke="#1d46c8" stroke-width="0.7" fill-opacity="0.6"/>
<path d="M643.3,201.3A3.6,3.6 0 0,1 646.6,205.6A2.3,2.3 0 0,1 649.9,207.9A3.3,3.3 0 0,1 653.7,211.1A2.6,2.6 0 0,1 657.1,213.5A2.4,2.4 0 0,1 659.8,216.1A2.9,2.9 0 0,1 664.1,218.9A2.5,2.5 0 0,1 667.8,221.6A2.0,2.0 0 0,1 670.1,224.7A4.7,4.7 0 0,1 665.9,230.3A2.0,2.0 0 0,1 666.9,233.5A3.4,3.4 0 0,1 667.0,238.4A3.1,3.1 0 0,1 664.3,243.0A4.1,4.1 0 0,1 669.5,247.1A2.0,2.0 0 0,1 670.4,250.6A2.5,2.5 0 0,1 668.6,254.9A2.7,2.7 0 0,1 665.6,257.3A2.8,2.8 0 0,1 666.3,261.7A3.4,3.4 0 0,1 664.1,266.2A2.8,2.8 0 0,1 661.3,269.7A3.3,3.3 0 0,1 660.1,275.1A3.8,3.8 0 0,1 654.7,277.6A4.0,4.0 0 0,1 649.4,274.9A3.7,3.7 0 0,1 644.0,277.7A3.4,3.4 0 0,1 638.5,279.3A1.9,1.9 0 0,1 636.0,277.0A3.4,3.4 0 0,1 629.8,278.0A3.0,3.0 0 0,1 627.0,274.3A3.4,3.4 0 0,1 622.8,270.8A2.4,2.4 0 0,1 622.5,266.9A2.5,2.5 0 0,1 621.4,263.4A3.1,3.1 0 0,1 619.7,259.1A3.6,3.6 0 0,1 621.8,254.4A2.7,2.7 0 0,1 621.6,249.3A3.0,3.0 0 0,1 617.7,247.1A2.2,2.2 0 0,1 618.2,244.0A2.4,2.4 0 0,1 618.9,239.5A2.6,2.6 0 0,1 620.3,235.6A3.0,3.0 0 0,1 619.1,230.3A3.2,3.2 0 0,1 621.5,226.1A2.8,2.8 0 0,1 622.6,222.1A3.6,3.6 0 0,1 622.2,217.0A3.1,3.1 0 0,1 626.2,213.6A2.7,2.7 0 0,1 629.6,211.6A2.2,2.2 0 0,1 633.4,210.3A2.6,2.6 0 0,1 635.8,207.1A2.5,2.5 0 0,1 640.1,205.6A2.1,2.1 0 0,1 642.4,203.3A1.4,1.4 0 0,1 643.3,201.3Z" fill="#6586d8" fill-opacity="0.86" stroke="#123cc0" stroke-width="1"/>
<polygon points="643.3,211.0 644.1,212.5 645.0,214.0 645.9,215.5 646.8,217.0 647.8,218.5 648.7,220.0 649.7,221.5 650.7,223.0 651.6,224.5 652.5,226.0 653.4,227.5 654.3,229.0 655.2,230.5 656.0,232.0 656.8,233.5 657.6,235.0 658.3,236.5 658.9,238.0 659.6,239.5 660.1,241.0 660.7,242.5 661.1,244.0 661.5,245.5 661.9,247.0 662.2,248.5 662.5,250.0 662.6,251.5 662.8,253.0 662.8,254.5 662.9,256.0 662.9,257.5 662.9,259.0 662.6,260.5 661.8,262.0 660.5,263.5 658.7,265.0 656.4,266.5 653.5,268.0 650.1,269.5 646.2,271.0 640.4,271.0 636.5,269.5 633.1,268.0 630.2,266.5 627.9,265.0 626.1,263.5 624.8,262.0 624.0,260.5 623.7,259.0 623.7,257.5 623.7,256.0 623.8,254.5 623.8,253.0 624.0,251.5 624.1,250.0 624.4,248.5 624.7,247.0 625.1,245.5 625.5,244.0 625.9,242.5 626.5,241.0 627.0,239.5 627.7,238.0 628.3,236.5 629.0,235.0 629.8,233.5 630.6,232.0 631.4,230.5 632.3,229.0 633.2,227.5 634.1,226.0 635.0,224.5 635.9,223.0 636.9,221.5 637.9,220.0 638.8,218.5 639.8,217.0 640.7,215.5 641.6,214.0 642.5,212.5 643.3,211.0" fill="#4a6ed0" stroke="#2f58c8" stroke-width="0.6" fill-opacity="0.45" stroke-opacity="0.6"/>
<polyline points="643.3,205.0 643.3,265.8" fill="none" stroke="#3c62cc" stroke-width="0.7" />
<polyline points="589.5,347.1 589.5,479.0" fill="none" stroke="#1539b9" stroke-width="2.0" />
<polyline points="589.5,361.5 595.3,354.5 602.5,345.0" fill="none" stroke="#1d46c8" stroke-width="1.1" />
<polygon points="607.2,345.0 607.8,345.9 607.6,346.7 607.6,347.7 606.3,347.9 604.5,347.1 605.2,349.3 604.3,349.5 603.1,347.9 602.5,350.8 601.4,350.8 600.6,349.8 598.4,351.4 599.6,348.1 596.6,349.5 599.1,346.8 597.8,346.6 597.8,345.8 596.4,345.0 595.7,343.9 599.0,343.9 595.9,341.6 598.6,342.1 597.5,339.7 599.2,340.0 600.1,339.1 601.5,340.2 602.5,339.2 603.8,338.5 604.5,340.2 604.6,341.8 607.5,339.6 605.6,342.7 608.0,342.1 607.1,343.5 606.8,344.3" fill="#6485d6" stroke="#1d46c8" stroke-width="0.8" fill-opacity="0.6"/>
<polygon points="600.4,351.5 598.4,352.0 600.3,353.1 600.4,354.1 598.7,354.1 598.3,354.7 598.1,355.9 596.9,355.2 596.0,354.7 595.3,356.9 594.7,355.0 594.5,353.7 594.0,353.5 592.1,354.9 591.3,354.6 592.6,352.9 589.9,353.3 593.0,351.9 592.1,351.5 589.3,350.5 591.7,350.3 592.3,349.9 591.3,348.5 593.6,349.7 593.1,348.0 593.4,346.6 594.8,348.6 595.3,346.4 595.9,348.7 597.2,346.9 597.7,347.8 597.2,349.5 598.4,349.2 597.9,350.2 598.7,350.4 600.6,350.7" fill="#6485d6" stroke="#1d46c8" stroke-width="0.8" fill-opacity="0.6"/>
<polyline points="602.5,345.0 605.5,338.0" fill="none" stroke="#1d46c8" stroke-width="0.9" />
<polygon points="610.1,338.0 608.1,338.6 609.5,340.0 608.2,340.3 608.0,341.8 606.6,341.6 605.5,340.5 604.3,342.0 603.2,341.4 603.2,340.0 602.3,339.6 602.7,338.7 602.5,338.0 602.6,337.4 601.3,336.0 602.7,335.6 604.2,336.1 604.5,334.9 605.5,335.2 606.1,336.0 606.8,336.1 608.5,335.5 609.4,336.1 609.4,337.1" fill="#6485d6" stroke="#1d46c8" stroke-width="0.7" fill-opacity="0.6"/>
<polyline points="589.5,370.4 578.7,363.4 565.4,352.9" fill="none" stroke="#1d46c8" stroke-width="1.1" />
<polygon points="572.7,352.9 575.3,354.4 572.8,355.3 569.4,354.9 569.9,356.2 569.3,357.1 570.5,360.7 567.6,358.3 566.5,358.3 565.4,359.4 564.5,357.6 562.1,361.0 563.2,356.3 561.0,357.7 558.4,358.2 559.5,356.0 558.4,355.2 557.4,354.2 560.7,352.9 559.7,352.0 558.2,350.5 559.6,349.8 560.0,348.7 560.2,347.2 560.5,345.1 563.0,346.7 564.4,347.4 565.4,346.1 566.5,347.7 568.0,346.6 567.9,349.1 571.3,346.6 571.5,348.3 569.2,350.9 570.9,351.1 573.8,351.5" fill="#6485d6" stroke="#1d46c8" stroke-width="0.8" fill-opacity="0.6"/>
<polygon points="582.2,360.4 583.4,361.1 584.2,362.2 584.8,363.5 583.9,364.3 582.7,364.7 582.0,365.6 580.8,365.7 579.5,364.8 578.7,366.1 577.9,364.2 576.9,364.7 575.0,366.1 575.2,364.1 575.1,363.0 575.2,362.1 574.2,361.8 572.1,361.4 575.2,360.4 575.2,359.8 573.4,358.6 575.2,358.6 574.0,356.9 574.7,356.1 576.0,356.2 576.6,355.2 577.9,356.6 578.7,356.5 579.9,354.3 580.3,356.4 582.1,355.0 582.9,355.8 583.7,356.6 583.6,357.8 583.3,358.8 583.9,359.5" fill="#6485d6" stroke="#1d46c8" stroke-width="0.8" fill-opacity="0.6"/>
<polyline points="565.4,352.9 562.4,345.9" fill="none" stroke="#1d46c8" stroke-width="0.9" />
<polygon points="564.9,345.9 565.4,346.6 565.4,347.3 564.8,347.9 564.1,348.3 563.4,348.9 562.4,349.5 561.4,349.3 560.9,348.2 559.5,348.4 559.2,347.5 559.7,346.5 559.4,345.9 560.2,345.3 559.4,344.4 559.9,343.7 560.3,342.7 561.7,343.4 562.4,343.1 563.1,343.7 564.9,342.2 565.4,343.3 566.2,344.0 567.0,344.8" fill="#6485d6" stroke="#1d46c8" stroke-width="0.7" fill-opacity="0.6"/>
<polyline points="589.5,379.2 597.9,372.2 608.1,365.2" fill="none" stroke="#1d46c8" stroke-width="1.1" />
<polygon points="613.3,365.2 614.9,366.3 616.7,368.0 614.6,368.6 615.0,370.4 612.2,369.7 611.2,370.0 610.5,371.2 609.4,372.1 608.1,370.9 606.5,373.4 606.4,369.4 606.1,368.3 603.1,370.5 600.7,370.7 602.6,368.0 602.9,366.9 600.6,366.4 601.7,365.2 599.2,363.8 600.1,362.6 600.7,361.4 602.5,361.0 603.7,360.5 603.8,358.5 604.8,357.0 606.6,358.0 608.1,359.4 608.9,360.9 610.7,358.6 611.0,360.6 613.2,359.7 613.1,361.4 614.6,361.8 617.4,362.1 618.8,363.5" fill="#6485d6" stroke="#1d46c8" stroke-width="0.8" fill-opacity="0.6"/>
<polygon points="602.9,369.2 600.3,369.6 601.0,370.2 600.0,370.3 601.8,372.2 599.3,370.8 599.6,371.9 598.7,371.4 598.3,371.7 597.9,373.4 597.3,371.9 597.1,371.1 596.0,372.1 594.8,372.5 594.9,371.4 594.0,371.2 594.6,370.3 594.2,369.8 592.9,369.2 594.2,368.6 594.6,368.1 594.0,367.2 594.3,366.6 596.1,367.4 596.8,367.6 596.9,366.8 597.1,365.5 597.9,366.0 598.5,365.8 599.3,365.6 599.6,366.6 599.4,367.6 601.6,366.4 600.1,368.0 602.0,367.8 601.0,368.7" fill="#6485d6" stroke="#1d46c8" stroke-width="0.8" fill-opacity="0.6"/>
<polyline points="608.1,365.2 611.1,358.2" fill="none" stroke="#1d46c8" stroke-width="0.9" />
<polygon points="614.8,358.2 615.8,359.3 614.7,360.0 613.6,360.4 612.9,360.9 611.7,360.2 611.1,360.4 610.1,361.1 609.7,360.2 608.0,360.8 606.9,360.3 608.2,358.9 608.4,358.2 607.4,357.3 608.2,356.8 608.4,355.9 609.6,356.1 610.2,355.4 611.1,354.9 611.7,356.2 612.9,355.5 613.0,356.5 614.1,356.7 615.4,357.2" fill="#6485d6" stroke="#1d46c8" stroke-width="0.7" fill-opacity="0.6"/>
<polyline points="589.5,388.1 583.0,381.1 575.2,369.2" fill="none" stroke="#1d46c8" stroke-width="1.1" />
<polygon points="581.9,369.2 581.2,370.2 581.0,371.2 579.4,371.5 580.4,373.2 579.8,374.3 577.9,373.6 577.1,374.2 576.5,376.2 575.2,375.0 573.9,375.4 573.6,373.1 572.2,373.9 571.3,373.4 570.7,372.6 572.1,370.8 568.4,371.5 570.7,369.9 571.4,369.2 569.7,368.4 571.1,367.9 569.2,366.2 570.5,365.7 571.0,364.8 571.5,363.5 572.6,363.0 573.9,362.6 575.2,364.8 576.6,362.0 577.5,363.4 578.0,364.8 579.3,364.8 581.2,364.7 581.6,365.9 582.3,366.9 582.5,368.1" fill="#6485d6" stroke="#1d46c8" stroke-width="0.8" fill-opacity="0.6"/>
<polygon points="585.8,378.1 587.7,378.8 585.3,378.8 586.7,380.0 587.1,381.1 585.4,380.6 584.9,380.9 584.8,382.4 584.0,383.2 583.0,380.7 582.0,383.2 580.9,383.4 580.4,382.1 580.4,380.9 579.6,380.7 580.3,379.5 580.5,378.9 579.5,378.6 578.8,378.1 577.2,377.1 579.8,377.0 577.8,375.3 578.3,374.5 580.7,375.5 580.3,373.8 580.8,372.6 582.1,373.4 583.0,375.6 583.7,374.9 584.7,374.0 585.2,374.8 586.1,374.8 586.8,375.2 585.7,376.7 586.4,377.0 586.8,377.5" fill="#6485d6" stroke="#1d46c8" stroke-width="0.8" fill-opacity="0.6"/>
<polyline points="575.2,369.2 572.2,362.2" fill="none" stroke="#1d46c8" stroke-width="0.9" />
<polygon points="575.6,362.2 574.9,362.9 574.6,363.5 575.3,364.9 574.0,365.0 573.3,365.9 572.2,364.4 571.6,364.1 570.1,365.2 569.5,364.5 570.2,363.2 570.2,362.7 569.8,362.2 567.8,361.3 570.0,361.2 570.5,360.8 570.7,360.0 571.0,358.5 572.2,360.0 572.9,360.0 574.5,358.7 574.6,360.2 574.8,361.0 576.7,361.2" fill="#6485d6" stroke="#1d46c8" stroke-width="0.7" fill-opacity="0.6"/>
<polyline points="589.5,396.9 600.2,389.9 613.3,376.1" fill="none" stroke="#1d46c8" stroke-width="1.1" />
<polygon points="619.9,376.1 618.0,376.8 621.2,378.7 619.1,379.1 618.9,380.4 617.4,380.4 617.1,382.0 615.8,382.2 614.6,382.6 613.3,380.3 612.6,379.9 610.9,382.0 609.2,382.4 610.1,379.6 610.1,378.5 610.0,377.8 608.2,377.8 607.4,377.0 605.8,376.1 607.3,375.1 606.0,373.7 608.3,373.5 607.8,371.9 608.2,370.6 609.3,369.9 611.5,371.6 612.2,370.6 613.3,369.7 614.0,372.4 614.9,372.1 616.4,371.2 617.6,371.5 616.6,373.6 618.1,373.6 617.4,374.7 619.6,375.1" fill="#6485d6" stroke="#1d46c8" stroke-width="0.8" fill-opacity="0.6"/>
<polygon points="605.5,386.9 606.5,387.9 605.6,388.7 603.9,388.8 605.9,391.2 603.7,390.6 601.9,389.6 602.2,391.8 601.0,391.1 600.2,393.3 599.7,389.6 597.9,392.6 597.0,391.9 597.1,390.2 596.0,390.1 595.5,389.4 593.2,389.2 596.8,387.5 596.3,386.9 596.2,386.3 595.5,385.4 595.9,384.7 596.4,384.1 596.1,382.5 598.2,383.8 598.8,383.4 599.0,380.9 600.2,382.4 601.2,381.7 601.7,383.3 602.5,383.4 603.4,383.5 603.4,384.6 603.4,385.3 604.2,385.6 605.4,386.1" fill="#6485d6" stroke="#1d46c8" stroke-width="0.8" fill-opacity="0.6"/>
<polyline points="589.5,405.8 579.7,398.8 567.7,385.0" fill="none" stroke="#1d46c8" stroke-width="1.1" />
<polygon points="573.0,385.0 575.4,386.2 572.1,386.4 574.7,388.6 570.0,386.7 570.6,388.0 569.8,388.1 569.5,389.3 569.0,391.2 567.7,391.6 566.7,390.4 565.4,390.9 564.3,390.3 562.6,390.5 564.6,387.3 562.7,387.6 561.1,387.1 561.3,386.0 563.3,385.0 563.1,384.2 563.7,383.6 563.0,382.5 562.5,381.0 563.0,379.9 564.8,380.4 566.1,380.9 567.1,381.5 567.7,379.6 568.5,381.0 569.5,380.6 569.9,381.6 572.3,380.1 570.6,382.8 573.8,381.8 574.2,382.8 572.7,384.2" fill="#6485d6" stroke="#1d46c8" stroke-width="0.8" fill-opacity="0.6"/>
<polygon points="583.8,395.8 584.8,396.6 583.1,396.9 583.7,397.8 584.2,399.1 583.2,399.6 581.4,398.5 580.6,397.9 580.3,398.6 579.7,398.7 578.8,400.2 578.1,399.8 578.0,398.4 577.7,398.0 576.1,398.5 574.9,398.3 574.4,397.5 577.0,396.2 575.6,395.8 576.4,395.3 575.9,394.5 575.8,393.8 576.4,393.3 576.2,392.0 577.8,392.8 578.6,392.9 579.0,392.4 579.7,392.2 580.7,391.0 581.7,390.8 581.9,392.3 581.8,393.6 581.5,394.4 584.0,393.6 584.3,394.3 584.7,395.0" fill="#6485d6" stroke="#1d46c8" stroke-width="0.8" fill-opacity="0.6"/>
<polyline points="567.7,385.0 564.7,378.0" fill="none" stroke="#1d46c8" stroke-width="0.9" />
<polygon points="568.9,378.0 569.1,379.0 567.5,379.4 566.9,379.8 566.6,380.8 565.4,379.9 564.7,380.1 563.7,381.1 563.0,380.6 562.1,380.3 561.4,379.6 561.9,378.6 562.5,378.0 562.7,377.5 562.6,376.9 561.6,375.3 562.7,374.9 564.0,375.5 564.7,374.1 565.5,375.7 567.0,374.6 567.5,375.6 568.2,376.3 568.8,377.0" fill="#6485d6" stroke="#1d46c8" stroke-width="0.7" fill-opacity="0.6"/>
<polyline points="589.5,414.6 596.8,407.6 605.8,399.3" fill="none" stroke="#1d46c8" stroke-width="1.1" />
<polygon points="612.2,399.3 611.7,400.2 612.1,401.4 609.8,401.4 608.8,401.6 608.9,402.7 608.0,402.7 608.3,405.5 606.6,403.5 605.8,403.6 604.8,404.4 604.2,403.2 603.3,403.2 603.1,402.2 600.1,403.6 600.0,402.3 599.8,401.3 602.1,399.9 600.3,399.3 599.2,398.3 601.5,397.9 599.1,395.8 601.4,396.0 602.6,395.9 603.4,395.5 603.5,393.5 604.9,394.6 605.8,395.6 606.5,395.6 607.0,396.4 608.4,395.3 608.5,396.4 610.6,395.7 610.6,396.8 611.2,397.5 613.2,398.1" fill="#6485d6" stroke="#1d46c8" stroke-width="0.8" fill-opacity="0.6"/>
<polygon points="602.5,404.6 601.8,405.4 601.6,406.2 601.9,407.3 602.7,409.1 599.2,407.2 600.6,410.6 598.8,409.6 598.0,410.8 596.8,407.6 596.1,408.3 595.8,407.2 595.0,407.5 592.1,409.7 593.6,407.1 590.7,407.8 590.7,406.7 592.6,405.3 593.4,404.6 591.4,403.8 591.7,403.0 593.1,402.7 591.8,400.9 594.1,401.7 593.8,399.9 595.7,402.0 596.1,401.0 596.8,401.3 597.7,400.0 599.1,399.1 598.8,401.6 601.3,399.9 601.9,400.8 603.1,401.4 601.2,403.2 602.3,403.8" fill="#6485d6" stroke="#1d46c8" stroke-width="0.8" fill-opacity="0.6"/>
<path d="M589.5,286.1A3.0,3.0 0 0,1 593.6,289.1A2.2,2.2 0 0,1 596.2,291.0A2.8,2.8 0 0,1 598.7,294.1A2.2,2.2 0 0,1 601.9,295.6A2.7,2.7 0 0,1 604.3,299.6A3.7,3.7 0 0,1 609.1,301.6A3.0,3.0 0 0,1 613.2,303.7A2.3,2.3 0 0,1 614.5,306.7A2.9,2.9 0 0,1 613.4,311.0A1.9,1.9 0 0,1 614.1,314.5A2.5,2.5 0 0,1 612.9,318.3A2.1,2.1 0 0,1 612.0,321.8A2.3,2.3 0 0,1 613.7,325.5A2.2,2.2 0 0,1 615.1,328.6A2.2,2.2 0 0,1 615.7,332.2A2.5,2.5 0 0,1 613.6,335.9A2.9,2.9 0 0,1 613.4,340.6A2.9,2.9 0 0,1 613.0,345.6A2.3,2.3 0 0,1 610.0,348.8A2.4,2.4 0 0,1 610.9,353.1A2.8,2.8 0 0,1 609.6,357.1A2.7,2.7 0 0,1 606.2,359.5A2.2,2.2 0 0,1 603.0,362.3A3.9,3.9 0 0,1 597.5,361.4A3.3,3.3 0 0,1 592.2,363.6A4.7,4.7 0 0,1 584.6,362.5A3.6,3.6 0 0,1 579.8,359.8A2.8,2.8 0 0,1 576.0,361.6A2.5,2.5 0 0,1 572.8,359.0A3.1,3.1 0 0,1 570.8,354.3A2.7,2.7 0 0,1 569.7,350.0A2.5,2.5 0 0,1 566.6,346.7A3.9,3.9 0 0,1 562.9,342.6A2.2,2.2 0 0,1 562.8,338.7A3.5,3.5 0 0,1 566.8,335.2A2.6,2.6 0 0,1 566.4,331.2A2.2,2.2 0 0,1 565.7,327.6A2.6,2.6 0 0,1 565.8,323.4A2.3,2.3 0 0,1 567.1,319.9A2.0,2.0 0 0,1 566.0,317.0A3.3,3.3 0 0,1 562.4,313.5A2.2,2.2 0 0,1 562.1,309.6A2.4,2.4 0 0,1 565.5,307.2A4.3,4.3 0 0,1 570.3,303.4A2.6,2.6 0 0,1 572.6,299.6A2.6,2.6 0 0,1 575.9,296.9A2.0,2.0 0 0,1 578.6,295.0A3.3,3.3 0 0,1 581.5,291.3A2.4,2.4 0 0,1 584.7,288.8A3.1,3.1 0 0,1 588.5,286.3A0.7,0.7 0 0,1 589.5,286.1Z" fill="#6586d8" fill-opacity="0.86" stroke="#123cc0" stroke-width="1"/>
<polygon points="589.5,294.7 590.3,296.3 591.2,297.8 592.1,299.4 593.0,300.9 594.0,302.4 594.9,304.0 595.9,305.5 596.9,307.1 597.8,308.6 598.7,310.1 599.6,311.7 600.5,313.2 601.4,314.8 602.2,316.3 603.0,317.8 603.8,319.4 604.5,320.9 605.1,322.5 605.8,324.0 606.3,325.5 606.9,327.1 607.3,328.6 607.7,330.2 608.1,331.7 608.4,333.2 608.7,334.8 608.8,336.3 609.0,337.9 609.0,339.4 609.1,340.9 609.1,342.5 609.1,344.0 608.8,345.6 608.0,347.1 606.7,348.6 604.9,350.2 602.6,351.7 599.7,353.3 596.3,354.8 592.4,356.3 586.6,356.3 582.7,354.8 579.3,353.3 576.4,351.7 574.1,350.2 572.3,348.6 571.0,347.1 570.2,345.6 569.9,344.0 569.9,342.5 569.9,340.9 570.0,339.4 570.0,337.9 570.2,336.3 570.3,334.8 570.6,333.2 570.9,331.7 571.3,330.2 571.7,328.6 572.1,327.1 572.7,325.5 573.2,324.0 573.9,322.5 574.5,320.9 575.2,319.4 576.0,317.8 576.8,316.3 577.6,314.8 578.5,313.2 579.4,311.7 580.3,310.1 581.2,308.6 582.1,307.1 583.1,305.5 584.1,304.0 585.0,302.4 586.0,300.9 586.9,299.4 587.8,297.8 588.7,296.3 589.5,294.7" fill="#4a6ed0" stroke="#2f58c8" stroke-width="0.6" fill-opacity="0.45" stroke-opacity="0.6"/>
<polyline points="589.5,288.5 589.5,350.9" fill="none" stroke="#3c62cc" stroke-width="0.7" />
<polyline points="635.0,420.4 635.0,556.0" fill="none" stroke="#1539b9" stroke-width="2.0" />
<polyline points="635.0,434.0 627.8,427.0 619.1,417.0" fill="none" stroke="#1d46c8" stroke-width="1.1" />
<polygon points="625.9,417.0 627.1,418.3 625.9,419.2 623.8,419.4 626.3,422.4 623.5,421.7 621.3,420.4 621.6,423.2 620.1,422.3 619.1,425.1 618.4,420.3 616.2,424.2 615.0,423.4 615.2,421.2 613.8,421.0 613.1,420.1 610.2,419.9 614.8,417.7 614.1,417.0 614.0,416.2 613.0,415.0 613.6,414.2 614.2,413.3 613.9,411.4 616.5,413.0 617.3,412.5 617.6,409.4 619.1,411.2 620.4,410.3 620.9,412.4 622.0,412.4 623.2,412.6 623.1,414.0 623.2,414.9 624.2,415.3 625.7,415.9" fill="#6485d6" stroke="#1d46c8" stroke-width="0.8" fill-opacity="0.6"/>
<polygon points="631.5,424.0 630.9,424.5 631.6,425.2 631.2,425.7 630.3,425.9 631.1,427.5 630.4,428.0 629.3,427.7 628.5,427.2 627.8,426.9 627.0,428.2 626.1,428.2 625.3,427.9 624.1,428.0 624.6,426.5 624.8,425.6 625.2,424.9 624.0,424.6 621.6,424.0 624.3,423.4 622.1,422.1 624.6,422.3 625.5,422.2 626.1,422.1 626.0,421.1 626.4,420.4 626.9,419.1 627.8,418.8 628.4,421.2 629.2,420.5 630.5,419.8 632.0,419.6 631.6,421.2 632.6,421.5 633.1,422.3 633.0,423.2" fill="#6485d6" stroke="#1d46c8" stroke-width="0.8" fill-opacity="0.6"/>
<polyline points="619.1,417.0 616.1,410.0" fill="none" stroke="#1d46c8" stroke-width="0.9" />
<polygon points="620.6,410.0 619.7,410.8 618.6,411.2 617.7,411.4 617.0,411.4 616.8,412.4 616.1,413.0 615.6,411.6 614.4,412.5 613.7,412.1 613.6,411.2 612.8,410.7 612.7,410.0 612.5,409.2 614.2,409.0 614.5,408.6 614.9,408.2 614.9,406.2 616.1,406.6 616.9,407.5 617.4,408.1 618.4,408.0 620.0,408.0 619.5,409.2" fill="#6485d6" stroke="#1d46c8" stroke-width="0.7" fill-opacity="0.6"/>
<polyline points="635.0,442.9 643.5,435.9 653.8,425.7" fill="none" stroke="#1d46c8" stroke-width="1.1" />
<polygon points="659.4,425.7 660.7,426.8 658.4,427.2 659.2,428.5 659.9,430.3 658.6,430.8 656.2,429.3 655.0,428.6 654.6,429.5 653.8,429.7 652.7,431.7 651.6,431.2 651.5,429.3 651.1,428.7 649.0,429.4 647.3,429.1 646.6,428.1 650.1,426.3 648.2,425.7 649.3,425.0 648.6,424.0 648.5,423.0 649.4,422.4 649.1,420.6 651.2,421.6 652.3,421.9 652.9,421.1 653.8,420.8 655.1,419.2 656.6,418.9 656.8,421.0 656.6,422.7 656.3,423.9 659.7,422.7 660.0,423.7 660.6,424.6" fill="#6485d6" stroke="#1d46c8" stroke-width="0.8" fill-opacity="0.6"/>
<polygon points="647.2,432.9 648.8,433.7 647.8,434.3 645.3,433.8 645.5,434.4 645.8,435.4 645.4,435.9 644.3,434.9 644.1,436.2 643.5,436.7 642.6,437.4 642.0,436.4 640.9,436.8 641.3,435.2 639.5,435.9 639.8,434.8 641.1,433.6 639.1,433.5 638.5,432.9 638.3,432.0 640.0,431.7 641.4,431.8 641.1,431.1 642.0,431.2 642.2,430.8 642.1,429.4 642.8,429.3 643.5,428.9 644.3,428.8 644.4,430.5 645.7,429.4 646.8,429.3 646.9,430.2 647.1,431.0 646.3,431.9 648.6,432.0" fill="#6485d6" stroke="#1d46c8" stroke-width="0.8" fill-opacity="0.6"/>
<polyline points="653.8,425.7 656.8,418.7" fill="none" stroke="#1d46c8" stroke-width="0.9" />
<polygon points="661.1,418.7 661.3,419.7 660.1,420.3 660.0,421.4 659.2,422.3 657.5,421.0 656.8,422.9 655.5,422.9 654.7,421.9 654.8,420.4 654.9,419.7 652.4,419.7 653.1,418.7 652.6,417.7 653.9,417.2 654.3,416.6 655.2,416.3 656.0,416.0 656.8,416.4 657.7,416.1 658.6,416.1 659.8,416.1 659.9,417.2 660.2,417.9" fill="#6485d6" stroke="#1d46c8" stroke-width="0.7" fill-opacity="0.6"/>
<polyline points="635.0,451.7 624.7,444.7 612.1,438.5" fill="none" stroke="#1d46c8" stroke-width="1.1" />
<polygon points="618.5,438.5 617.7,439.4 617.5,440.3 617.8,441.5 618.7,443.5 614.8,441.4 616.4,445.3 614.3,444.1 613.4,445.4 612.1,441.9 611.3,442.7 610.9,441.4 610.0,441.8 606.8,444.2 608.4,441.3 605.1,442.1 605.1,440.8 607.3,439.3 608.2,438.5 606.0,437.5 606.3,436.6 607.8,436.3 606.4,434.2 609.0,435.2 608.6,433.1 610.9,435.5 611.3,434.4 612.1,434.7 613.1,433.3 614.6,432.2 614.3,435.1 617.1,433.1 617.8,434.2 619.2,434.8 617.0,436.9 618.2,437.5" fill="#6485d6" stroke="#1d46c8" stroke-width="0.8" fill-opacity="0.6"/>
<polygon points="627.6,441.7 630.4,442.6 628.2,442.9 629.7,444.3 629.5,445.3 627.5,444.8 626.7,444.9 625.7,444.3 625.7,446.8 624.7,446.7 623.7,446.6 622.6,446.9 622.8,444.7 622.1,444.5 621.7,443.9 621.9,443.2 619.1,443.5 620.2,442.4 622.2,441.7 621.8,441.3 619.8,440.1 620.2,439.4 622.2,439.8 621.1,437.9 622.0,437.6 623.6,438.9 624.1,438.6 624.7,437.9 625.7,436.8 626.5,437.3 626.6,438.7 627.5,438.7 627.3,439.8 628.8,439.6 629.7,440.1 629.3,441.0" fill="#6485d6" stroke="#1d46c8" stroke-width="0.8" fill-opacity="0.6"/>
<polyline points="612.1,438.5 609.1,431.5" fill="none" stroke="#1d46c8" stroke-width="0.9" />
<polygon points="612.2,431.5 613.5,432.5 613.1,433.5 611.4,433.5 610.9,434.3 609.6,433.2 609.1,434.7 608.2,434.2 607.8,433.5 606.7,433.5 607.1,432.5 605.1,432.4 604.3,431.5 605.8,430.8 606.4,430.2 606.8,429.5 607.5,429.1 608.2,428.8 609.1,427.7 609.9,428.9 610.8,429.0 611.4,429.5 613.3,429.4 613.4,430.5" fill="#6485d6" stroke="#1d46c8" stroke-width="0.7" fill-opacity="0.6"/>
<polyline points="635.0,460.6 643.1,453.6 653.1,440.7" fill="none" stroke="#1d46c8" stroke-width="1.1" />
<polygon points="657.5,440.7 661.0,442.0 663.2,444.0 661.2,445.0 659.2,445.4 659.1,447.1 658.1,448.5 656.6,449.4 654.2,446.6 653.1,446.6 651.9,446.9 651.2,445.4 649.1,446.9 649.4,444.6 644.4,447.3 648.9,442.9 644.5,443.5 645.0,442.0 644.4,440.7 644.0,439.3 646.4,438.6 647.5,437.8 646.4,435.7 646.9,434.1 649.8,435.6 650.2,433.6 651.2,431.4 653.1,431.3 654.5,433.2 655.1,435.8 656.6,435.2 657.9,435.5 657.9,437.1 660.8,436.7 659.5,438.6 662.6,439.2" fill="#6485d6" stroke="#1d46c8" stroke-width="0.8" fill-opacity="0.6"/>
<polygon points="648.6,450.6 646.8,451.2 645.8,451.4 645.8,452.0 647.4,453.8 645.8,453.4 646.1,455.2 644.3,453.4 644.1,455.5 643.1,453.2 642.4,454.3 641.3,455.2 641.6,453.0 639.7,454.2 639.3,453.5 637.4,453.5 638.8,452.0 639.3,451.2 638.5,450.6 638.6,449.8 637.7,448.8 637.9,447.8 638.3,446.9 640.2,447.4 640.6,446.6 641.7,447.0 642.1,445.5 643.1,445.1 643.8,447.1 644.5,447.1 645.2,447.4 645.2,448.4 647.5,447.3 646.6,448.8 646.0,449.6 646.6,450.0" fill="#6485d6" stroke="#1d46c8" stroke-width="0.8" fill-opacity="0.6"/>
<polyline points="653.1,440.7 656.1,433.7" fill="none" stroke="#1d46c8" stroke-width="0.9" />
<polygon points="659.0,433.7 660.3,434.7 659.1,435.2 659.2,436.4 658.1,436.7 656.6,435.3 656.1,437.8 655.1,436.9 654.8,435.7 653.3,436.1 652.0,435.7 653.7,434.3 653.1,433.7 652.9,433.0 652.8,432.1 654.3,432.2 654.1,430.8 654.9,430.0 656.1,430.7 657.1,430.4 657.5,431.6 658.9,431.3 659.0,432.3 659.0,433.1" fill="#6485d6" stroke="#1d46c8" stroke-width="0.7" fill-opacity="0.6"/>
<polyline points="635.0,469.4 624.1,462.4 610.7,449.6" fill="none" stroke="#1d46c8" stroke-width="1.1" />
<polygon points="617.6,449.6 617.0,450.6 615.9,451.3 615.4,452.0 614.3,452.3 616.1,455.3 612.9,453.0 612.3,453.4 611.7,454.3 610.7,455.2 609.4,456.4 609.3,453.1 608.8,452.6 605.8,454.9 604.6,454.2 603.9,453.2 605.8,451.2 606.3,450.3 605.5,449.6 603.4,448.4 606.7,448.2 606.5,447.4 605.5,445.6 607.3,445.9 607.2,444.1 607.6,441.9 609.9,445.2 610.7,444.6 611.8,444.0 612.7,444.8 614.5,443.8 612.9,447.2 617.2,444.7 617.9,445.9 618.1,447.2 619.1,448.3" fill="#6485d6" stroke="#1d46c8" stroke-width="0.8" fill-opacity="0.6"/>
<polygon points="631.1,459.4 627.5,460.0 627.8,460.6 628.5,461.7 628.8,463.0 628.1,463.7 626.9,463.8 626.0,464.1 625.3,465.6 624.1,463.3 623.2,463.7 622.2,464.1 622.2,462.4 619.9,464.0 619.2,463.1 619.6,461.7 618.2,461.4 619.6,460.1 617.0,459.4 619.6,458.7 619.3,457.9 621.0,457.8 621.9,457.8 621.9,457.1 621.4,455.3 622.2,454.7 623.5,456.6 624.1,454.8 625.1,454.0 625.7,455.3 627.5,454.1 627.3,455.9 626.3,457.8 629.4,456.6 627.2,458.4 628.6,458.7" fill="#6485d6" stroke="#1d46c8" stroke-width="0.8" fill-opacity="0.6"/>
<polyline points="635.0,478.3 646.4,471.3 660.3,463.5" fill="none" stroke="#1d46c8" stroke-width="1.1" />
<polygon points="667.9,463.5 667.3,464.6 663.8,464.6 666.5,466.7 666.4,468.1 663.9,467.3 662.1,466.3 661.6,466.7 661.2,468.2 660.3,467.7 659.6,467.3 658.4,468.3 656.4,469.5 655.2,468.9 657.0,466.0 655.0,466.2 654.8,465.2 653.8,464.5 654.0,463.5 655.5,462.7 656.2,462.1 653.8,460.1 655.9,460.1 656.9,459.8 658.3,460.2 657.7,457.0 659.4,458.9 660.3,457.7 661.5,457.4 662.9,457.0 663.5,458.5 664.2,459.3 663.7,460.9 663.0,462.1 667.3,461.2 667.2,462.4" fill="#6485d6" stroke="#1d46c8" stroke-width="0.8" fill-opacity="0.6"/>
<polygon points="649.9,468.3 652.3,469.2 651.5,470.0 650.4,470.4 651.7,472.3 650.5,472.7 648.8,472.0 648.6,473.8 646.9,470.8 646.4,472.7 645.1,474.6 644.3,473.4 643.7,472.5 642.2,472.8 642.0,471.6 639.9,471.7 641.6,469.8 642.1,469.0 642.6,468.3 642.6,467.7 642.0,466.9 640.7,465.3 644.2,466.6 643.3,464.9 644.6,465.4 644.4,463.4 645.2,462.0 646.4,462.8 647.3,463.7 647.9,464.5 649.6,463.3 649.4,465.0 651.4,464.5 650.9,465.9 652.3,466.3 650.0,467.7" fill="#6485d6" stroke="#1d46c8" stroke-width="0.8" fill-opacity="0.6"/>
<polyline points="660.3,463.5 663.3,456.5" fill="none" stroke="#1d46c8" stroke-width="0.9" />
<polygon points="666.7,456.5 666.9,457.3 666.4,458.0 665.9,458.7 665.1,459.1 664.4,459.9 663.3,459.9 662.1,460.2 661.8,458.6 660.7,458.7 659.6,458.3 660.0,457.2 659.9,456.5 661.0,455.9 661.3,455.5 661.6,455.0 661.2,453.3 662.5,453.9 663.3,453.9 664.5,452.6 665.5,453.3 665.4,454.6 667.3,454.5 666.7,455.7" fill="#6485d6" stroke="#1d46c8" stroke-width="0.7" fill-opacity="0.6"/>
<polyline points="635.0,487.1 627.9,480.1 619.2,473.8" fill="none" stroke="#1d46c8" stroke-width="1.1" />
<polygon points="625.8,473.8 628.4,475.2 627.2,476.4 624.6,476.6 624.7,478.0 622.8,477.6 623.3,480.2 621.5,479.5 620.0,477.9 619.2,481.1 617.5,482.2 616.5,480.4 615.5,479.5 612.7,480.7 614.0,477.7 613.0,477.0 612.2,476.0 611.8,474.9 610.7,473.8 613.6,472.9 611.1,471.1 611.7,469.9 613.8,469.7 613.0,467.1 615.6,468.2 615.8,465.6 618.1,468.2 619.2,465.0 620.5,467.0 622.2,466.1 622.5,468.6 623.6,469.0 624.7,469.6 628.0,469.2 627.8,470.9 626.2,472.6" fill="#6485d6" stroke="#1d46c8" stroke-width="0.8" fill-opacity="0.6"/>
<polygon points="630.7,477.1 630.9,477.6 632.5,478.7 631.1,478.8 631.5,479.9 629.7,479.1 629.3,479.4 629.2,480.4 628.5,480.4 627.9,479.8 627.3,480.2 626.8,479.8 626.1,479.9 625.2,480.0 624.4,479.7 624.2,479.1 624.7,478.2 625.3,477.5 624.6,477.1 624.9,476.7 623.6,475.7 623.6,474.9 623.6,473.9 626.0,475.2 625.2,473.0 626.7,474.4 627.1,473.1 627.9,474.3 628.8,472.5 629.6,472.8 629.4,474.8 630.9,473.9 631.8,474.2 632.0,475.0 631.9,475.8 632.6,476.4" fill="#6485d6" stroke="#1d46c8" stroke-width="0.8" fill-opacity="0.6"/>
<polyline points="619.2,473.8 616.2,466.8" fill="none" stroke="#1d46c8" stroke-width="0.9" />
<polygon points="618.2,466.8 618.9,467.4 620.2,468.8 618.9,469.1 617.2,468.3 616.9,469.1 616.2,469.3 615.0,470.5 613.8,470.2 613.3,469.2 613.2,468.2 612.4,467.6 611.8,466.8 612.9,466.0 613.0,465.2 614.5,465.3 614.5,464.3 615.0,463.1 616.2,464.8 617.0,464.2 617.6,464.6 618.8,464.5 618.8,465.4 618.8,466.1" fill="#6485d6" stroke="#1d46c8" stroke-width="0.7" fill-opacity="0.6"/>
<path d="M635.0,361.3A3.5,3.5 0 0,1 639.0,364.7A3.0,3.0 0 0,1 643.4,367.9A2.7,2.7 0 0,1 646.9,371.3A3.5,3.5 0 0,1 651.6,373.6A2.4,2.4 0 0,1 655.3,375.0A2.4,2.4 0 0,1 656.9,378.5A2.3,2.3 0 0,1 657.2,382.8A2.3,2.3 0 0,1 658.1,386.8A2.2,2.2 0 0,1 658.7,390.0A2.3,2.3 0 0,1 658.1,393.4A3.0,3.0 0 0,1 660.7,396.9A1.5,1.5 0 0,1 660.9,399.5A2.5,2.5 0 0,1 659.9,403.3A2.6,2.6 0 0,1 657.5,406.1A3.1,3.1 0 0,1 660.7,411.0A3.0,3.0 0 0,1 657.8,415.6A2.1,2.1 0 0,1 656.7,418.9A2.0,2.0 0 0,1 657.6,421.8A2.6,2.6 0 0,1 658.1,426.6A4.1,4.1 0 0,1 652.7,429.3A3.4,3.4 0 0,1 649.2,432.5A4.1,4.1 0 0,1 642.8,433.6A3.3,3.3 0 0,1 637.6,436.2A3.3,3.3 0 0,1 632.4,435.3A3.3,3.3 0 0,1 627.4,432.7A4.0,4.0 0 0,1 621.7,435.6A2.9,2.9 0 0,1 618.5,432.3A3.5,3.5 0 0,1 614.0,429.9A2.7,2.7 0 0,1 612.8,426.0A2.6,2.6 0 0,1 613.7,422.0A2.3,2.3 0 0,1 612.5,418.4A2.7,2.7 0 0,1 610.4,413.8A3.3,3.3 0 0,1 612.3,409.0A3.2,3.2 0 0,1 610.8,404.3A3.0,3.0 0 0,1 608.5,400.5A2.5,2.5 0 0,1 608.2,396.4A3.3,3.3 0 0,1 612.4,393.7A3.7,3.7 0 0,1 611.9,388.5A2.2,2.2 0 0,1 610.6,385.3A2.5,2.5 0 0,1 611.3,381.6A3.3,3.3 0 0,1 614.5,377.8A3.5,3.5 0 0,1 618.4,374.9A2.5,2.5 0 0,1 621.6,371.3A2.9,2.9 0 0,1 625.6,368.5A2.5,2.5 0 0,1 630.0,367.0A1.9,1.9 0 0,1 632.5,365.0A2.5,2.5 0 0,1 635.0,361.3Z" fill="#6586d8" fill-opacity="0.86" stroke="#123cc0" stroke-width="1"/>
<polygon points="635.0,370.8 635.8,372.2 636.7,373.7 637.6,375.1 638.6,376.6 639.6,378.1 640.5,379.5 641.5,381.0 642.5,382.4 643.5,383.9 644.4,385.4 645.3,386.8 646.2,388.3 647.1,389.7 648.0,391.2 648.8,392.7 649.5,394.1 650.2,395.6 650.9,397.0 651.6,398.5 652.1,400.0 652.7,401.4 653.2,402.9 653.6,404.3 654.0,405.8 654.3,407.3 654.5,408.7 654.7,410.2 654.8,411.6 654.9,413.1 654.9,414.6 654.9,416.0 654.9,417.5 654.7,418.9 653.9,420.4 652.5,421.9 650.7,423.3 648.3,424.8 645.4,426.2 642.0,427.7 638.0,429.2 632.0,429.2 628.0,427.7 624.6,426.2 621.7,424.8 619.3,423.3 617.5,421.9 616.1,420.4 615.3,418.9 615.1,417.5 615.1,416.0 615.1,414.6 615.1,413.1 615.2,411.6 615.3,410.2 615.5,408.7 615.7,407.3 616.0,405.8 616.4,404.3 616.8,402.9 617.3,401.4 617.9,400.0 618.4,398.5 619.1,397.0 619.8,395.6 620.5,394.1 621.2,392.7 622.0,391.2 622.9,389.7 623.8,388.3 624.7,386.8 625.6,385.4 626.5,383.9 627.5,382.4 628.5,381.0 629.5,379.5 630.4,378.1 631.4,376.6 632.4,375.1 633.3,373.7 634.2,372.2 635.0,370.8" fill="#4a6ed0" stroke="#2f58c8" stroke-width="0.6" fill-opacity="0.45" stroke-opacity="0.6"/>
<polyline points="635.0,365.0 635.0,424.1" fill="none" stroke="#3c62cc" stroke-width="0.7" />
<polygon points="439.0,651.0 574.0,580.0 574.0,598.0 439.0,674.0 405.0,677.0 322.0,636.0 322.0,621.0" fill="#7090dc" stroke="#2a4fc8" stroke-width="0.7" fill-opacity="0.5"/>
<polygon points="120.6,200.0 140.0,209.3 160.0,220.3 180.0,231.8 200.0,243.9 220.0,256.0 240.0,268.6 260.0,282.3 285.0,301.2 315.0,325.8 343.6,350.7 359.5,368.0 375.4,389.7 384.0,402.0 384.0,625.0 364.0,607.0 355.7,561.0 335.0,537.0 302.5,502.0 293.0,488.0 205.0,463.0 149.0,429.0 121.0,390.0 121.0,200.0" fill="#efefef" stroke="#111" stroke-width="1.2" />
<polygon points="438.5,430.0 574.0,354.0 574.0,580.0 438.5,651.0" fill="#f6f6f6" stroke="#111" stroke-width="1.3" />
<polygon points="384.0,401.0 438.5,430.0 438.5,651.0 382.7,613.0" fill="#ebebeb" stroke="#111" stroke-width="1.3" />
<polygon points="191.5,160.9 330.0,239.9 441.0,305.8 506.0,341.0 574.0,354.0 438.5,430.0 384.0,402.0 375.4,389.7 359.5,368.0 343.6,350.7 315.0,325.8 285.0,301.2 260.0,282.3 240.0,268.6 220.0,256.0 200.0,243.9 180.0,231.8 160.0,220.3 140.0,209.3 120.6,200.0" fill="#fefefe" stroke="#111" stroke-width="1.5" />
<polyline points="128.0,204.0 191.5,167.5 330.0,246.0 441.0,312.0 500.0,344.0" fill="none" stroke="#111" stroke-width="1" />
<polyline points="120.6,203.5 140.0,212.8 160.0,223.8 180.0,235.3 200.0,247.4 220.0,259.5 240.0,272.1 260.0,285.8 285.0,304.7 315.0,329.3 343.6,354.2 359.5,371.5 375.4,393.2" fill="none" stroke="#111" stroke-width="1.7" />
<polyline points="120.6,208.5 140.0,217.8 160.0,228.8 180.0,240.3 200.0,252.4 220.0,264.5 240.0,277.1 260.0,290.8 285.0,309.7 315.0,334.3 343.6,359.2 359.5,376.5 375.4,398.2" fill="none" stroke="#111" stroke-width="1.1" />
<polyline points="120.6,211.5 140.0,220.8 160.0,231.8 180.0,243.3 200.0,255.4 220.0,267.5 240.0,280.1 260.0,293.8 285.0,312.7 315.0,337.3 343.6,362.2 359.5,379.5 375.4,401.2" fill="none" stroke="#111" stroke-width="0.9" />
<polygon points="506.0,316.0 532.0,330.0 574.0,353.8 574.0,356.0 545.7,367.6 506.0,342.0" fill="#e9e9e9" stroke="#111" stroke-width="1.2" />
<polyline points="532.0,330.0 532.0,356.5" fill="none" stroke="#111" stroke-width="1.3" />
<polyline points="506.0,342.0 545.7,367.6" fill="none" stroke="#111" stroke-width="1.6" />
<polyline points="150.6,213.7 181.3,197.6" fill="none" stroke="#1a1a1a" stroke-width="1.3" />
<polyline points="167.7,186.5 202.6,205.2" fill="none" stroke="#1a1a1a" stroke-width="1.8" />
<polyline points="212.8,213.7 290.2,257.1 332.3,280.0" fill="none" stroke="#1a1a1a" stroke-width="1.3" />
<polyline points="211.9,213.7 239.1,198.4" fill="none" stroke="#1a1a1a" stroke-width="1.5" />
<polyline points="206.0,233.3 227.2,221.4" fill="none" stroke="#1a1a1a" stroke-width="1.4" />
<polyline points="244.3,255.4 263.0,244.4" fill="none" stroke="#1a1a1a" stroke-width="1.4" />
<polyline points="269.8,258.8 280.0,253.7" fill="none" stroke="#1a1a1a" stroke-width="1.4" />
<polyline points="290.2,257.1 314.9,243.5" fill="none" stroke="#1a1a1a" stroke-width="1.3" />
<polyline points="332.3,280.0 290.0,259.0" fill="none" stroke="#1a1a1a" stroke-width="1.0" />
<polyline points="270.6,270.7 290.2,259.1" fill="none" stroke="#1a1a1a" stroke-width="1.3" />
<polyline points="270.6,270.7 303.8,292.9 332.3,309.9" fill="none" stroke="#1a1a1a" stroke-width="1.3" />
<polyline points="309.9,289.9 327.3,279.9 357.3,297.4 334.8,312.4" fill="none" stroke="#1a1a1a" stroke-width="1.2" />
<polyline points="333.2,312.9 384.0,284.3" fill="none" stroke="#1a1a1a" stroke-width="1.7" />
<polyline points="330.0,282.0 357.0,297.8" fill="none" stroke="#1a1a1a" stroke-width="1.0" />
<polyline points="377.7,286.7 425.3,312.1" fill="none" stroke="#1a1a1a" stroke-width="1.0" />
<polyline points="425.9,391.3 498.0,350.4" fill="none" stroke="#1a1a1a" stroke-width="1.2" />
<polyline points="445.0,401.5 518.5,358.6" fill="none" stroke="#1a1a1a" stroke-width="1.2" />
<polyline points="482.4,361.3 495.4,368.8" fill="none" stroke="#1a1a1a" stroke-width="1.2" />
<polyline points="495.4,351.0 515.8,360.0" fill="none" stroke="#1a1a1a" stroke-width="1.2" />
<polyline points="462.7,388.6 495.4,370.8" fill="none" stroke="#1a1a1a" stroke-width="1.8" />
<polyline points="450.4,332.7 505.0,353.0" fill="none" stroke="#1a1a1a" stroke-width="1.0" />
<polygon points="264.7,224.0 277.0,218.8 286.8,226.0 275.0,231.6" fill="#cfcfcf" stroke="#111" stroke-width="0.9" />
<polygon points="257.5,249.5 261.5,248.0 262.0,252.0 258.0,253.5" fill="none" stroke="#111" stroke-width="0.9" />
<circle cx="224.7" cy="195.9" r="1.3" fill="#111"/>
<circle cx="308" cy="241" r="1.3" fill="#111"/>
<circle cx="390" cy="289.9" r="1.3" fill="#111"/>
<circle cx="468" cy="337.4" r="1.3" fill="#111"/>
<polygon points="393.5,334.4 451.0,302.6 462.0,309.0 406.0,340.0" fill="#fafafa" stroke="#111" stroke-width="1" />
<polygon points="393.5,334.4 406.0,340.0 406.0,355.0 393.5,349.0" fill="#e6e6e6" stroke="#111" stroke-width="1" />
<polygon points="406.0,340.0 462.0,309.0 462.0,324.0 406.0,355.0" fill="#d8d8d8" stroke="#111" stroke-width="1" />
<polygon points="424.0,326.0 438.0,318.0 442.0,321.0 428.0,329.0" fill="#222" stroke="none" stroke-width="1" />
<polygon points="384.5,401.0 412.9,384.5 462.9,416.3 438.5,430.0" fill="#fafafa" stroke="#111" stroke-width="1.3" />
<polygon points="389.0,401.5 412.9,388.0 457.0,416.0 438.5,426.5" fill="none" stroke="#111" stroke-width="0.9" />
<polyline points="384.5,406.5 438.5,434.8" fill="none" stroke="#111" stroke-width="2.0" />
<polyline points="438.5,434.8 574.0,359.9" fill="none" stroke="#111" stroke-width="2.0" />
<polyline points="384.5,411.3 438.5,438.8" fill="none" stroke="#111" stroke-width="2.0" />
<polyline points="438.5,438.8 574.0,364.1" fill="none" stroke="#111" stroke-width="2.0" />
<polyline points="384.5,416.1 438.5,442.8" fill="none" stroke="#111" stroke-width="2.0" />
<polyline points="438.5,442.8 574.0,368.3" fill="none" stroke="#111" stroke-width="2.0" />
<polyline points="384.5,420.9 438.5,446.8" fill="none" stroke="#111" stroke-width="2.0" />
<polyline points="438.5,446.8 574.0,372.5" fill="none" stroke="#111" stroke-width="2.0" />
<polyline points="384.5,425.7 438.5,450.8" fill="none" stroke="#111" stroke-width="2.0" />
<polyline points="438.5,450.8 574.0,376.7" fill="none" stroke="#111" stroke-width="2.0" />
<polyline points="384.5,430.5 438.5,454.8" fill="none" stroke="#111" stroke-width="2.0" />
<polyline points="438.5,454.8 574.0,380.9" fill="none" stroke="#111" stroke-width="2.0" />
<polyline points="384.5,435.3 438.5,458.8" fill="none" stroke="#111" stroke-width="2.0" />
<polyline points="438.5,458.8 574.0,385.1" fill="none" stroke="#111" stroke-width="2.0" />
<polyline points="443.0,427.5 443.0,458.5" fill="none" stroke="#111" stroke-width="1.6" />
<polyline points="462.9,416.3 462.9,447.6" fill="none" stroke="#111" stroke-width="1.6" />
<polyline points="478.0,407.8 478.0,439.3" fill="none" stroke="#111" stroke-width="1.6" />
<polyline points="493.0,399.4 493.0,431.0" fill="none" stroke="#111" stroke-width="1.6" />
<polyline points="508.0,391.0 508.0,422.8" fill="none" stroke="#111" stroke-width="1.6" />
<polyline points="523.0,382.6 523.0,414.5" fill="none" stroke="#111" stroke-width="1.6" />
<polyline points="538.0,374.2 538.0,406.3" fill="none" stroke="#111" stroke-width="1.6" />
<polyline points="547.0,369.1 547.0,401.3" fill="none" stroke="#111" stroke-width="1.6" />
<polyline points="562.0,360.7 562.0,393.1" fill="none" stroke="#111" stroke-width="1.6" />
<polyline points="438.5,430.0 438.5,651.0" fill="none" stroke="#111" stroke-width="1.5" />
<polygon points="406.0,417.5 410.5,418.0 424.5,458.3 419.5,456.5" fill="#fff" stroke="#111" stroke-width="1.0" />
<polygon points="406.0,417.5 396.5,432.5 401.0,436.0 408.0,423.0" fill="#fff" stroke="#111" stroke-width="1.0" />
<polygon points="401.0,436.0 415.0,444.0 412.0,436.0 405.0,431.0" fill="#fff" stroke="#111" stroke-width="0.9" />
<polyline points="384.5,437.0 438.5,461.0 574.0,390.0" fill="none" stroke="#111" stroke-width="1.6" />
<polyline points="384.5,441.0 438.5,468.5 574.0,396.0" fill="none" stroke="#111" stroke-width="1.0" />
<polyline points="384.0,474.0 438.5,496.6 574.0,425.3" fill="none" stroke="#111" stroke-width="1.3" />
<polyline points="438.5,500.0 574.0,428.7" fill="none" stroke="#111" stroke-width="0.9" />
<polyline points="384.0,588.0 438.0,613.0 574.0,541.0" fill="none" stroke="#111" stroke-width="1.3" />
<polyline points="438.0,618.0 574.0,546.0" fill="none" stroke="#111" stroke-width="0.8" />
<polygon points="479.1,455.1 494.6,446.9 494.6,462.9 479.1,471.1" fill="#111" stroke="none" stroke-width="1" />
<polygon points="481.2,456.1 483.6,454.8 483.6,459.7 481.2,460.9" fill="#fff" stroke="none" stroke-width="1" />
<polygon points="481.2,463.0 483.6,461.8 483.6,466.6 481.2,467.9" fill="#fff" stroke="none" stroke-width="1" />
<polygon points="485.7,453.7 488.0,452.5 488.0,457.3 485.7,458.6" fill="#fff" stroke="none" stroke-width="1" />
<polygon points="485.7,460.7 488.0,459.4 488.0,464.3 485.7,465.5" fill="#fff" stroke="none" stroke-width="1" />
<polygon points="490.1,451.4 492.5,450.1 492.5,455.0 490.1,456.2" fill="#fff" stroke="none" stroke-width="1" />
<polygon points="490.1,458.3 492.5,457.1 492.5,461.9 490.1,463.2" fill="#fff" stroke="none" stroke-width="1" />
<polygon points="479.1,490.4 494.6,482.2 494.6,509.2 479.1,517.4" fill="#111" stroke="none" stroke-width="1" />
<polygon points="481.2,491.4 483.6,490.1 483.6,494.3 481.2,495.5" fill="#fff" stroke="none" stroke-width="1" />
<polygon points="481.2,497.6 483.6,496.4 483.6,500.5 481.2,501.7" fill="#fff" stroke="none" stroke-width="1" />
<polygon points="481.2,503.8 483.6,502.6 483.6,506.7 481.2,508.0" fill="#fff" stroke="none" stroke-width="1" />
<polygon points="481.2,510.1 483.6,508.8 483.6,512.9 481.2,514.2" fill="#fff" stroke="none" stroke-width="1" />
<polygon points="485.7,489.0 488.0,487.8 488.0,491.9 485.7,493.2" fill="#fff" stroke="none" stroke-width="1" />
<polygon points="485.7,495.3 488.0,494.0 488.0,498.1 485.7,499.4" fill="#fff" stroke="none" stroke-width="1" />
<polygon points="485.7,501.5 488.0,500.2 488.0,504.4 485.7,505.6" fill="#fff" stroke="none" stroke-width="1" />
<polygon points="485.7,507.7 488.0,506.5 488.0,510.6 485.7,511.8" fill="#fff" stroke="none" stroke-width="1" />
<polygon points="490.1,486.7 492.5,485.4 492.5,489.6 490.1,490.8" fill="#fff" stroke="none" stroke-width="1" />
<polygon points="490.1,492.9 492.5,491.7 492.5,495.8 490.1,497.0" fill="#fff" stroke="none" stroke-width="1" />
<polygon points="490.1,499.1 492.5,497.9 492.5,502.0 490.1,503.3" fill="#fff" stroke="none" stroke-width="1" />
<polygon points="490.1,505.4 492.5,504.1 492.5,508.2 490.1,509.5" fill="#fff" stroke="none" stroke-width="1" />
<polygon points="479.1,533.7 494.6,525.5 494.6,541.5 479.1,549.7" fill="#111" stroke="none" stroke-width="1" />
<polygon points="481.2,534.7 483.6,533.4 483.6,538.3 481.2,539.5" fill="#fff" stroke="none" stroke-width="1" />
<polygon points="481.2,541.6 483.6,540.4 483.6,545.2 481.2,546.5" fill="#fff" stroke="none" stroke-width="1" />
<polygon points="485.7,532.3 488.0,531.1 488.0,535.9 485.7,537.2" fill="#fff" stroke="none" stroke-width="1" />
<polygon points="485.7,539.3 488.0,538.0 488.0,542.9 485.7,544.1" fill="#fff" stroke="none" stroke-width="1" />
<polygon points="490.1,530.0 492.5,528.7 492.5,533.6 490.1,534.8" fill="#fff" stroke="none" stroke-width="1" />
<polygon points="490.1,536.9 492.5,535.7 492.5,540.5 490.1,541.8" fill="#fff" stroke="none" stroke-width="1" />
<polygon points="479.1,565.4 494.6,557.2 494.6,572.7 479.1,580.9" fill="#111" stroke="none" stroke-width="1" />
<polygon points="481.2,566.4 483.6,565.1 483.6,569.7 481.2,571.0" fill="#fff" stroke="none" stroke-width="1" />
<polygon points="481.2,573.1 483.6,571.8 483.6,576.4 481.2,577.7" fill="#fff" stroke="none" stroke-width="1" />
<polygon points="485.7,564.0 488.0,562.8 488.0,567.4 485.7,568.6" fill="#fff" stroke="none" stroke-width="1" />
<polygon points="485.7,570.7 488.0,569.5 488.0,574.1 485.7,575.3" fill="#fff" stroke="none" stroke-width="1" />
<polygon points="490.1,561.7 492.5,560.4 492.5,565.0 490.1,566.3" fill="#fff" stroke="none" stroke-width="1" />
<polygon points="490.1,568.4 492.5,567.1 492.5,571.7 490.1,573.0" fill="#fff" stroke="none" stroke-width="1" />
<polygon points="501.2,443.5 516.7,435.3 516.7,451.3 501.2,459.5" fill="#111" stroke="none" stroke-width="1" />
<polygon points="503.3,444.5 505.7,443.2 505.7,448.1 503.3,449.3" fill="#fff" stroke="none" stroke-width="1" />
<polygon points="503.3,451.4 505.7,450.2 505.7,455.0 503.3,456.3" fill="#fff" stroke="none" stroke-width="1" />
<polygon points="507.8,442.1 510.1,440.9 510.1,445.7 507.8,447.0" fill="#fff" stroke="none" stroke-width="1" />
<polygon points="507.8,449.1 510.1,447.8 510.1,452.7 507.8,453.9" fill="#fff" stroke="none" stroke-width="1" />
<polygon points="512.2,439.8 514.6,438.5 514.6,443.4 512.2,444.6" fill="#fff" stroke="none" stroke-width="1" />
<polygon points="512.2,446.7 514.6,445.5 514.6,450.3 512.2,451.6" fill="#fff" stroke="none" stroke-width="1" />
<polygon points="501.2,478.8 516.7,470.6 516.7,497.6 501.2,505.8" fill="#111" stroke="none" stroke-width="1" />
<polygon points="503.3,479.8 505.7,478.5 505.7,482.6 503.3,483.9" fill="#fff" stroke="none" stroke-width="1" />
<polygon points="503.3,486.0 505.7,484.7 505.7,488.9 503.3,490.1" fill="#fff" stroke="none" stroke-width="1" />
<polygon points="503.3,492.2 505.7,491.0 505.7,495.1 503.3,496.3" fill="#fff" stroke="none" stroke-width="1" />
<polygon points="503.3,498.4 505.7,497.2 505.7,501.3 503.3,502.6" fill="#fff" stroke="none" stroke-width="1" />
<polygon points="507.8,477.4 510.1,476.2 510.1,480.3 507.8,481.5" fill="#fff" stroke="none" stroke-width="1" />
<polygon points="507.8,483.6 510.1,482.4 510.1,486.5 507.8,487.8" fill="#fff" stroke="none" stroke-width="1" />
<polygon points="507.8,489.9 510.1,488.6 510.1,492.7 507.8,494.0" fill="#fff" stroke="none" stroke-width="1" />
<polygon points="507.8,496.1 510.1,494.8 510.1,499.0 507.8,500.2" fill="#fff" stroke="none" stroke-width="1" />
<polygon points="512.2,475.1 514.6,473.8 514.6,477.9 512.2,479.2" fill="#fff" stroke="none" stroke-width="1" />
<polygon points="512.2,481.3 514.6,480.0 514.6,484.2 512.2,485.4" fill="#fff" stroke="none" stroke-width="1" />
<polygon points="512.2,487.5 514.6,486.3 514.6,490.4 512.2,491.6" fill="#fff" stroke="none" stroke-width="1" />
<polygon points="512.2,493.7 514.6,492.5 514.6,496.6 512.2,497.9" fill="#fff" stroke="none" stroke-width="1" />
<polygon points="501.2,522.1 516.7,513.9 516.7,529.9 501.2,538.1" fill="#111" stroke="none" stroke-width="1" />
<polygon points="503.3,523.1 505.7,521.8 505.7,526.7 503.3,527.9" fill="#fff" stroke="none" stroke-width="1" />
<polygon points="503.3,530.0 505.7,528.8 505.7,533.6 503.3,534.9" fill="#fff" stroke="none" stroke-width="1" />
<polygon points="507.8,520.7 510.1,519.5 510.1,524.3 507.8,525.6" fill="#fff" stroke="none" stroke-width="1" />
<polygon points="507.8,527.7 510.1,526.4 510.1,531.3 507.8,532.5" fill="#fff" stroke="none" stroke-width="1" />
<polygon points="512.2,518.4 514.6,517.1 514.6,522.0 512.2,523.2" fill="#fff" stroke="none" stroke-width="1" />
<polygon points="512.2,525.3 514.6,524.1 514.6,528.9 512.2,530.2" fill="#fff" stroke="none" stroke-width="1" />
<polygon points="501.2,553.8 516.7,545.6 516.7,561.1 501.2,569.3" fill="#111" stroke="none" stroke-width="1" />
<polygon points="503.3,554.8 505.7,553.5 505.7,558.1 503.3,559.4" fill="#fff" stroke="none" stroke-width="1" />
<polygon points="503.3,561.5 505.7,560.2 505.7,564.8 503.3,566.1" fill="#fff" stroke="none" stroke-width="1" />
<polygon points="507.8,552.4 510.1,551.2 510.1,555.8 507.8,557.0" fill="#fff" stroke="none" stroke-width="1" />
<polygon points="507.8,559.1 510.1,557.9 510.1,562.5 507.8,563.7" fill="#fff" stroke="none" stroke-width="1" />
<polygon points="512.2,550.1 514.6,548.8 514.6,553.4 512.2,554.7" fill="#fff" stroke="none" stroke-width="1" />
<polygon points="512.2,556.8 514.6,555.5 514.6,560.1 512.2,561.4" fill="#fff" stroke="none" stroke-width="1" />
<polygon points="528.2,429.3 543.7,421.1 543.7,437.1 528.2,445.3" fill="#111" stroke="none" stroke-width="1" />
<polygon points="530.3,430.3 532.7,429.0 532.7,433.9 530.3,435.1" fill="#fff" stroke="none" stroke-width="1" />
<polygon points="530.3,437.2 532.7,436.0 532.7,440.8 530.3,442.1" fill="#fff" stroke="none" stroke-width="1" />
<polygon points="534.8,427.9 537.1,426.7 537.1,431.5 534.8,432.8" fill="#fff" stroke="none" stroke-width="1" />
<polygon points="534.8,434.9 537.1,433.6 537.1,438.5 534.8,439.7" fill="#fff" stroke="none" stroke-width="1" />
<polygon points="539.2,425.6 541.6,424.3 541.6,429.2 539.2,430.4" fill="#fff" stroke="none" stroke-width="1" />
<polygon points="539.2,432.5 541.6,431.3 541.6,436.1 539.2,437.4" fill="#fff" stroke="none" stroke-width="1" />
<polygon points="528.2,464.6 543.7,456.4 543.7,483.4 528.2,491.6" fill="#111" stroke="none" stroke-width="1" />
<polygon points="530.3,465.6 532.7,464.3 532.7,468.4 530.3,469.7" fill="#fff" stroke="none" stroke-width="1" />
<polygon points="530.3,471.8 532.7,470.5 532.7,474.7 530.3,475.9" fill="#fff" stroke="none" stroke-width="1" />
<polygon points="530.3,478.0 532.7,476.8 532.7,480.9 530.3,482.1" fill="#fff" stroke="none" stroke-width="1" />
<polygon points="530.3,484.2 532.7,483.0 532.7,487.1 530.3,488.4" fill="#fff" stroke="none" stroke-width="1" />
<polygon points="534.8,463.2 537.1,462.0 537.1,466.1 534.8,467.3" fill="#fff" stroke="none" stroke-width="1" />
<polygon points="534.8,469.4 537.1,468.2 537.1,472.3 534.8,473.6" fill="#fff" stroke="none" stroke-width="1" />
<polygon points="534.8,475.7 537.1,474.4 537.1,478.5 534.8,479.8" fill="#fff" stroke="none" stroke-width="1" />
<polygon points="534.8,481.9 537.1,480.6 537.1,484.8 534.8,486.0" fill="#fff" stroke="none" stroke-width="1" />
<polygon points="539.2,460.9 541.6,459.6 541.6,463.7 539.2,465.0" fill="#fff" stroke="none" stroke-width="1" />
<polygon points="539.2,467.1 541.6,465.8 541.6,470.0 539.2,471.2" fill="#fff" stroke="none" stroke-width="1" />
<polygon points="539.2,473.3 541.6,472.1 541.6,476.2 539.2,477.4" fill="#fff" stroke="none" stroke-width="1" />
<polygon points="539.2,479.5 541.6,478.3 541.6,482.4 539.2,483.7" fill="#fff" stroke="none" stroke-width="1" />
<polygon points="528.2,507.9 543.7,499.7 543.7,515.7 528.2,523.9" fill="#111" stroke="none" stroke-width="1" />
<polygon points="530.3,508.9 532.7,507.6 532.7,512.5 530.3,513.7" fill="#fff" stroke="none" stroke-width="1" />
<polygon points="530.3,515.8 532.7,514.6 532.7,519.4 530.3,520.7" fill="#fff" stroke="none" stroke-width="1" />
<polygon points="534.8,506.5 537.1,505.3 537.1,510.1 534.8,511.4" fill="#fff" stroke="none" stroke-width="1" />
<polygon points="534.8,513.5 537.1,512.2 537.1,517.1 534.8,518.3" fill="#fff" stroke="none" stroke-width="1" />
<polygon points="539.2,504.2 541.6,502.9 541.6,507.8 539.2,509.0" fill="#fff" stroke="none" stroke-width="1" />
<polygon points="539.2,511.1 541.6,509.9 541.6,514.7 539.2,516.0" fill="#fff" stroke="none" stroke-width="1" />
<polygon points="528.2,539.6 543.7,531.4 543.7,546.9 528.2,555.1" fill="#111" stroke="none" stroke-width="1" />
<polygon points="530.3,540.6 532.7,539.3 532.7,543.9 530.3,545.2" fill="#fff" stroke="none" stroke-width="1" />
<polygon points="530.3,547.3 532.7,546.0 532.7,550.6 530.3,551.9" fill="#fff" stroke="none" stroke-width="1" />
<polygon points="534.8,538.2 537.1,537.0 537.1,541.6 534.8,542.8" fill="#fff" stroke="none" stroke-width="1" />
<polygon points="534.8,544.9 537.1,543.7 537.1,548.3 534.8,549.5" fill="#fff" stroke="none" stroke-width="1" />
<polygon points="539.2,535.9 541.6,534.6 541.6,539.2 539.2,540.5" fill="#fff" stroke="none" stroke-width="1" />
<polygon points="539.2,542.6 541.6,541.3 541.6,545.9 539.2,547.2" fill="#fff" stroke="none" stroke-width="1" />
<polygon points="550.9,417.3 566.4,409.2 566.4,425.2 550.9,433.3" fill="#111" stroke="none" stroke-width="1" />
<polygon points="553.0,418.3 555.4,417.1 555.4,421.9 553.0,423.2" fill="#fff" stroke="none" stroke-width="1" />
<polygon points="553.0,425.3 555.4,424.0 555.4,428.9 553.0,430.1" fill="#fff" stroke="none" stroke-width="1" />
<polygon points="557.5,416.0 559.8,414.7 559.8,419.6 557.5,420.8" fill="#fff" stroke="none" stroke-width="1" />
<polygon points="557.5,422.9 559.8,421.7 559.8,426.5 557.5,427.8" fill="#fff" stroke="none" stroke-width="1" />
<polygon points="561.9,413.6 564.3,412.4 564.3,417.2 561.9,418.5" fill="#fff" stroke="none" stroke-width="1" />
<polygon points="561.9,420.6 564.3,419.3 564.3,424.2 561.9,425.4" fill="#fff" stroke="none" stroke-width="1" />
<polygon points="550.9,452.6 566.4,444.5 566.4,471.5 550.9,479.6" fill="#111" stroke="none" stroke-width="1" />
<polygon points="553.0,453.6 555.4,452.4 555.4,456.5 553.0,457.7" fill="#fff" stroke="none" stroke-width="1" />
<polygon points="553.0,459.8 555.4,458.6 555.4,462.7 553.0,464.0" fill="#fff" stroke="none" stroke-width="1" />
<polygon points="553.0,466.1 555.4,464.8 555.4,468.9 553.0,470.2" fill="#fff" stroke="none" stroke-width="1" />
<polygon points="553.0,472.3 555.4,471.0 555.4,475.2 553.0,476.4" fill="#fff" stroke="none" stroke-width="1" />
<polygon points="557.5,451.3 559.8,450.0 559.8,454.1 557.5,455.4" fill="#fff" stroke="none" stroke-width="1" />
<polygon points="557.5,457.5 559.8,456.2 559.8,460.4 557.5,461.6" fill="#fff" stroke="none" stroke-width="1" />
<polygon points="557.5,463.7 559.8,462.5 559.8,466.6 557.5,467.8" fill="#fff" stroke="none" stroke-width="1" />
<polygon points="557.5,469.9 559.8,468.7 559.8,472.8 557.5,474.1" fill="#fff" stroke="none" stroke-width="1" />
<polygon points="561.9,448.9 564.3,447.7 564.3,451.8 561.9,453.0" fill="#fff" stroke="none" stroke-width="1" />
<polygon points="561.9,455.1 564.3,453.9 564.3,458.0 561.9,459.3" fill="#fff" stroke="none" stroke-width="1" />
<polygon points="561.9,461.4 564.3,460.1 564.3,464.2 561.9,465.5" fill="#fff" stroke="none" stroke-width="1" />
<polygon points="561.9,467.6 564.3,466.3 564.3,470.5 561.9,471.7" fill="#fff" stroke="none" stroke-width="1" />
<polygon points="550.9,495.9 566.4,487.8 566.4,503.8 550.9,511.9" fill="#111" stroke="none" stroke-width="1" />
<polygon points="553.0,496.9 555.4,495.7 555.4,500.5 553.0,501.8" fill="#fff" stroke="none" stroke-width="1" />
<polygon points="553.0,503.9 555.4,502.6 555.4,507.5 553.0,508.7" fill="#fff" stroke="none" stroke-width="1" />
<polygon points="557.5,494.6 559.8,493.3 559.8,498.2 557.5,499.4" fill="#fff" stroke="none" stroke-width="1" />
<polygon points="557.5,501.5 559.8,500.3 559.8,505.1 557.5,506.4" fill="#fff" stroke="none" stroke-width="1" />
<polygon points="561.9,492.2 564.3,491.0 564.3,495.8 561.9,497.1" fill="#fff" stroke="none" stroke-width="1" />
<polygon points="561.9,499.2 564.3,497.9 564.3,502.8 561.9,504.0" fill="#fff" stroke="none" stroke-width="1" />
<polygon points="550.9,527.6 566.4,519.5 566.4,535.0 550.9,543.1" fill="#111" stroke="none" stroke-width="1" />
<polygon points="553.0,528.6 555.4,527.4 555.4,532.0 553.0,533.2" fill="#fff" stroke="none" stroke-width="1" />
<polygon points="553.0,535.3 555.4,534.1 555.4,538.7 553.0,539.9" fill="#fff" stroke="none" stroke-width="1" />
<polygon points="557.5,526.3 559.8,525.0 559.8,529.6 557.5,530.9" fill="#fff" stroke="none" stroke-width="1" />
<polygon points="557.5,533.0 559.8,531.7 559.8,536.3 557.5,537.6" fill="#fff" stroke="none" stroke-width="1" />
<polygon points="561.9,523.9 564.3,522.7 564.3,527.3 561.9,528.5" fill="#fff" stroke="none" stroke-width="1" />
<polygon points="561.9,530.6 564.3,529.4 564.3,534.0 561.9,535.2" fill="#fff" stroke="none" stroke-width="1" />
<polygon points="447.3,467.1 463.3,458.7 463.3,590.7 447.3,599.1" fill="#111" stroke="none" stroke-width="1" />
<polygon points="449.5,468.2 454.2,465.7 454.2,476.5 449.5,478.9" fill="#fff" stroke="none" stroke-width="1" />
<polygon points="449.5,481.1 454.2,478.7 454.2,489.4 449.5,491.9" fill="#fff" stroke="none" stroke-width="1" />
<polygon points="449.5,494.1 454.2,491.6 454.2,502.4 449.5,504.9" fill="#fff" stroke="none" stroke-width="1" />
<polygon points="449.5,507.1 454.2,504.6 454.2,515.4 449.5,517.9" fill="#fff" stroke="none" stroke-width="1" />
<polygon points="449.5,520.1 454.2,517.6 454.2,528.4 449.5,530.9" fill="#fff" stroke="none" stroke-width="1" />
<polygon points="449.5,533.1 454.2,530.6 454.2,541.4 449.5,543.8" fill="#fff" stroke="none" stroke-width="1" />
<polygon points="449.5,546.0 454.2,543.6 454.2,554.3 449.5,556.8" fill="#fff" stroke="none" stroke-width="1" />
<polygon points="449.5,559.0 454.2,556.5 454.2,567.3 449.5,569.8" fill="#fff" stroke="none" stroke-width="1" />
<polygon points="449.5,572.0 454.2,569.5 454.2,580.3 449.5,582.8" fill="#fff" stroke="none" stroke-width="1" />
<polygon points="449.5,585.0 454.2,582.5 454.2,593.3 449.5,595.8" fill="#fff" stroke="none" stroke-width="1" />
<polygon points="456.4,464.5 461.1,462.0 461.1,472.8 456.4,475.3" fill="#fff" stroke="none" stroke-width="1" />
<polygon points="456.4,477.5 461.1,475.0 461.1,485.8 456.4,488.3" fill="#fff" stroke="none" stroke-width="1" />
<polygon points="456.4,490.5 461.1,488.0 461.1,498.8 456.4,501.3" fill="#fff" stroke="none" stroke-width="1" />
<polygon points="456.4,503.5 461.1,501.0 461.1,511.8 456.4,514.2" fill="#fff" stroke="none" stroke-width="1" />
<polygon points="456.4,516.4 461.1,514.0 461.1,524.7 456.4,527.2" fill="#fff" stroke="none" stroke-width="1" />
<polygon points="456.4,529.4 461.1,526.9 461.1,537.7 456.4,540.2" fill="#fff" stroke="none" stroke-width="1" />
<polygon points="456.4,542.4 461.1,539.9 461.1,550.7 456.4,553.2" fill="#fff" stroke="none" stroke-width="1" />
<polygon points="456.4,555.4 461.1,552.9 461.1,563.7 456.4,566.2" fill="#fff" stroke="none" stroke-width="1" />
<polygon points="456.4,568.4 461.1,565.9 461.1,576.7 456.4,579.1" fill="#fff" stroke="none" stroke-width="1" />
<polygon points="456.4,581.3 461.1,578.9 461.1,589.6 456.4,592.1" fill="#fff" stroke="none" stroke-width="1" />
<polygon points="426.5,471.7 407.0,461.1 407.0,481.1 426.5,491.7" fill="#111" stroke="none" stroke-width="1" />
<polygon points="424.1,472.8 418.0,469.5 418.0,475.9 424.1,479.2" fill="#fff" stroke="none" stroke-width="1" />
<polygon points="424.1,481.6 418.0,478.3 418.0,484.7 424.1,488.0" fill="#fff" stroke="none" stroke-width="1" />
<polygon points="415.6,468.1 409.4,464.8 409.4,471.2 415.6,474.5" fill="#fff" stroke="none" stroke-width="1" />
<polygon points="415.6,476.9 409.4,473.6 409.4,480.0 415.6,483.3" fill="#fff" stroke="none" stroke-width="1" />
<polygon points="426.5,505.7 407.0,495.1 407.0,529.1 426.5,539.7" fill="#111" stroke="none" stroke-width="1" />
<polygon points="424.1,506.8 418.0,503.5 418.0,511.6 424.1,514.9" fill="#fff" stroke="none" stroke-width="1" />
<polygon points="424.1,517.3 418.0,514.0 418.0,522.1 424.1,525.5" fill="#fff" stroke="none" stroke-width="1" />
<polygon points="424.1,527.9 418.0,524.5 418.0,532.7 424.1,536.0" fill="#fff" stroke="none" stroke-width="1" />
<polygon points="415.6,502.1 409.4,498.8 409.4,506.9 415.6,510.3" fill="#fff" stroke="none" stroke-width="1" />
<polygon points="415.6,512.7 409.4,509.3 409.4,517.5 415.6,520.8" fill="#fff" stroke="none" stroke-width="1" />
<polygon points="415.6,523.2 409.4,519.9 409.4,528.0 415.6,531.3" fill="#fff" stroke="none" stroke-width="1" />
<polygon points="426.5,547.7 407.0,537.1 407.0,555.1 426.5,565.7" fill="#111" stroke="none" stroke-width="1" />
<polygon points="424.1,548.8 418.0,545.5 418.0,550.9 424.1,554.2" fill="#fff" stroke="none" stroke-width="1" />
<polygon points="424.1,556.6 418.0,553.3 418.0,558.7 424.1,562.0" fill="#fff" stroke="none" stroke-width="1" />
<polygon points="415.6,544.1 409.4,540.8 409.4,546.2 415.6,549.5" fill="#fff" stroke="none" stroke-width="1" />
<polygon points="415.6,551.9 409.4,548.6 409.4,554.0 415.6,557.3" fill="#fff" stroke="none" stroke-width="1" />
<polygon points="426.5,578.7 407.0,568.1 407.0,588.1 426.5,598.7" fill="#111" stroke="none" stroke-width="1" />
<polygon points="424.1,579.8 418.0,576.5 418.0,582.9 424.1,586.2" fill="#fff" stroke="none" stroke-width="1" />
<polygon points="424.1,588.6 418.0,585.3 418.0,591.7 424.1,595.0" fill="#fff" stroke="none" stroke-width="1" />
<polygon points="415.6,575.1 409.4,571.8 409.4,578.2 415.6,581.5" fill="#fff" stroke="none" stroke-width="1" />
<polygon points="415.6,583.9 409.4,580.6 409.4,587.0 415.6,590.3" fill="#fff" stroke="none" stroke-width="1" />
<polygon points="456.0,609.5 482.0,595.9 482.0,627.9 456.0,641.5" fill="#d9d9d9" stroke="#111" stroke-width="1.3" />
<polygon points="459.0,611.0 479.0,600.4 479.0,629.4 459.0,640.0" fill="#eee" stroke="#111" stroke-width="0.8" />
<polygon points="483.0,595.3 501.0,585.9 501.0,617.9 483.0,627.3" fill="#d9d9d9" stroke="#111" stroke-width="1.3" />
<polygon points="486.0,596.8 498.0,590.4 498.0,619.4 486.0,625.8" fill="#eee" stroke="#111" stroke-width="0.8" />
<polygon points="506.0,583.2 540.0,565.3 540.0,597.3 506.0,615.2" fill="#d9d9d9" stroke="#111" stroke-width="1.3" />
<polygon points="509.0,584.7 537.0,569.9 537.0,598.9 509.0,613.7" fill="#eee" stroke="#111" stroke-width="0.8" />
<polygon points="544.0,558.2 570.0,544.6 570.0,580.6 544.0,594.2" fill="#c4c4c4" stroke="#111" stroke-width="1" />
<polyline points="544.0,560.2 570.0,546.6" fill="none" stroke="#333" stroke-width="0.9" />
<polyline points="544.0,564.4 570.0,550.8" fill="none" stroke="#333" stroke-width="0.9" />
<polyline points="544.0,568.6 570.0,555.0" fill="none" stroke="#333" stroke-width="0.9" />
<polyline points="544.0,572.8 570.0,559.2" fill="none" stroke="#333" stroke-width="0.9" />
<polyline points="544.0,577.0 570.0,563.4" fill="none" stroke="#333" stroke-width="0.9" />
<polyline points="544.0,581.2 570.0,567.6" fill="none" stroke="#333" stroke-width="0.9" />
<polyline points="544.0,585.4 570.0,571.8" fill="none" stroke="#333" stroke-width="0.9" />
<polyline points="544.0,589.6 570.0,576.0" fill="none" stroke="#333" stroke-width="0.9" />
<polygon points="534.0,565.5 541.0,561.8 541.0,571.8 534.0,575.5" fill="none" stroke="#111" stroke-width="1" />
<polygon points="136.5,230.8 155.5,238.0 155.5,256.0 136.5,248.8" fill="#111" stroke="none" stroke-width="1" />
<polygon points="139.5,234.3 152.5,239.4 152.5,252.5 139.5,246.3" fill="#ececec" stroke="none" stroke-width="1" />
<polyline points="138.5,238.9 153.5,244.8" fill="none" stroke="#111" stroke-width="1.6" />
<polyline points="141.5,233.8 141.5,240.8" fill="none" stroke="#111" stroke-width="1.4" />
<polygon points="173.0,251.0 191.0,258.2 191.0,276.2 173.0,269.0" fill="#111" stroke="none" stroke-width="1" />
<polygon points="176.0,254.5 188.0,259.5 188.0,272.7 176.0,266.5" fill="#ececec" stroke="none" stroke-width="1" />
<polyline points="175.0,259.2 189.0,265.0" fill="none" stroke="#111" stroke-width="1.6" />
<polyline points="178.0,254.0 178.0,261.1" fill="none" stroke="#111" stroke-width="1.4" />
<polygon points="232.0,287.6 249.0,295.2 249.0,313.2 232.0,305.6" fill="#111" stroke="none" stroke-width="1" />
<polygon points="235.0,291.1 246.0,296.4 246.0,309.8 235.0,303.1" fill="#ececec" stroke="none" stroke-width="1" />
<polyline points="234.0,295.8 247.0,301.9" fill="none" stroke="#111" stroke-width="1.6" />
<polyline points="237.0,290.6 237.0,298.0" fill="none" stroke="#111" stroke-width="1.4" />
<polygon points="282.4,323.0 298.4,332.6 298.4,350.6 282.4,341.0" fill="#111" stroke="none" stroke-width="1" />
<polygon points="285.4,326.5 295.4,333.3 295.4,347.1 285.4,338.5" fill="#ececec" stroke="none" stroke-width="1" />
<polyline points="284.4,331.5 296.4,339.0" fill="none" stroke="#111" stroke-width="1.6" />
<polyline points="287.4,326.0 287.4,334.1" fill="none" stroke="#111" stroke-width="1.4" />
<polygon points="327.4,361.5 341.4,372.0 341.4,391.0 327.4,380.5" fill="#111" stroke="none" stroke-width="1" />
<polygon points="330.4,365.0 338.4,372.2 338.4,387.5 330.4,378.0" fill="#ececec" stroke="none" stroke-width="1" />
<polyline points="329.4,370.6 339.4,378.5" fill="none" stroke="#111" stroke-width="1.6" />
<polyline points="332.4,364.5 332.4,373.8" fill="none" stroke="#111" stroke-width="1.4" />
<polygon points="366.0,402.0 378.0,411.6 378.0,431.6 366.0,422.0" fill="#111" stroke="none" stroke-width="1" />
<polygon points="369.0,405.5 375.0,411.7 375.0,428.1 369.0,419.5" fill="#ececec" stroke="none" stroke-width="1" />
<polyline points="368.0,411.6 376.0,418.4" fill="none" stroke="#111" stroke-width="1.6" />
<polyline points="371.0,405.0 371.0,415.0" fill="none" stroke="#111" stroke-width="1.4" />
<polygon points="136.0,265.7 153.0,271.6 153.0,287.6 136.0,281.7" fill="#111" stroke="none" stroke-width="1" />
<polygon points="139.0,269.2 150.0,273.1 150.0,284.1 139.0,279.2" fill="#ececec" stroke="none" stroke-width="1" />
<polyline points="138.0,272.9 151.0,277.7" fill="none" stroke="#111" stroke-width="1.6" />
<polyline points="141.0,268.7 141.0,274.6" fill="none" stroke="#111" stroke-width="1.4" />
<polygon points="108.4,306.3 163.5,272.5 177.0,277.7 218.0,299.5 230.0,306.8 270.0,335.4 280.0,342.8 320.0,376.8 350.0,405.2 362.0,425.0 365.0,480.0 365.0,480.0 363.6,459.0 358.8,435.4 345.5,420.0 337.0,405.2 320.0,389.0 305.0,374.0 290.0,364.0 270.0,353.2 230.0,335.4 212.5,327.7 181.7,318.8 151.3,312.4 108.4,306.3" fill="#f4f4f4" stroke="#111" stroke-width="1.2" />
<clipPath id="gc"><polygon points="108.4,306.3 151.3,312.4 181.7,318.8 212.5,327.7 230.0,335.4 270.0,353.2 290.0,364.0 305.0,374.0 320.0,389.0 337.0,405.2 345.5,420.0 358.8,435.4 363.6,459.0 365.0,480.0 365.5,607.0 361.5,607.0 355.7,561.0 343.0,520.0 337.0,480.0 335.0,457.5 320.0,446.0 303.0,440.0 283.0,414.0 221.7,386.0 151.0,368.0 108.0,362.0"/></clipPath>
<polygon points="108.4,306.3 151.3,312.4 181.7,318.8 212.5,327.7 230.0,335.4 270.0,353.2 290.0,364.0 305.0,374.0 320.0,389.0 337.0,405.2 345.5,420.0 358.8,435.4 363.6,459.0 365.0,480.0 365.5,607.0 361.5,607.0 355.7,561.0 343.0,520.0 337.0,480.0 335.0,457.5 320.0,446.0 303.0,440.0 283.0,414.0 221.7,386.0 151.0,368.0 108.0,362.0" fill="#f2f2f2" stroke="none" stroke-width="1" />
<g clip-path="url(#gc)">
<polyline points="108.0,250.0 108.0,620.0" fill="none" stroke="#111" stroke-width="2.0" />
<polyline points="117.2,250.0 117.2,620.0" fill="none" stroke="#111" stroke-width="2.0" />
<polyline points="126.4,250.0 126.4,620.0" fill="none" stroke="#111" stroke-width="2.0" />
<polyline points="135.6,250.0 135.6,620.0" fill="none" stroke="#111" stroke-width="2.0" />
<polyline points="144.8,250.0 144.8,620.0" fill="none" stroke="#111" stroke-width="2.0" />
<polyline points="154.0,250.0 154.0,620.0" fill="none" stroke="#111" stroke-width="2.0" />
<polyline points="163.2,250.0 163.2,620.0" fill="none" stroke="#111" stroke-width="2.0" />
<polyline points="172.4,250.0 172.4,620.0" fill="none" stroke="#111" stroke-width="2.0" />
<polyline points="181.6,250.0 181.6,620.0" fill="none" stroke="#111" stroke-width="2.0" />
<polyline points="190.8,250.0 190.8,620.0" fill="none" stroke="#111" stroke-width="2.0" />
<polyline points="200.0,250.0 200.0,620.0" fill="none" stroke="#111" stroke-width="2.0" />
<polyline points="209.2,250.0 209.2,620.0" fill="none" stroke="#111" stroke-width="2.0" />
<polyline points="218.4,250.0 218.4,620.0" fill="none" stroke="#111" stroke-width="2.0" />
<polyline points="227.6,250.0 227.6,620.0" fill="none" stroke="#111" stroke-width="2.0" />
<polyline points="236.8,250.0 236.8,620.0" fill="none" stroke="#111" stroke-width="2.0" />
<polyline points="246.0,250.0 246.0,620.0" fill="none" stroke="#111" stroke-width="2.0" />
<polyline points="255.2,250.0 255.2,620.0" fill="none" stroke="#111" stroke-width="2.0" />
<polyline points="264.4,250.0 264.4,620.0" fill="none" stroke="#111" stroke-width="2.0" />
<polyline points="273.6,250.0 273.6,620.0" fill="none" stroke="#111" stroke-width="2.0" />
<polyline points="282.8,250.0 282.8,620.0" fill="none" stroke="#111" stroke-width="2.0" />
<polyline points="292.0,250.0 292.0,620.0" fill="none" stroke="#111" stroke-width="2.0" />
<polyline points="301.2,250.0 301.2,620.0" fill="none" stroke="#111" stroke-width="2.0" />
<polyline points="310.4,250.0 310.4,620.0" fill="none" stroke="#111" stroke-width="2.0" />
<polyline points="319.6,250.0 319.6,620.0" fill="none" stroke="#111" stroke-width="2.0" />
<polyline points="328.8,250.0 328.8,620.0" fill="none" stroke="#111" stroke-width="2.0" />
<polyline points="338.0,250.0 338.0,620.0" fill="none" stroke="#111" stroke-width="2.0" />
<polyline points="347.2,250.0 347.2,620.0" fill="none" stroke="#111" stroke-width="2.0" />
<polyline points="356.4,250.0 356.4,620.0" fill="none" stroke="#111" stroke-width="2.0" />
<polyline points="365.6,250.0 365.6,620.0" fill="none" stroke="#111" stroke-width="2.0" />
<polyline points="374.8,250.0 374.8,620.0" fill="none" stroke="#111" stroke-width="2.0" />
<polyline points="349.0,250.0 349.0,620.0" fill="none" stroke="#111" stroke-width="1.8" />
<polyline points="353.0,250.0 353.0,620.0" fill="none" stroke="#111" stroke-width="1.8" />
<polyline points="357.0,250.0 357.0,620.0" fill="none" stroke="#111" stroke-width="1.8" />
<polyline points="361.0,250.0 361.0,620.0" fill="none" stroke="#111" stroke-width="1.8" />
<polyline points="364.0,250.0 364.0,620.0" fill="none" stroke="#111" stroke-width="1.8" />
<polyline points="108.4,306.3 151.3,312.4 181.7,318.8 212.5,327.7 230.0,335.4 270.0,353.2 290.0,364.0 305.0,374.0 320.0,389.0 337.0,405.2 370.0,420.5" fill="none" stroke="#111" stroke-width="1.9" />
<polyline points="108.4,312.9 151.3,319.0 181.7,325.4 212.5,334.3 230.0,342.0 270.0,359.8 290.0,370.6 305.0,380.6 320.0,395.6 337.0,411.8 370.0,427.1" fill="none" stroke="#111" stroke-width="1.9" />
<polyline points="108.4,319.5 151.3,325.6 181.7,332.0 212.5,340.9 230.0,348.6 270.0,366.4 290.0,377.2 305.0,387.2 320.0,402.2 337.0,418.4 370.0,433.7" fill="none" stroke="#111" stroke-width="1.9" />
<polyline points="108.4,326.1 151.3,332.2 181.7,338.6 212.5,347.5 230.0,355.2 270.0,373.0 290.0,383.8 305.0,393.8 320.0,408.8 337.0,425.0 370.0,440.3" fill="none" stroke="#111" stroke-width="1.9" />
<polyline points="108.4,332.7 151.3,338.8 181.7,345.2 212.5,354.1 230.0,361.8 270.0,379.6 290.0,390.4 305.0,400.4 320.0,415.4 337.0,431.6 370.0,446.9" fill="none" stroke="#111" stroke-width="1.9" />
<polyline points="108.4,339.3 151.3,345.4 181.7,351.8 212.5,360.7 230.0,368.4 270.0,386.2 290.0,397.0 305.0,407.0 320.0,422.0 337.0,438.2 370.0,453.5" fill="none" stroke="#111" stroke-width="1.9" />
<polyline points="108.4,345.9 151.3,352.0 181.7,358.4 212.5,367.3 230.0,375.0 270.0,392.8 290.0,403.6 305.0,413.6 320.0,428.6 337.0,444.8 370.0,460.1" fill="none" stroke="#111" stroke-width="1.9" />
<polyline points="108.4,352.5 151.3,358.6 181.7,365.0 212.5,373.9 230.0,381.6 270.0,399.4 290.0,410.2 305.0,420.2 320.0,435.2 337.0,451.4 370.0,466.7" fill="none" stroke="#111" stroke-width="1.9" />
<polyline points="108.4,359.1 151.3,365.2 181.7,371.6 212.5,380.5 230.0,388.2 270.0,406.0 290.0,416.8 305.0,426.8 320.0,441.8 337.0,458.0 370.0,473.3" fill="none" stroke="#111" stroke-width="1.9" />
<polyline points="108.4,365.7 151.3,371.8 181.7,378.2 212.5,387.1 230.0,394.8 270.0,412.6 290.0,423.4 305.0,433.4 320.0,448.4 337.0,464.6 370.0,479.9" fill="none" stroke="#111" stroke-width="1.9" />
<polyline points="108.4,372.3 151.3,378.4 181.7,384.8 212.5,393.7 230.0,401.4 270.0,419.2 290.0,430.0 305.0,440.0 320.0,455.0 337.0,471.2 370.0,486.5" fill="none" stroke="#111" stroke-width="1.9" />
<polyline points="108.4,378.9 151.3,385.0 181.7,391.4 212.5,400.3 230.0,408.0 270.0,425.8 290.0,436.6 305.0,446.6 320.0,461.6 337.0,477.8 370.0,493.1" fill="none" stroke="#111" stroke-width="1.9" />
<polyline points="108.4,385.5 151.3,391.6 181.7,398.0 212.5,406.9 230.0,414.6 270.0,432.4 290.0,443.2 305.0,453.2 320.0,468.2 337.0,484.4 370.0,499.7" fill="none" stroke="#111" stroke-width="1.9" />
<polyline points="108.4,392.1 151.3,398.2 181.7,404.6 212.5,413.5 230.0,421.2 270.0,439.0 290.0,449.8 305.0,459.8 320.0,474.8 337.0,491.0 370.0,506.3" fill="none" stroke="#111" stroke-width="1.9" />
<polyline points="108.4,398.7 151.3,404.8 181.7,411.2 212.5,420.1 230.0,427.8 270.0,445.6 290.0,456.4 305.0,466.4 320.0,481.4 337.0,497.6 370.0,512.9" fill="none" stroke="#111" stroke-width="1.9" />
<polyline points="108.4,405.3 151.3,411.4 181.7,417.8 212.5,426.7 230.0,434.4 270.0,452.2 290.0,463.0 305.0,473.0 320.0,488.0 337.0,504.2 370.0,519.5" fill="none" stroke="#111" stroke-width="1.9" />
<polyline points="108.4,411.9 151.3,418.0 181.7,424.4 212.5,433.3 230.0,441.0 270.0,458.8 290.0,469.6 305.0,479.6 320.0,494.6 337.0,510.8 370.0,526.1" fill="none" stroke="#111" stroke-width="1.9" />
<polyline points="108.4,418.5 151.3,424.6 181.7,431.0 212.5,439.9 230.0,447.6 270.0,465.4 290.0,476.2 305.0,486.2 320.0,501.2 337.0,517.4 370.0,532.7" fill="none" stroke="#111" stroke-width="1.9" />
<polyline points="108.4,425.1 151.3,431.2 181.7,437.6 212.5,446.5 230.0,454.2 270.0,472.0 290.0,482.8 305.0,492.8 320.0,507.8 337.0,524.0 370.0,539.3" fill="none" stroke="#111" stroke-width="1.9" />
<polyline points="108.4,431.7 151.3,437.8 181.7,444.2 212.5,453.1 230.0,460.8 270.0,478.6 290.0,489.4 305.0,499.4 320.0,514.4 337.0,530.6 370.0,545.9" fill="none" stroke="#111" stroke-width="1.9" />
<polyline points="108.4,438.3 151.3,444.4 181.7,450.8 212.5,459.7 230.0,467.4 270.0,485.2 290.0,496.0 305.0,506.0 320.0,521.0 337.0,537.2 370.0,552.5" fill="none" stroke="#111" stroke-width="1.9" />
<polyline points="108.4,444.9 151.3,451.0 181.7,457.4 212.5,466.3 230.0,474.0 270.0,491.8 290.0,502.6 305.0,512.6 320.0,527.6 337.0,543.8 370.0,559.1" fill="none" stroke="#111" stroke-width="1.9" />
<polyline points="108.4,451.5 151.3,457.6 181.7,464.0 212.5,472.9 230.0,480.6 270.0,498.4 290.0,509.2 305.0,519.2 320.0,534.2 337.0,550.4 370.0,565.7" fill="none" stroke="#111" stroke-width="1.9" />
<polyline points="108.4,458.1 151.3,464.2 181.7,470.6 212.5,479.5 230.0,487.2 270.0,505.0 290.0,515.8 305.0,525.8 320.0,540.8 337.0,557.0 370.0,572.3" fill="none" stroke="#111" stroke-width="1.9" />
<polyline points="108.4,464.7 151.3,470.8 181.7,477.2 212.5,486.1 230.0,493.8 270.0,511.6 290.0,522.4 305.0,532.4 320.0,547.4 337.0,563.6 370.0,578.9" fill="none" stroke="#111" stroke-width="1.9" />
<polyline points="108.4,471.3 151.3,477.4 181.7,483.8 212.5,492.7 230.0,500.4 270.0,518.2 290.0,529.0 305.0,539.0 320.0,554.0 337.0,570.2 370.0,585.5" fill="none" stroke="#111" stroke-width="1.9" />
<polyline points="108.4,477.9 151.3,484.0 181.7,490.4 212.5,499.3 230.0,507.0 270.0,524.8 290.0,535.6 305.0,545.6 320.0,560.6 337.0,576.8 370.0,592.1" fill="none" stroke="#111" stroke-width="1.9" />
<polyline points="108.4,484.5 151.3,490.6 181.7,497.0 212.5,505.9 230.0,513.6 270.0,531.4 290.0,542.2 305.0,552.2 320.0,567.2 337.0,583.4 370.0,598.7" fill="none" stroke="#111" stroke-width="1.9" />
<polyline points="108.4,491.1 151.3,497.2 181.7,503.6 212.5,512.5 230.0,520.2 270.0,538.0 290.0,548.8 305.0,558.8 320.0,573.8 337.0,590.0 370.0,605.3" fill="none" stroke="#111" stroke-width="1.9" />
<polyline points="108.4,497.7 151.3,503.8 181.7,510.2 212.5,519.1 230.0,526.8 270.0,544.6 290.0,555.4 305.0,565.4 320.0,580.4 337.0,596.6 370.0,611.9" fill="none" stroke="#111" stroke-width="1.9" />
<polyline points="108.4,504.3 151.3,510.4 181.7,516.8 212.5,525.7 230.0,533.4 270.0,551.2 290.0,562.0 305.0,572.0 320.0,587.0 337.0,603.2 370.0,618.5" fill="none" stroke="#111" stroke-width="1.9" />
<polyline points="108.4,510.9 151.3,517.0 181.7,523.4 212.5,532.3 230.0,540.0 270.0,557.8 290.0,568.6 305.0,578.6 320.0,593.6 337.0,609.8 370.0,625.1" fill="none" stroke="#111" stroke-width="1.9" />
<polyline points="108.4,517.5 151.3,523.6 181.7,530.0 212.5,538.9 230.0,546.6 270.0,564.4 290.0,575.2 305.0,585.2 320.0,600.2 337.0,616.4 370.0,631.7" fill="none" stroke="#111" stroke-width="1.9" />
<polyline points="108.4,524.1 151.3,530.2 181.7,536.6 212.5,545.5 230.0,553.2 270.0,571.0 290.0,581.8 305.0,591.8 320.0,606.8 337.0,623.0 370.0,638.3" fill="none" stroke="#111" stroke-width="1.9" />
<polyline points="108.4,530.7 151.3,536.8 181.7,543.2 212.5,552.1 230.0,559.8 270.0,577.6 290.0,588.4 305.0,598.4 320.0,613.4 337.0,629.6 370.0,644.9" fill="none" stroke="#111" stroke-width="1.9" />
<polyline points="108.4,537.3 151.3,543.4 181.7,549.8 212.5,558.7 230.0,566.4 270.0,584.2 290.0,595.0 305.0,605.0 320.0,620.0 337.0,636.2 370.0,651.5" fill="none" stroke="#111" stroke-width="1.9" />
<polyline points="108.4,543.9 151.3,550.0 181.7,556.4 212.5,565.3 230.0,573.0 270.0,590.8 290.0,601.6 305.0,611.6 320.0,626.6 337.0,642.8 370.0,658.1" fill="none" stroke="#111" stroke-width="1.9" />
<polyline points="108.4,550.5 151.3,556.6 181.7,563.0 212.5,571.9 230.0,579.6 270.0,597.4 290.0,608.2 305.0,618.2 320.0,633.2 337.0,649.4 370.0,664.7" fill="none" stroke="#111" stroke-width="1.9" />
<polyline points="108.4,557.1 151.3,563.2 181.7,569.6 212.5,578.5 230.0,586.2 270.0,604.0 290.0,614.8 305.0,624.8 320.0,639.8 337.0,656.0 370.0,671.3" fill="none" stroke="#111" stroke-width="1.9" />
<polyline points="108.4,563.7 151.3,569.8 181.7,576.2 212.5,585.1 230.0,592.8 270.0,610.6 290.0,621.4 305.0,631.4 320.0,646.4 337.0,662.6 370.0,677.9" fill="none" stroke="#111" stroke-width="1.9" />
</g>
<polyline points="108.4,306.3 151.3,312.4 181.7,318.8 212.5,327.7 230.0,335.4 270.0,353.2 290.0,364.0 305.0,374.0 320.0,389.0 337.0,405.2 345.5,420.0 358.8,435.4 363.6,459.0 365.0,480.0 365.5,607.0" fill="none" stroke="#111" stroke-width="1.8" />
<polyline points="361.5,607.0 355.7,561.0 343.0,520.0 337.0,480.0 335.0,457.5 320.0,446.0 303.0,440.0 283.0,414.0 221.7,386.0 151.0,368.0 108.0,362.0" fill="none" stroke="#111" stroke-width="1.8" />
<polyline points="108.0,306.0 108.0,362.0" fill="none" stroke="#111" stroke-width="1.8" />
<polyline points="108.0,366.0 151.0,372.0 221.7,389.5 283.0,418.0 303.0,440.0" fill="none" stroke="#111" stroke-width="1.2" />
<polygon points="180.0,374.0 193.0,380.5 193.0,400.5 180.0,394.0" fill="#151515" stroke="none" stroke-width="1" />
<polygon points="183.0,378.0 190.0,382.0 190.0,396.5 183.0,388.0" fill="#e4e4e4" stroke="none" stroke-width="1" />
<polyline points="182.0,384.0 191.0,390.5" fill="none" stroke="#151515" stroke-width="1.4" />
<polygon points="204.0,384.0 222.0,393.0 222.0,417.0 204.0,408.0" fill="#151515" stroke="none" stroke-width="1" />
<polygon points="207.0,388.0 219.0,394.5 219.0,413.0 207.0,402.0" fill="#e4e4e4" stroke="none" stroke-width="1" />
<polyline points="206.0,396.0 220.0,405.0" fill="none" stroke="#151515" stroke-width="1.4" />
<polygon points="231.0,397.0 248.0,405.5 248.0,429.5 231.0,421.0" fill="#151515" stroke="none" stroke-width="1" />
<polygon points="234.0,401.0 245.0,407.0 245.0,425.5 234.0,415.0" fill="#e4e4e4" stroke="none" stroke-width="1" />
<polyline points="233.0,409.0 246.0,417.5" fill="none" stroke="#151515" stroke-width="1.4" />
<polygon points="257.0,414.0 274.0,422.5 274.0,446.5 257.0,438.0" fill="#151515" stroke="none" stroke-width="1" />
<polygon points="260.0,418.0 271.0,424.0 271.0,442.5 260.0,432.0" fill="#e4e4e4" stroke="none" stroke-width="1" />
<polyline points="259.0,426.0 272.0,434.5" fill="none" stroke="#151515" stroke-width="1.4" />
<polygon points="282.0,430.0 300.0,439.0 300.0,469.0 282.0,460.0" fill="#151515" stroke="none" stroke-width="1" />
<polygon points="285.0,434.0 297.0,440.5 297.0,465.0 285.0,454.0" fill="#e4e4e4" stroke="none" stroke-width="1" />
<polyline points="284.0,445.0 298.0,454.0" fill="none" stroke="#151515" stroke-width="1.4" />
<polygon points="305.5,449.0 320.5,456.5 320.5,478.5 305.5,471.0" fill="#151515" stroke="none" stroke-width="1" />
<polygon points="308.5,453.0 317.5,458.0 317.5,474.5 308.5,465.0" fill="#e4e4e4" stroke="none" stroke-width="1" />
<polyline points="307.5,460.0 318.5,467.5" fill="none" stroke="#151515" stroke-width="1.4" />
<polygon points="305.5,478.0 321.5,486.0 321.5,514.0 305.5,506.0" fill="#151515" stroke="none" stroke-width="1" />
<polygon points="308.5,482.0 318.5,487.5 318.5,510.0 308.5,500.0" fill="#e4e4e4" stroke="none" stroke-width="1" />
<polyline points="307.5,492.0 319.5,500.0" fill="none" stroke="#151515" stroke-width="1.4" />
<polygon points="323.0,471.0 336.0,477.5 336.0,504.5 323.0,498.0" fill="#151515" stroke="none" stroke-width="1" />
<polygon points="326.0,475.0 333.0,479.0 333.0,500.5 326.0,492.0" fill="#e4e4e4" stroke="none" stroke-width="1" />
<polyline points="325.0,484.5 334.0,491.0" fill="none" stroke="#151515" stroke-width="1.4" />
<polygon points="323.0,505.0 336.0,511.5 336.0,539.5 323.0,533.0" fill="#151515" stroke="none" stroke-width="1" />
<polygon points="326.0,509.0 333.0,513.0 333.0,535.5 326.0,527.0" fill="#e4e4e4" stroke="none" stroke-width="1" />
<polyline points="325.0,519.0 334.0,525.5" fill="none" stroke="#151515" stroke-width="1.4" />
<polygon points="363.0,471.0 389.0,485.2 389.0,613.2 363.0,599.0" fill="#111" stroke="none" stroke-width="1" />
<polygon points="364.9,472.9 375.0,478.4 375.0,487.1 364.9,481.5" fill="#fff" stroke="none" stroke-width="1" />
<polygon points="364.9,483.4 375.0,489.0 375.0,497.6 364.9,492.0" fill="#fff" stroke="none" stroke-width="1" />
<polygon points="364.9,493.9 375.0,499.5 375.0,508.1 364.9,502.5" fill="#fff" stroke="none" stroke-width="1" />
<polygon points="364.9,504.4 375.0,510.0 375.0,518.6 364.9,513.0" fill="#fff" stroke="none" stroke-width="1" />
<polygon points="364.9,514.9 375.0,520.5 375.0,529.1 364.9,523.5" fill="#fff" stroke="none" stroke-width="1" />
<polygon points="364.9,525.4 375.0,531.0 375.0,539.6 364.9,534.0" fill="#fff" stroke="none" stroke-width="1" />
<polygon points="364.9,535.9 375.0,541.5 375.0,550.1 364.9,544.6" fill="#fff" stroke="none" stroke-width="1" />
<polygon points="364.9,546.5 375.0,552.0 375.0,560.6 364.9,555.1" fill="#fff" stroke="none" stroke-width="1" />
<polygon points="364.9,557.0 375.0,562.5 375.0,571.1 364.9,565.6" fill="#fff" stroke="none" stroke-width="1" />
<polygon points="364.9,567.5 375.0,573.0 375.0,581.6 364.9,576.1" fill="#fff" stroke="none" stroke-width="1" />
<polygon points="364.9,578.0 375.0,583.5 375.0,592.1 364.9,586.6" fill="#fff" stroke="none" stroke-width="1" />
<polygon points="364.9,588.5 375.0,594.0 375.0,602.6 364.9,597.1" fill="#fff" stroke="none" stroke-width="1" />
<polygon points="376.9,472.9 387.1,478.4 387.1,487.1 376.9,481.5" fill="#fff" stroke="none" stroke-width="1" />
<polygon points="376.9,483.4 387.1,489.0 387.1,497.6 376.9,492.0" fill="#fff" stroke="none" stroke-width="1" />
<polygon points="376.9,493.9 387.1,499.5 387.1,508.1 376.9,502.5" fill="#fff" stroke="none" stroke-width="1" />
<polygon points="376.9,504.4 387.1,510.0 387.1,518.6 376.9,513.0" fill="#fff" stroke="none" stroke-width="1" />
<polygon points="376.9,514.9 387.1,520.5 387.1,529.1 376.9,523.5" fill="#fff" stroke="none" stroke-width="1" />
<polygon points="376.9,525.4 387.1,531.0 387.1,539.6 376.9,534.0" fill="#fff" stroke="none" stroke-width="1" />
<polygon points="376.9,535.9 387.1,541.5 387.1,550.1 376.9,544.6" fill="#fff" stroke="none" stroke-width="1" />
<polygon points="376.9,546.5 387.1,552.0 387.1,560.6 376.9,555.1" fill="#fff" stroke="none" stroke-width="1" />
<polygon points="376.9,557.0 387.1,562.5 387.1,571.1 376.9,565.6" fill="#fff" stroke="none" stroke-width="1" />
<polygon points="376.9,567.5 387.1,573.0 387.1,581.6 376.9,576.1" fill="#fff" stroke="none" stroke-width="1" />
<polygon points="376.9,578.0 387.1,583.5 387.1,592.1 376.9,586.6" fill="#fff" stroke="none" stroke-width="1" />
<polygon points="376.9,588.5 387.1,594.0 387.1,602.6 376.9,597.1" fill="#fff" stroke="none" stroke-width="1" />
<polygon points="205.0,444.0 293.0,488.0 205.0,463.0" fill="#7b98dc" stroke="none" stroke-width="1" />
<polyline points="212.0,450.5 212.0,465.0" fill="none" stroke="#222" stroke-width="1.3" />
<polyline points="222.0,455.5 222.0,467.8" fill="none" stroke="#222" stroke-width="1.3" />
<polyline points="232.0,460.5 232.0,470.6" fill="none" stroke="#222" stroke-width="1.3" />
<polygon points="147.0,392.0 205.0,424.0 205.0,463.0 149.0,429.0" fill="#151515" stroke="none" stroke-width="1" />
<polygon points="148.5,394.3 152.1,396.3 152.3,400.7 148.7,398.7" fill="#f4f4f4" stroke="none" stroke-width="1" />
<polygon points="148.9,401.7 152.5,403.7 152.7,408.2 149.1,406.1" fill="#f4f4f4" stroke="none" stroke-width="1" />
<polygon points="149.3,409.1 152.8,411.1 153.0,415.6 149.5,413.5" fill="#f4f4f4" stroke="none" stroke-width="1" />
<polygon points="149.7,416.5 153.2,418.6 153.4,423.0 149.9,420.9" fill="#f4f4f4" stroke="none" stroke-width="1" />
<polygon points="150.1,423.9 153.6,426.0 153.8,430.5 150.3,428.3" fill="#f4f4f4" stroke="none" stroke-width="1" />
<polygon points="154.9,397.8 158.5,399.8 158.7,404.3 155.1,402.3" fill="#f4f4f4" stroke="none" stroke-width="1" />
<polygon points="155.3,405.3 158.9,407.3 159.0,411.8 155.5,409.8" fill="#f4f4f4" stroke="none" stroke-width="1" />
<polygon points="155.6,412.7 159.2,414.8 159.4,419.3 155.8,417.2" fill="#f4f4f4" stroke="none" stroke-width="1" />
<polygon points="156.0,420.2 159.5,422.3 159.7,426.7 156.2,424.7" fill="#f4f4f4" stroke="none" stroke-width="1" />
<polygon points="156.3,427.6 159.8,429.7 160.0,434.2 156.5,432.1" fill="#f4f4f4" stroke="none" stroke-width="1" />
<polygon points="161.4,401.4 165.0,403.4 165.1,407.9 161.5,405.9" fill="#f4f4f4" stroke="none" stroke-width="1" />
<polygon points="161.7,408.9 165.2,410.9 165.4,415.4 161.8,413.4" fill="#f4f4f4" stroke="none" stroke-width="1" />
<polygon points="162.0,416.4 165.5,418.4 165.7,423.0 162.2,420.9" fill="#f4f4f4" stroke="none" stroke-width="1" />
<polygon points="162.3,423.9 165.8,426.0 166.0,430.5 162.5,428.4" fill="#f4f4f4" stroke="none" stroke-width="1" />
<polygon points="162.6,431.4 166.1,433.5 166.2,438.0 162.8,435.9" fill="#f4f4f4" stroke="none" stroke-width="1" />
<polygon points="167.8,405.0 171.4,407.0 171.5,411.5 168.0,409.5" fill="#f4f4f4" stroke="none" stroke-width="1" />
<polygon points="168.1,412.5 171.6,414.5 171.8,419.1 168.2,417.0" fill="#f4f4f4" stroke="none" stroke-width="1" />
<polygon points="168.3,420.0 171.9,422.1 172.0,426.6 168.5,424.6" fill="#f4f4f4" stroke="none" stroke-width="1" />
<polygon points="168.6,427.6 172.1,429.7 172.2,434.2 168.7,432.1" fill="#f4f4f4" stroke="none" stroke-width="1" />
<polygon points="168.8,435.1 172.3,437.2 172.5,441.8 169.0,439.7" fill="#f4f4f4" stroke="none" stroke-width="1" />
<polygon points="174.2,408.5 177.8,410.5 178.0,415.1 174.4,413.1" fill="#f4f4f4" stroke="none" stroke-width="1" />
<polygon points="174.5,416.1 178.0,418.1 178.1,422.7 174.6,420.7" fill="#f4f4f4" stroke="none" stroke-width="1" />
<polygon points="174.7,423.7 178.2,425.7 178.3,430.3 174.8,428.2" fill="#f4f4f4" stroke="none" stroke-width="1" />
<polygon points="174.9,431.3 178.4,433.4 178.5,437.9 175.0,435.8" fill="#f4f4f4" stroke="none" stroke-width="1" />
<polygon points="175.1,438.9 178.6,441.0 178.7,445.5 175.2,443.4" fill="#f4f4f4" stroke="none" stroke-width="1" />
<polygon points="180.7,412.1 184.3,414.1 184.4,418.7 180.8,416.7" fill="#f4f4f4" stroke="none" stroke-width="1" />
<polygon points="180.8,419.7 184.4,421.7 184.5,426.3 180.9,424.3" fill="#f4f4f4" stroke="none" stroke-width="1" />
<polygon points="181.0,427.4 184.6,429.4 184.6,434.0 181.1,431.9" fill="#f4f4f4" stroke="none" stroke-width="1" />
<polygon points="181.2,435.0 184.7,437.1 184.8,441.6 181.3,439.6" fill="#f4f4f4" stroke="none" stroke-width="1" />
<polygon points="181.3,442.6 184.8,444.7 184.9,449.3 181.4,447.2" fill="#f4f4f4" stroke="none" stroke-width="1" />
<polygon points="187.1,415.7 190.7,417.6 190.8,422.3 187.2,420.3" fill="#f4f4f4" stroke="none" stroke-width="1" />
<polygon points="187.2,423.3 190.8,425.3 190.9,430.0 187.3,427.9" fill="#f4f4f4" stroke="none" stroke-width="1" />
<polygon points="187.4,431.0 190.9,433.0 191.0,437.7 187.4,435.6" fill="#f4f4f4" stroke="none" stroke-width="1" />
<polygon points="187.5,438.7 191.0,440.8 191.1,445.4 187.6,443.3" fill="#f4f4f4" stroke="none" stroke-width="1" />
<polygon points="187.6,446.4 191.1,448.5 191.2,453.1 187.7,451.0" fill="#f4f4f4" stroke="none" stroke-width="1" />
<polygon points="193.5,419.2 197.1,421.2 197.2,425.9 193.6,423.8" fill="#f4f4f4" stroke="none" stroke-width="1" />
<polygon points="193.6,426.9 197.2,429.0 197.2,433.6 193.7,431.6" fill="#f4f4f4" stroke="none" stroke-width="1" />
<polygon points="193.7,434.7 197.3,436.7 197.3,441.4 193.8,439.3" fill="#f4f4f4" stroke="none" stroke-width="1" />
<polygon points="193.8,442.4 197.3,444.4 197.3,449.1 193.8,447.0" fill="#f4f4f4" stroke="none" stroke-width="1" />
<polygon points="193.9,450.1 197.4,452.2 197.4,456.8 193.9,454.7" fill="#f4f4f4" stroke="none" stroke-width="1" />
<polygon points="200.0,422.8 203.6,424.8 203.6,429.4 200.0,427.4" fill="#f4f4f4" stroke="none" stroke-width="1" />
<polygon points="200.0,430.5 203.6,432.6 203.6,437.2 200.0,435.2" fill="#f4f4f4" stroke="none" stroke-width="1" />
<polygon points="200.0,438.3 203.6,440.4 203.6,445.0 200.1,443.0" fill="#f4f4f4" stroke="none" stroke-width="1" />
<polygon points="200.1,446.1 203.6,448.1 203.6,452.8 200.1,450.7" fill="#f4f4f4" stroke="none" stroke-width="1" />
<polygon points="200.1,453.8 203.6,455.9 203.6,460.6 200.1,458.5" fill="#f4f4f4" stroke="none" stroke-width="1" />
<polygon points="205.0,424.0 293.5,467.0 293.5,488.0 205.0,444.0" fill="#151515" stroke="none" stroke-width="1" />
<polygon points="206.3,426.0 209.6,427.6 209.6,431.6 206.3,430.0" fill="#f4f4f4" stroke="none" stroke-width="1" />
<polygon points="206.3,432.6 209.6,434.3 209.6,438.3 206.3,436.6" fill="#f4f4f4" stroke="none" stroke-width="1" />
<polygon points="206.3,439.3 209.6,440.9 209.6,445.0 206.3,443.3" fill="#f4f4f4" stroke="none" stroke-width="1" />
<polygon points="212.2,428.8 215.5,430.4 215.5,434.5 212.2,432.9" fill="#f4f4f4" stroke="none" stroke-width="1" />
<polygon points="212.2,435.5 215.5,437.2 215.5,441.2 212.2,439.5" fill="#f4f4f4" stroke="none" stroke-width="1" />
<polygon points="212.2,442.2 215.5,443.9 215.5,447.9 212.2,446.2" fill="#f4f4f4" stroke="none" stroke-width="1" />
<polygon points="218.1,431.7 221.4,433.3 221.4,437.4 218.1,435.7" fill="#f4f4f4" stroke="none" stroke-width="1" />
<polygon points="218.1,438.4 221.4,440.0 221.4,444.1 218.1,442.5" fill="#f4f4f4" stroke="none" stroke-width="1" />
<polygon points="218.1,445.1 221.4,446.8 221.4,450.8 218.1,449.2" fill="#f4f4f4" stroke="none" stroke-width="1" />
<polygon points="224.0,434.6 227.3,436.2 227.3,440.2 224.0,438.6" fill="#f4f4f4" stroke="none" stroke-width="1" />
<polygon points="224.0,441.3 227.3,442.9 227.3,447.0 224.0,445.4" fill="#f4f4f4" stroke="none" stroke-width="1" />
<polygon points="224.0,448.1 227.3,449.7 227.3,453.7 224.0,452.1" fill="#f4f4f4" stroke="none" stroke-width="1" />
<polygon points="229.9,437.4 233.2,439.1 233.2,443.1 229.9,441.5" fill="#f4f4f4" stroke="none" stroke-width="1" />
<polygon points="229.9,444.2 233.2,445.8 233.2,449.9 229.9,448.3" fill="#f4f4f4" stroke="none" stroke-width="1" />
<polygon points="229.9,451.0 233.2,452.6 233.2,456.7 229.9,455.0" fill="#f4f4f4" stroke="none" stroke-width="1" />
<polygon points="235.8,440.3 239.1,441.9 239.1,446.0 235.8,444.4" fill="#f4f4f4" stroke="none" stroke-width="1" />
<polygon points="235.8,447.1 239.1,448.7 239.1,452.8 235.8,451.2" fill="#f4f4f4" stroke="none" stroke-width="1" />
<polygon points="235.8,453.9 239.1,455.5 239.1,459.6 235.8,458.0" fill="#f4f4f4" stroke="none" stroke-width="1" />
<polygon points="241.7,443.2 245.0,444.8 245.0,448.9 241.7,447.3" fill="#f4f4f4" stroke="none" stroke-width="1" />
<polygon points="241.7,450.0 245.0,451.6 245.0,455.7 241.7,454.1" fill="#f4f4f4" stroke="none" stroke-width="1" />
<polygon points="241.7,456.8 245.0,458.4 245.0,462.5 241.7,460.9" fill="#f4f4f4" stroke="none" stroke-width="1" />
<polygon points="247.6,446.1 250.9,447.7 250.9,451.8 247.6,450.2" fill="#f4f4f4" stroke="none" stroke-width="1" />
<polygon points="247.6,452.9 250.9,454.5 250.9,458.6 247.6,457.0" fill="#f4f4f4" stroke="none" stroke-width="1" />
<polygon points="247.6,459.7 250.9,461.3 250.9,465.5 247.6,463.8" fill="#f4f4f4" stroke="none" stroke-width="1" />
<polygon points="253.5,448.9 256.8,450.5 256.8,454.7 253.5,453.0" fill="#f4f4f4" stroke="none" stroke-width="1" />
<polygon points="253.5,455.8 256.8,457.4 256.8,461.5 253.5,459.9" fill="#f4f4f4" stroke="none" stroke-width="1" />
<polygon points="253.5,462.6 256.8,464.3 256.8,468.4 253.5,466.7" fill="#f4f4f4" stroke="none" stroke-width="1" />
<polygon points="259.4,451.8 262.7,453.4 262.7,457.5 259.4,455.9" fill="#f4f4f4" stroke="none" stroke-width="1" />
<polygon points="259.4,458.7 262.7,460.3 262.7,464.4 259.4,462.8" fill="#f4f4f4" stroke="none" stroke-width="1" />
<polygon points="259.4,465.5 262.7,467.2 262.7,471.3 259.4,469.7" fill="#f4f4f4" stroke="none" stroke-width="1" />
<polygon points="265.3,454.7 268.6,456.3 268.6,460.4 265.3,458.8" fill="#f4f4f4" stroke="none" stroke-width="1" />
<polygon points="265.3,461.6 268.6,463.2 268.6,467.3 265.3,465.7" fill="#f4f4f4" stroke="none" stroke-width="1" />
<polygon points="265.3,468.5 268.6,470.1 268.6,474.2 265.3,472.6" fill="#f4f4f4" stroke="none" stroke-width="1" />
<polygon points="271.2,457.5 274.5,459.2 274.5,463.3 271.2,461.7" fill="#f4f4f4" stroke="none" stroke-width="1" />
<polygon points="271.2,464.5 274.5,466.1 274.5,470.2 271.2,468.6" fill="#f4f4f4" stroke="none" stroke-width="1" />
<polygon points="271.2,471.4 274.5,473.0 274.5,477.2 271.2,475.5" fill="#f4f4f4" stroke="none" stroke-width="1" />
<polygon points="277.1,460.4 280.4,462.0 280.4,466.2 277.1,464.6" fill="#f4f4f4" stroke="none" stroke-width="1" />
<polygon points="277.1,467.4 280.4,469.0 280.4,473.1 277.1,471.5" fill="#f4f4f4" stroke="none" stroke-width="1" />
<polygon points="277.1,474.3 280.4,475.9 280.4,480.1 277.1,478.5" fill="#f4f4f4" stroke="none" stroke-width="1" />
<polygon points="283.0,463.3 286.3,464.9 286.3,469.1 283.0,467.5" fill="#f4f4f4" stroke="none" stroke-width="1" />
<polygon points="283.0,470.2 286.3,471.9 286.3,476.1 283.0,474.4" fill="#f4f4f4" stroke="none" stroke-width="1" />
<polygon points="283.0,477.2 286.3,478.8 286.3,483.0 283.0,481.4" fill="#f4f4f4" stroke="none" stroke-width="1" />
<polygon points="288.9,466.2 292.2,467.8 292.2,472.0 288.9,470.4" fill="#f4f4f4" stroke="none" stroke-width="1" />
<polygon points="288.9,473.1 292.2,474.8 292.2,479.0 288.9,477.3" fill="#f4f4f4" stroke="none" stroke-width="1" />
<polygon points="288.9,480.1 292.2,481.8 292.2,486.0 288.9,484.3" fill="#f4f4f4" stroke="none" stroke-width="1" />
<polygon points="293.5,467.0 301.0,463.0 301.0,484.0 293.5,488.0" fill="#333" stroke="#111" stroke-width="1" />
<polygon points="153.3,392.0 174.0,380.3 301.0,461.0 293.5,467.0" fill="#d9d9d9" stroke="#111" stroke-width="1" />
<polygon points="141.0,421.0 154.0,414.0 174.0,428.0 172.0,438.0" fill="#e6e6e6" stroke="#111" stroke-width="1" />
<polygon points="50.5,435.0 67.0,425.0 112.0,447.0 112.0,456.0 96.0,464.0 50.5,442.0" fill="#7d9be0" stroke="#111" stroke-width="0.9" fill-opacity="0.6"/>
<polygon points="54.0,435.0 67.0,428.0 108.0,448.0 96.0,455.0" fill="none" stroke="#eee" stroke-width="1.6" />
<polyline points="45.0,445.0 60.0,460.0 90.0,472.0 120.0,470.0" fill="none" stroke="#3558c8" stroke-width="0.8" />
<polyline points="120.0,451.0 141.8,443.6" fill="none" stroke="#3a52a8" stroke-width="1.6" stroke-opacity="0.8"/>
<polyline points="136.3,476.3 174.5,454.5" fill="none" stroke="#3a52a8" stroke-width="1.6" stroke-opacity="0.8"/>
<polyline points="174.5,485.4 207.0,467.0" fill="none" stroke="#3a52a8" stroke-width="1.6" stroke-opacity="0.8"/>
<polyline points="209.0,498.0 252.6,472.7" fill="none" stroke="#3a52a8" stroke-width="1.6" stroke-opacity="0.8"/>
<polyline points="238.0,512.7 279.9,492.7" fill="none" stroke="#3a52a8" stroke-width="1.6" stroke-opacity="0.8"/>
<polyline points="269.0,527.0 301.7,509.0" fill="none" stroke="#3a52a8" stroke-width="1.6" stroke-opacity="0.8"/>
<polyline points="294.4,543.5 329.0,529.0" fill="none" stroke="#3a52a8" stroke-width="1.6" stroke-opacity="0.8"/>
<polyline points="307.0,570.8 340.0,549.0" fill="none" stroke="#3a52a8" stroke-width="1.6" stroke-opacity="0.8"/>
<polyline points="160.0,501.8 200.0,512.0 229.0,530.8 260.0,555.0 283.5,589.0 300.0,615.0" fill="none" stroke="#3a52a8" stroke-width="0.9" />
<polyline points="160.0,489.0 200.0,497.0 247.0,523.6" fill="none" stroke="#2a3a80" stroke-width="1.0" />
<polyline points="160.0,493.0 200.0,501.0 247.0,527.5" fill="none" stroke="#5a70c0" stroke-width="0.8" />
<polyline points="160.0,489.0 160.0,501.8" fill="none" stroke="#2a3a80" stroke-width="0.8" />
<polygon points="245.3,529.0 245.3,537.0 260.0,555.0 272.0,570.0 283.5,586.0 305.3,573.0 305.3,565.3 283.5,578.0 272.0,562.0 260.0,547.0" fill="#9fb4e8" stroke="#2a3a80" stroke-width="0.8" fill-opacity="0.7"/>
<polyline points="245.3,529.0 258.0,523.6 275.0,538.0 292.0,553.0 305.3,565.3 283.5,578.0 272.0,562.0 260.0,547.0 245.3,529.0" fill="none" stroke="#111" stroke-width="5" stroke-linejoin="round"/>
<polyline points="245.3,529.0 258.0,523.6 275.0,538.0 292.0,553.0 305.3,565.3 283.5,578.0 272.0,562.0 260.0,547.0 245.3,529.0" fill="none" stroke="#f0f0f0" stroke-width="2.6" stroke-linejoin="round"/>
<polygon points="87.7,404.0 90.2,437.0 85.2,437.0" fill="#f4f4f4" stroke="#222" stroke-width="0.7" />
<ellipse cx="87.7" cy="439" rx="3.5" ry="2" fill="none" stroke="#333" stroke-width="0.7"/>
<polygon points="77.0,418.0 79.5,449.0 74.5,449.0" fill="#f4f4f4" stroke="#222" stroke-width="0.7" />
<ellipse cx="77" cy="451" rx="3.5" ry="2" fill="none" stroke="#333" stroke-width="0.7"/>
<polygon points="131.6,480.0 134.1,513.7 129.1,513.7" fill="#f4f4f4" stroke="#222" stroke-width="0.7" />
<ellipse cx="131.6" cy="515.7" rx="3.5" ry="2" fill="none" stroke="#333" stroke-width="0.7"/>
<polygon points="153.5,461.0 156.0,494.6 151.0,494.6" fill="#f4f4f4" stroke="#222" stroke-width="0.7" />
<ellipse cx="153.5" cy="496.6" rx="3.5" ry="2" fill="none" stroke="#333" stroke-width="0.7"/>
<polygon points="195.0,461.0 197.5,494.6 192.5,494.6" fill="#f4f4f4" stroke="#222" stroke-width="0.7" />
<ellipse cx="195" cy="496.6" rx="3.5" ry="2" fill="none" stroke="#333" stroke-width="0.7"/>
<polygon points="233.0,480.0 235.5,511.0 230.5,511.0" fill="#f4f4f4" stroke="#222" stroke-width="0.7" />
<ellipse cx="233" cy="513" rx="3.5" ry="2" fill="none" stroke="#333" stroke-width="0.7"/>
<polygon points="261.7,509.0 264.2,540.0 259.2,540.0" fill="#f4f4f4" stroke="#222" stroke-width="0.7" />
<ellipse cx="261.7" cy="542" rx="3.5" ry="2" fill="none" stroke="#333" stroke-width="0.7"/>
<polygon points="290.0,535.0 292.5,566.0 287.5,566.0" fill="#f4f4f4" stroke="#222" stroke-width="0.7" />
<ellipse cx="290" cy="568" rx="3.5" ry="2" fill="none" stroke="#333" stroke-width="0.7"/>
<polygon points="326.0,598.0 361.0,607.0 382.7,613.0 438.7,642.7 439.0,651.0 408.5,668.0 351.0,634.0 336.0,612.0" fill="#dcdcdc" stroke="#111" stroke-width="0.8" />
<polygon points="382.7,590.0 438.7,618.0 438.7,642.7 382.7,613.0" fill="#d6d6d6" stroke="#111" stroke-width="0.8" />
<polygon points="426.5,605.7 407.0,595.1 407.0,619.1 426.5,629.7" fill="#111" stroke="none" stroke-width="1" />
<polygon points="424.3,606.7 409.2,598.5 409.2,607.2 424.3,615.4" fill="#fff" stroke="none" stroke-width="1" />
<polygon points="424.3,617.6 409.2,609.4 409.2,618.1 424.3,626.3" fill="#fff" stroke="none" stroke-width="1" />
<polygon points="321.4,620.5 382.7,652.0 408.5,665.0 435.8,648.0 435.8,656.0 408.5,676.6 379.7,663.3 321.4,633.8" fill="#eeeeee" stroke="#111" stroke-width="1" />
<polygon points="321.4,633.8 379.7,663.3 408.5,676.6 438.7,673.7 439.0,651.0 408.5,668.0" fill="#7090dc" stroke="#2a4fc8" stroke-width="0.6" fill-opacity="0.5"/>
<polyline points="336.0,612.4 321.4,620.5 382.7,652.0 382.7,656.0" fill="none" stroke="#111" stroke-width="5.5" stroke-linejoin="round"/>
<polyline points="336.0,612.4 321.4,620.5 382.7,652.0 382.7,656.0" fill="none" stroke="#f2f2f2" stroke-width="3" />
<polyline points="351.0,629.4 363.5,624.0 435.8,646.3 408.5,661.8 351.0,629.4" fill="none" stroke="#111" stroke-width="5.5" stroke-linejoin="round"/>
<polyline points="351.0,629.4 363.5,624.0 435.8,646.3 408.5,661.8 351.0,629.4" fill="none" stroke="#f2f2f2" stroke-width="3" />
<polygon points="336.0,620.0 382.0,645.0 382.0,650.0 330.0,623.0" fill="#6f8fdc" stroke="none" stroke-width="1" fill-opacity="0.7"/>
<polygon points="340.6,601.0 342.8,629.4 338.4,629.4" fill="#f4f4f4" stroke="#222" stroke-width="0.7" />
<polygon points="380.4,619.0 382.6,644.0 378.2,644.0" fill="#f4f4f4" stroke="#222" stroke-width="0.7" />
<polygon points="405.5,633.8 407.7,660.4 403.3,660.4" fill="#f4f4f4" stroke="#222" stroke-width="0.7" />
<polygon points="312.0,560.0 330.0,553.0 362.0,590.0 361.0,607.0 336.0,600.0" fill="#dadada" stroke="#111" stroke-width="0.8" />
<polyline points="302.0,560.0 318.0,585.0 336.0,606.0" fill="none" stroke="#111" stroke-width="1.3" />
<polyline points="306.0,556.0 322.0,580.0 340.0,601.0" fill="none" stroke="#111" stroke-width="1" />
<polyline points="318.0,570.0 350.0,556.0" fill="none" stroke="#111" stroke-width="1.2" />
<polyline points="326.0,584.0 360.0,570.0" fill="none" stroke="#111" stroke-width="1.2" />
<defs><radialGradient id="cubesh" cx="0.5" cy="0.5" r="0.5"><stop offset="0" stop-color="#3050b0" stop-opacity="0.35"/><stop offset="1" stop-color="#3050b0" stop-opacity="0"/></radialGradient><linearGradient id="cubel" x1="0" y1="0" x2="0" y2="1"><stop offset="0" stop-color="#f2f2f2"/><stop offset="1" stop-color="#d2d6e2"/></linearGradient></defs>
<path d="M555,148 a61.9,35.6 0 1,0 123.8,0 a61.9,35.6 0 1,0 -123.8,0 Z M568.7,148 a48.2,27 0 1,1 96.4,0 a48.2,27 0 1,1 -96.4,0 Z" fill="#ffffff" fill-opacity="0.4" fill-rule="evenodd" stroke="#7c84a0" stroke-width="0.8" stroke-dasharray="1.5 1"/>
<ellipse cx="617" cy="152" rx="40" ry="18" fill="url(#cubesh)"/>
<polygon points="616.2,84.4 650.0,101.9 616.5,119.4 582.7,101.9" fill="#efefef" stroke="#9a9a9a" stroke-width="0.7" fill-opacity="0.95"/>
<polygon points="582.7,101.9 616.5,119.4 616.6,159.4 584.4,137.5" fill="url(#cubel)" stroke="#9a9a9a" stroke-width="0.7" fill-opacity="0.85"/>
<polygon points="616.5,119.4 650.0,101.9 648.0,138.0 616.6,159.4" fill="url(#cubel)" stroke="#9a9a9a" stroke-width="0.7" fill-opacity="0.8"/>
<text x="0" y="0" font-family="Liberation Sans" font-size="8" fill="#7c7c7c" font-weight="bold" transform="translate(609,97) rotate(27) skewX(-20)">TOP</text>
<text x="0" y="0" font-family="Liberation Sans" font-size="8" fill="#7c7c7c" font-weight="bold" transform="translate(589,121) rotate(27)">FRONT</text>
<text x="0" y="0" font-family="Liberation Sans" font-size="8" fill="#7c7c7c" font-weight="bold" transform="translate(623,141) rotate(-33)">RIGHT</text>
<text x="0" y="0" font-family="Liberation Sans" font-size="11" font-weight="bold" fill="#eef0f6" stroke="#8a8a8a" stroke-width="0.8" transform="translate(567,174) rotate(-25)">S</text>
<text x="0" y="0" font-family="Liberation Sans" font-size="11" font-weight="bold" fill="#eef0f6" stroke="#8a8a8a" stroke-width="0.8" transform="translate(652,176) rotate(-28)">E</text>
<rect x="669.6" y="201" width="33" height="114" rx="6" fill="#c4d0ee" fill-opacity="0.55" stroke="#8896c0" stroke-width="1"/>
<circle cx="695.7" cy="205.7" r="3.5" fill="#dde3f2" stroke="#8c96b4" stroke-width="0.6"/>
<polyline points="694.0,204.0 697.4,207.4" fill="none" stroke="#777" stroke-width="0.8" />
<polyline points="697.4,204.0 694.0,207.4" fill="none" stroke="#777" stroke-width="0.8" />
<path d="M676,231 a10,10 0 1,1 20,0 v4 a4,4 0 0,1 -4,4 h-12 a4,4 0 0,1 -4,-4 Z" fill="#e8ecf5" stroke="#7c869e" stroke-width="0.9"/>
<circle cx="686" cy="231" r="6" fill="#d8dde9" stroke="#7c869e" stroke-width="0.9"/>
<polygon points="682.5,249.0 688.5,249.0 685.5,252.5" fill="#7a84a0" stroke="none" stroke-width="1" />
<polyline points="673.0,257.5 699.0,257.5" fill="none" stroke="#8894b8" stroke-width="0.8" />
<rect x="677" y="265" width="10" height="10" fill="#8fcf8a" stroke="#5a8f55" stroke-width="0.7"/>
<circle cx="690" cy="276" r="3.5" fill="#dfe6f5" stroke="#555" stroke-width="0.9"/>
<polyline points="692.5,278.5 696.0,282.0" fill="none" stroke="#555" stroke-width="1.4" />
<polygon points="682.5,292.0 688.5,292.0 685.5,295.5" fill="#7a84a0" stroke="none" stroke-width="1" />
<circle cx="695.7" cy="308" r="3.5" fill="#dde3f2" stroke="#8c96b4" stroke-width="0.6"/>
<polyline points="693.5,307.5 698.0,307.5" fill="none" stroke="#777" stroke-width="0.8" />
<rect x="704" y="33" width="19" height="821" fill="#f0f0f0"/>
<rect x="705" y="435" width="15" height="16" fill="#cdcdcd"/>
<polyline points="708.5,45.0 712.5,41.0 716.5,45.0" fill="none" stroke="#555" stroke-width="2" />
<polyline points="708.5,843.0 712.5,847.0 716.5,843.0" fill="none" stroke="#555" stroke-width="2" />
<rect x="10" y="854" width="713" height="18" fill="#f0f0f0"/>
<rect x="534" y="855" width="17" height="15" fill="#cdcdcd"/>
<polyline points="391.0,858.0 387.0,862.0 391.0,866.0" fill="none" stroke="#555" stroke-width="2" />
<polyline points="693.5,858.0 697.5,862.0 693.5,866.0" fill="none" stroke="#555" stroke-width="2" />
<text x="22" y="867" font-family="Liberation Sans" font-size="11" fill="#000">1/8" = 1'-0"</text>
<rect x="89.5" y="855.5" width="15" height="11" fill="#fff" stroke="#3a3a3a" stroke-width="1"/>
<rect x="90" y="856" width="4" height="3" fill="#555"/>
<rect x="97" y="856" width="4" height="3" fill="#ccc"/>
<rect x="90" y="861" width="4" height="3" fill="#999"/>
<rect x="97" y="861" width="4" height="3" fill="#444"/>
<rect x="93" y="858" width="4" height="3" fill="#777"/>
<rect x="100" y="858" width="4" height="3" fill="#888"/>
<polygon points="111.5,859.0 115.0,856.0 125.0,856.0 125.0,864.0 121.5,867.0 111.5,867.0" fill="#e4e6ea" stroke="#3a3a3a" stroke-width="1" />
<polyline points="111.5,859.0 121.5,859.0 125.0,856.0" fill="none" stroke="#3a3a3a" stroke-width="1" />
<polyline points="121.5,859.0 121.5,867.0" fill="none" stroke="#3a3a3a" stroke-width="1" />
<circle cx="136" cy="859.5" r="3.6" fill="#f4d03a" stroke="#d49a10" stroke-width="0.8"/>
<polyline points="140.8,859.5 142.2,859.5" fill="none" stroke="#e0a820" stroke-width="1" />
<polyline points="139.4,862.9 140.4,863.9" fill="none" stroke="#e0a820" stroke-width="1" />
<polyline points="136.0,864.3 136.0,865.7" fill="none" stroke="#e0a820" stroke-width="1" />
<polyline points="132.6,862.9 131.6,863.9" fill="none" stroke="#e0a820" stroke-width="1" />
<polyline points="131.2,859.5 129.8,859.5" fill="none" stroke="#e0a820" stroke-width="1" />
<polyline points="132.6,856.1 131.6,855.1" fill="none" stroke="#e0a820" stroke-width="1" />
<polyline points="136.0,854.7 136.0,853.3" fill="none" stroke="#e0a820" stroke-width="1" />
<polyline points="139.4,856.1 140.4,855.1" fill="none" stroke="#e0a820" stroke-width="1" />
<polyline points="138.5,861.0 144.5,867.0" fill="none" stroke="#d0201a" stroke-width="2" /><polyline points="144.5,861.0 138.5,867.0" fill="none" stroke="#d0201a" stroke-width="2" />
<circle cx="158" cy="859" r="4" fill="#cfe3f8" stroke="#3a7fd0" stroke-width="1"/>
<polyline points="154.0,867.0 160.0,867.0" fill="none" stroke="#333" stroke-width="1.2" />
<polyline points="160.0,861.0 166.0,867.0" fill="none" stroke="#d0201a" stroke-width="2" /><polyline points="166.0,861.0 160.0,867.0" fill="none" stroke="#d0201a" stroke-width="2" />
<polygon points="173.0,858.0 178.0,857.0 181.0,860.0 183.0,864.0 176.0,865.0" fill="#dde0e6" stroke="#3a3a3a" stroke-width="0.9" />
<circle cx="185" cy="863" r="3" fill="#dfeefc" stroke="#2f7fe0" stroke-width="1.1"/>
<polyline points="184.0,866.0 184.0,868.0" fill="none" stroke="#555" stroke-width="1.2" />
<polyline points="193.0,862.0 197.0,862.0" fill="none" stroke="#3a3a3a" stroke-width="1" />
<polygon points="197.0,858.0 207.0,858.0 207.0,866.0 197.0,866.0" fill="none" stroke="#2c6fd0" stroke-width="1.6" />
<polyline points="201.0,855.5 205.0,855.5" fill="none" stroke="#3a3a3a" stroke-width="1" />
<polyline points="201.5,860.5 207.5,866.5" fill="none" stroke="#d0201a" stroke-width="2" /><polyline points="207.5,860.5 201.5,866.5" fill="none" stroke="#d0201a" stroke-width="2" />
<polyline points="214.0,862.0 218.0,862.0" fill="none" stroke="#3a3a3a" stroke-width="1" />
<polygon points="218.0,858.0 226.0,858.0 226.0,866.0 218.0,866.0" fill="none" stroke="#2c6fd0" stroke-width="1.6" />
<circle cx="227" cy="861" r="3" fill="#dfeefc" stroke="#2f7fe0" stroke-width="1.1"/>
<polyline points="226.5,864.0 226.5,867.0" fill="none" stroke="#555" stroke-width="1.2" />
<polygon points="236.0,860.0 242.0,855.0 249.0,860.0 249.0,867.0 236.0,867.0" fill="#e8e8e8" stroke="#3a3a3a" stroke-width="1" />
<rect x="243" y="862" width="6" height="5" fill="#3a9a80" stroke="#236a55" stroke-width="0.7"/>
<polyline points="256.0,860.0 259.0,862.0 262.0,862.0 265.0,861.0 268.0,859.0 271.0,860.0" fill="none" stroke="#3a3a3a" stroke-width="1" />
<ellipse cx="262" cy="863.5" rx="3" ry="2.5" fill="#bfe0f0" stroke="#3a3a3a" stroke-width="0.9"/>
<ellipse cx="268.5" cy="862.5" rx="3" ry="2.5" fill="#bfe0f0" stroke="#3a3a3a" stroke-width="0.9"/>
<circle cx="285" cy="861" r="3" fill="#dfeefc" stroke="#2f7fe0" stroke-width="1.1"/>
<polyline points="285.0,864.0 285.0,867.0" fill="none" stroke="#555" stroke-width="1.2" />
<polygon points="299.5,857.5 312.5,857.5 312.5,867.5 299.5,867.5" fill="#e6e6e6" stroke="#111" stroke-width="1.2" stroke-dasharray="2 1"/>
<rect x="306" y="862" width="4" height="3.5" fill="none" stroke="#111" stroke-width="1"/>
<polyline points="320.0,857.0 320.0,867.0" fill="none" stroke="#3a3a3a" stroke-width="0.8" />
<polyline points="323.0,857.0 323.0,867.0" fill="none" stroke="#3a3a3a" stroke-width="0.8" />
<polyline points="326.0,857.0 326.0,867.0" fill="none" stroke="#3a3a3a" stroke-width="0.8" />
<polyline points="329.0,857.0 329.0,867.0" fill="none" stroke="#3a3a3a" stroke-width="0.8" />
<polyline points="319.0,858.0 331.0,858.0" fill="none" stroke="#3a3a3a" stroke-width="0.8" />
<polyline points="319.0,861.0 331.0,861.0" fill="none" stroke="#3a3a3a" stroke-width="0.8" />
<polyline points="319.0,864.0 331.0,864.0" fill="none" stroke="#3a3a3a" stroke-width="0.8" />
<polyline points="321.0,863.0 321.0,868.0" fill="none" stroke="#d02a20" stroke-width="1.2" />
<polyline points="324.0,863.0 324.0,868.0" fill="none" stroke="#d02a20" stroke-width="1.2" />
<circle cx="332" cy="861" r="3" fill="#dfeefc" stroke="#2f7fe0" stroke-width="1.1"/>
<polygon points="341.5,860.0 345.0,857.0 355.0,857.0 355.0,864.0 351.5,867.0 341.5,867.0" fill="#d8d8d8" stroke="#3a3a3a" stroke-width="1" />
<polyline points="341.5,860.0 351.5,860.0 355.0,857.0" fill="none" stroke="#3a3a3a" stroke-width="1" />
<polyline points="351.5,860.0 351.5,867.0" fill="none" stroke="#3a3a3a" stroke-width="1" />
<polyline points="361.0,856.0 361.0,868.0" fill="none" stroke="#3a3a3a" stroke-width="1" />
<polyline points="361.0,857.0 376.0,857.0" fill="none" stroke="#3a3a3a" stroke-width="1" />
<polyline points="376.0,855.0 376.0,860.0" fill="none" stroke="#3a3a3a" stroke-width="1" />
<rect x="370" y="862" width="6" height="5" fill="#777" stroke="#333" stroke-width="0.7"/>
<rect x="716" y="861" width="2" height="2" fill="#b8b8b8"/>
<rect x="713" y="864" width="2" height="2" fill="#b8b8b8"/>
<rect x="716" y="864" width="2" height="2" fill="#b8b8b8"/>
<rect x="710" y="867" width="2" height="2" fill="#b8b8b8"/>
<rect x="713" y="867" width="2" height="2" fill="#b8b8b8"/>
<rect x="716" y="867" width="2" height="2" fill="#b8b8b8"/>
</svg>
<!--/V3D-->
  </div>
</div>

<!-- RIGHT WINDOW -->
<div class="win" id="wr">
  <svg class="ico" style="left:9px" viewBox="0 0 16 16"><path d="M0 0H12L16 4V16H0Z" fill="#0a3a8c"/><path d="M1 1H11V5H15V9H1Z" fill="#f2f5fa"/><text x="8" y="15.3" font-size="6.4" font-weight="bold" fill="#fff" text-anchor="middle" font-family="Liberation Sans" textLength="12" lengthAdjust="spacingAndGlyphs">RVT</text></svg>
  <div class="title" style="left:29px;color:#000">Schedule: Revit Links Schedule - Architecture_Visualization_Groups.rvt</div>
  <div class="btn" style="left:620px"><svg width="29" height="15" style="position:absolute;left:0;top:0"><rect x="9.5" y="7.5" width="10" height="4" rx="1.2" fill="#fbfbf6" stroke="#3c4658" stroke-width="1"/></svg></div>
  <div class="btn" style="left:654px"><svg width="29" height="15" style="position:absolute;left:0;top:0"><path d="M9.5 3.5h10v8.5h-10z M12 6.2h5v3h-5z" fill="#fbfbf6" fill-rule="evenodd" stroke="#3c4658" stroke-width="1"/><rect x="12.5" y="6.5" width="4" height="2.2" fill="#8aa8cc"/></svg></div>
  <div class="btn close" style="left:688px"><svg width="29" height="15" style="position:absolute;left:0;top:0"><path d="M10.5 4.5L18.5 12.5M18.5 4.5L10.5 12.5" stroke="#5a2020" stroke-width="4.4" stroke-linecap="round"/><path d="M10.5 4.5L18.5 12.5M18.5 4.5L10.5 12.5" stroke="#fbfbf6" stroke-width="2.6" stroke-linecap="butt"/></svg></div>
  <div class="abs" style="left:7px;top:30px;width:715px;height:842px;border-top:2px solid #6a6a6a;border-left:2px solid #6a6a6a;border-right:2px solid #fff;border-bottom:2px solid #fff;background:#d0d0d0;overflow:hidden" id="sc">
  </div>
</div>

<!-- SCHEDULE TABLE (page coords) -->
<div id="tbl" style="position:absolute;left:0;top:0;width:0;height:0;font-size:11px;color:#000">
  <div class="abs" style="left:740px;top:33px;width:508px;height:40px;border:1px solid #000;background:#fff"></div>
  <div class="abs" style="left:740px;top:46px;width:508px;text-align:center;font-size:12.3px">&lt;Revit Links Schedule&gt;</div>
  <div class="abs" style="left:740px;top:73px;width:508px;height:16px;background:#efefef;border-left:1px solid #000;border-right:1px solid #000"></div>
  <div class="abs" style="left:740px;top:89px;width:508px;height:2px;background:#000"></div>
  <div class="abs" style="left:740px;top:91px;width:508px;height:15px;background:#fff;border-left:1px solid #000;border-right:1px solid #000;border-bottom:1px solid #000"></div>
  <div class="abs" style="left:836px;top:73px;width:1px;height:16px;background:#000"></div>
  <div class="abs" style="left:932px;top:73px;width:1px;height:16px;background:#000"></div>
  <div class="abs" style="left:1028px;top:73px;width:1px;height:16px;background:#000"></div>
  <div class="vdot" style="left:836px;top:91px;height:14px"></div>
  <div class="vdot" style="left:932px;top:91px;height:14px"></div>
  <div class="vdot" style="left:1028px;top:91px;height:14px"></div>
  <div class="hd" style="left:741px;width:95px">A</div>
  <div class="hd" style="left:837px;width:95px">B</div>
  <div class="hd" style="left:933px;width:95px">C</div>
  <div class="hd" style="left:1029px;width:218px">D</div>
  <div class="nm" style="left:741px;width:95px">Count</div>
  <div class="nm" style="left:837px;width:95px">Name</div>
  <div class="nm" style="left:933px;width:95px">Room Bounding</div>
  <div class="nm" style="left:1029px;width:218px">Type</div>
  <!-- data block -->
  <div class="abs" style="left:740px;top:121px;width:508px;height:65px;background:#fff;border:1px solid #000"></div>
  <div class="hdot" style="left:741px;top:137px;width:506px"></div>
  <div class="hdot" style="left:741px;top:153px;width:506px"></div>
  <div class="hdot" style="left:741px;top:169px;width:506px"></div>
  <div class="vdot" style="left:836px;top:122px;height:63px"></div>
  <div class="vdot" style="left:932px;top:122px;height:63px"></div>
  <div class="vdot" style="left:1028px;top:122px;height:63px"></div>
  <div class="dt" style="left:744px;top:123px">1</div>
  <div class="dt" style="left:744px;top:139px">1</div>
  <div class="dt" style="left:744px;top:155px">1</div>
  <div class="dt" style="left:744px;top:171px">1</div>
  <div class="dt" style="left:839px;top:123px">3</div>
  <div class="dt" style="left:839px;top:139px">6</div>
  <div class="dt" style="left:839px;top:155px">8</div>
  <div class="dt" style="left:839px;top:171px">9</div>
  <div class="cb" style="top:124px"></div>
  <div class="cb" style="top:140px"></div>
  <div class="cb" style="top:156px"></div>
  <div class="cb" style="top:172px"></div>
  <div class="dt" style="left:1031px;top:123px">Structure_2017.rvt</div>
  <div class="dt" style="left:1031px;top:139px">Structure_2017.rvt</div>
  <div class="abs" style="left:1031px;top:154px;width:35px;height:14px;background:#3399ff"></div>
  <div class="abs" style="left:1065px;top:154px;width:1px;height:14px;background:#e08020"></div>
  <div class="dt" style="left:1031px;top:155px;color:#fff">Site.rvt</div>
  <div class="dt" style="left:1031px;top:171px">MEP.rvt</div>
  <div class="abs" style="left:1231px;top:154px;width:15px;height:14px;border:1px solid #a0a0a0;background:linear-gradient(#f2f2f2,#d8d8d8)"><svg width="13" height="12" style="position:absolute;left:0;top:0"><path d="M3 6L6.5 9.5L10 6" stroke="#444" stroke-width="1.2" fill="none"/></svg></div>
  <svg class="abs" style="left:1077px;top:157px" width="10" height="18"><path d="M2 1.5H4.5M5.5 1.5H8M5 1.5V16.5M2 16.5H4.5M5.5 16.5H8" stroke="#000" stroke-width="1.3" fill="none"/></svg>
</div>
</body></html>
